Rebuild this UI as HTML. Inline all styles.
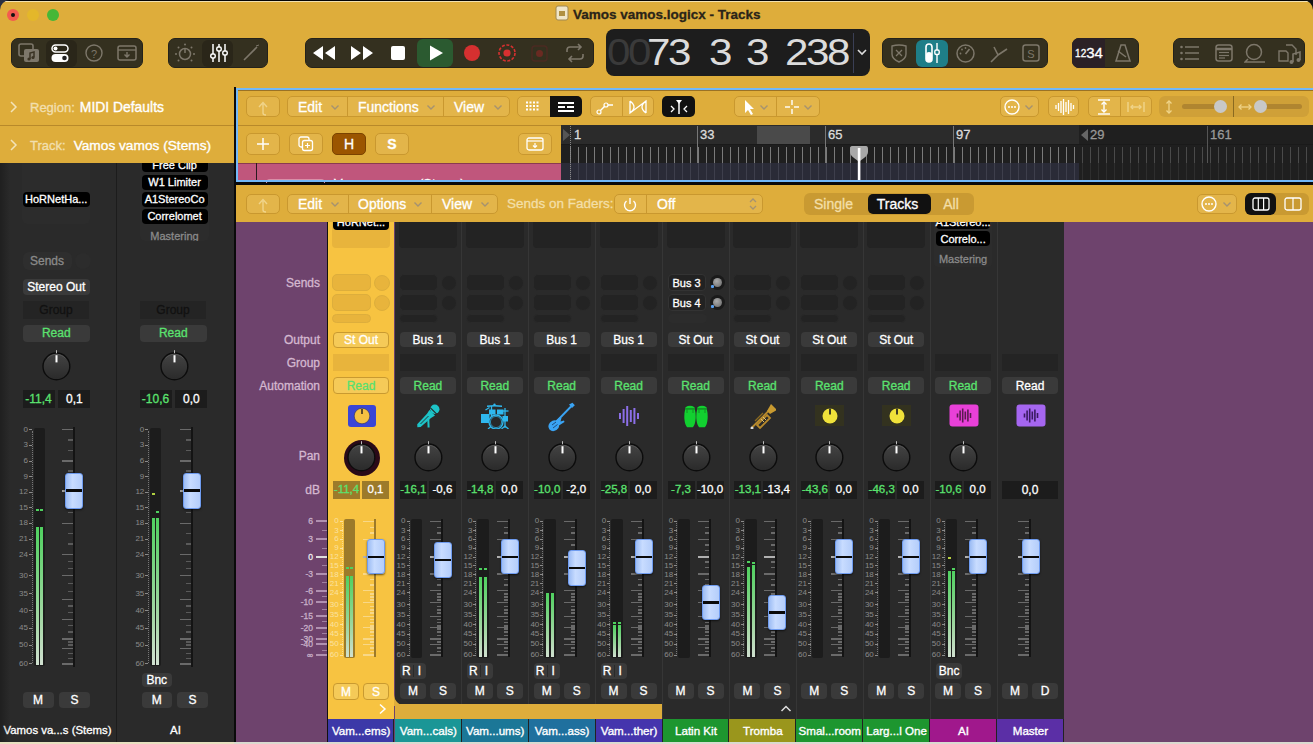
<!DOCTYPE html><html><head><meta charset="utf-8"><style>
html,body{margin:0;padding:0;}
body{width:1313px;height:744px;position:relative;overflow:hidden;font-family:"Liberation Sans",sans-serif;background:#DEAD3B;}
div{position:absolute;box-sizing:border-box;}
.t{white-space:nowrap;-webkit-text-stroke:0.3px currentColor;}
.n{-webkit-text-stroke:0 !important;}
</style></head><body>
<div style="left:0px;top:0px;width:1313px;height:744px;background:#DEAD3B;"></div>
<div style="left:0px;top:0px;width:1313px;height:1px;background:#050505;"></div>
<div style="left:0px;top:1px;width:1313px;height:1px;background:#F3E2B0;"></div>
<svg style="position:absolute;left:0px;top:0px;" width="10" height="10" viewBox="0 0 10 10"><path d="M0 0 H10 A10 10 0 0 0 0 10 Z" fill="#2a3040"/></svg>
<svg style="position:absolute;left:1303px;top:0px;" width="10" height="10" viewBox="0 0 10 10"><path d="M0 0 H10 V10 A10 10 0 0 0 0 0 Z" fill="#111"/></svg>
<div style="left:7px;top:9px;width:12px;height:12px;background:#F45B4F;border-radius:50%;"></div>
<div style="left:27px;top:9px;width:12px;height:12px;background:#E4B72A;border-radius:50%;"></div>
<div style="left:47px;top:9px;width:12px;height:12px;background:#45B737;border-radius:50%;"></div>
<div style="left:11px;top:13px;width:4px;height:4px;background:#111;border-radius:50%;"></div>
<svg style="position:absolute;left:555px;top:5px;" width="14" height="16" viewBox="0 0 14 16"><rect x="1" y="1" width="12" height="14" rx="2" fill="#f0e6c8" stroke="#a08850" stroke-width="1"/><rect x="4" y="6" width="6" height="5" fill="#b09040"/></svg>
<div class="t" style="left:573px;top:0.5px;height:27.0px;line-height:27.0px;font-size:13.5px;color:#2a2418;font-weight:bold;white-space:nowrap;">Vamos vamos.logicx - Tracks</div>
<div style="left:11px;top:38px;width:132px;height:30px;background:#34301F;border:1px solid #24221a;border-radius:7px;"></div>
<div style="left:46px;top:40px;width:31px;height:27px;background:#2A2619;border-radius:6px;"></div>
<div style="left:168px;top:38px;width:100px;height:30px;background:#34301F;border:1px solid #24221a;border-radius:7px;"></div>
<div style="left:202px;top:40px;width:31px;height:27px;background:#2A2619;border-radius:6px;"></div>
<div style="left:305px;top:38px;width:289px;height:30px;background:#34301F;border:1px solid #24221a;border-radius:7px;"></div>
<div style="left:417px;top:39px;width:36px;height:28px;background:#2B5A30;border-radius:6px;"></div>
<div style="left:882px;top:38px;width:166px;height:30px;background:#34301F;border:1px solid #24221a;border-radius:7px;"></div>
<div style="left:916px;top:40px;width:32px;height:27px;background:#1E7E88;border-radius:6px;"></div>
<div style="left:1072px;top:38px;width:67px;height:30px;background:#34301F;border:1px solid #24221a;border-radius:7px;"></div>
<div style="left:1072px;top:38px;width:33px;height:30px;background:#2B2126;border-radius:7px 0 0 7px;"></div>
<div style="left:1173px;top:38px;width:132px;height:30px;background:#34301F;border:1px solid #24221a;border-radius:7px;"></div>
<svg style="position:absolute;left:17px;top:41px;" width="24" height="24" viewBox="0 0 24 24"><rect x="2" y="3" width="14" height="12" rx="2" fill="none" stroke="#7d776a" stroke-width="1.6"/><rect x="7" y="8" width="15" height="13" rx="2" fill="#7d776a"/><path d="M13 18 v-6 l4 -1 v5" stroke="#3a3323" stroke-width="1.5" fill="none"/><circle cx="12" cy="18" r="1.6" fill="#3a3323"/><circle cx="16" cy="16.5" r="1.6" fill="#3a3323"/></svg>
<svg style="position:absolute;left:50px;top:43px;" width="22" height="20" viewBox="0 0 22 20"><rect x="2" y="2" width="16" height="7" rx="3.5" fill="none" stroke="#fff" stroke-width="1.5"/><circle cx="5.5" cy="5.5" r="2" fill="#fff"/><rect x="1.5" y="11" width="17" height="8" rx="4" fill="#fff"/><circle cx="14.5" cy="15" r="2.3" fill="#222"/></svg>
<svg style="position:absolute;left:84px;top:43px;" width="20" height="20" viewBox="0 0 20 20"><circle cx="10" cy="10" r="8" fill="none" stroke="#7d776a" stroke-width="1.4"/><text x="10" y="14.5" font-size="11" text-anchor="middle" fill="#7d776a" font-family="Liberation Sans">?</text></svg>
<svg style="position:absolute;left:117px;top:44px;" width="20" height="18" viewBox="0 0 20 18"><rect x="1" y="2" width="18" height="14" rx="2" fill="none" stroke="#7d776a" stroke-width="1.5"/><line x1="1" y1="6" x2="19" y2="6" stroke="#7d776a" stroke-width="1.3"/><path d="M10 8 v5 M7.5 10.5 l2.5 2.5 l2.5 -2.5" stroke="#7d776a" stroke-width="1.4" fill="none"/></svg>
<svg style="position:absolute;left:174px;top:42px;" width="22" height="22" viewBox="0 0 22 22"><circle cx="11" cy="12" r="5.5" fill="none" stroke="#7d776a" stroke-width="1.5"/><line x1="11" y1="6" x2="11" y2="11" stroke="#7d776a" stroke-width="1.5"/><g fill="#7d776a"><circle cx="11" cy="2.5" r="1"/><circle cx="2" cy="12" r="1"/><circle cx="20" cy="12" r="1"/><circle cx="4.5" cy="5.5" r="1"/><circle cx="17.5" cy="5.5" r="1"/><circle cx="4.5" cy="18.5" r="1"/><circle cx="17.5" cy="18.5" r="1"/></g></svg>
<svg style="position:absolute;left:208px;top:42px;" width="22" height="22" viewBox="0 0 22 22"><g stroke="#fff" stroke-width="1.5" fill="none"><line x1="5" y1="2" x2="5" y2="20"/><line x1="11" y1="2" x2="11" y2="20"/><line x1="17" y1="2" x2="17" y2="20"/></g><g fill="#2a2619" stroke="#fff" stroke-width="1.5"><rect x="2.8" y="12" width="4.4" height="4" rx="1.5"/><rect x="8.8" y="5" width="4.4" height="4" rx="1.5"/><rect x="14.8" y="9" width="4.4" height="4" rx="1.5"/></g></svg>
<svg style="position:absolute;left:241px;top:43px;" width="20" height="20" viewBox="0 0 20 20"><line x1="3" y1="17" x2="16" y2="4" stroke="#7d776a" stroke-width="1.6"/><line x1="15" y1="3" x2="18" y2="2" stroke="#7d776a" stroke-width="1"/></svg>
<svg style="position:absolute;left:311px;top:44px;" width="26" height="18" viewBox="0 0 26 18"><path d="M12 2 L2 9 L12 16 Z M24 2 L14 9 L24 16 Z" fill="#fff"/></svg>
<svg style="position:absolute;left:349px;top:44px;" width="26" height="18" viewBox="0 0 26 18"><path d="M2 2 L12 9 L2 16 Z M14 2 L24 9 L14 16 Z" fill="#fff"/></svg>
<div style="left:391px;top:46px;width:14px;height:14px;background:#fff;border-radius:2px;"></div>
<svg style="position:absolute;left:427px;top:44px;" width="18" height="18" viewBox="0 0 18 18"><path d="M3 1.5 L16 9 L3 16.5 Z" fill="#fff"/></svg>
<div style="left:464px;top:45px;width:16px;height:16px;background:#D63030;border-radius:50%;"></div>
<svg style="position:absolute;left:497px;top:43px;" width="20" height="20" viewBox="0 0 20 20"><circle cx="10" cy="10" r="8" fill="none" stroke="#D63030" stroke-width="1.6" stroke-dasharray="3 1.6"/><circle cx="10" cy="10" r="3.6" fill="#D63030"/></svg>
<svg style="position:absolute;left:531px;top:45px;" width="17" height="17" viewBox="0 0 17 17"><rect x="1" y="1" width="15" height="15" rx="3" fill="none" stroke="#4a2a22" stroke-width="1.5"/><circle cx="8.5" cy="8.5" r="3.5" fill="#6a2a22"/></svg>
<svg style="position:absolute;left:564px;top:43px;" width="22" height="20" viewBox="0 0 22 20"><path d="M3 9 V7 a3 3 0 0 1 3 -3 H17 M14 1 l3 3 l-3 3 M19 11 v2 a3 3 0 0 1 -3 3 H5 M8 19 l-3 -3 l3 -3" stroke="#7d776a" stroke-width="1.6" fill="none"/></svg>
<div style="left:606px;top:29px;width:264px;height:47px;background:#1d1d1d;border-radius:8px;"></div>
<div style="left:853px;top:33px;width:1px;height:40px;background:#3a3f55;"></div>
<svg style="position:absolute;left:856px;top:47px;" width="12" height="10" viewBox="0 0 12 10"><path d="M2 3 L6 7 L10 3" stroke="#ddd" stroke-width="1.6" fill="none"/></svg>
<div class="t" style="left:606.5px;top:15.5px;height:74px;line-height:74px;font-size:37px;color:#3a3a3a;font-weight:normal;white-space:nowrap;letter-spacing:-2.2px;-webkit-text-stroke:0;transform:scaleX(1.14);transform-origin:0 0;">00</div>
<div class="t" style="left:646.5px;top:15.5px;height:74px;line-height:74px;font-size:37px;color:#dcdcdc;font-weight:normal;white-space:nowrap;letter-spacing:-2.2px;-webkit-text-stroke:0;transform:scaleX(1.14);transform-origin:0 0;">73</div>
<div class="t" style="left:709px;top:15.5px;height:74px;line-height:74px;font-size:37px;color:#dcdcdc;font-weight:normal;white-space:nowrap;letter-spacing:-2.2px;-webkit-text-stroke:0;transform:scaleX(1.14);transform-origin:0 0;">3</div>
<div class="t" style="left:746px;top:15.5px;height:74px;line-height:74px;font-size:37px;color:#dcdcdc;font-weight:normal;white-space:nowrap;letter-spacing:-2.2px;-webkit-text-stroke:0;transform:scaleX(1.14);transform-origin:0 0;">3</div>
<div class="t" style="left:784.5px;top:15.5px;height:74px;line-height:74px;font-size:37px;color:#dcdcdc;font-weight:normal;white-space:nowrap;letter-spacing:-2.2px;-webkit-text-stroke:0;transform:scaleX(1.14);transform-origin:0 0;">238</div>
<svg style="position:absolute;left:890px;top:43px;" width="18" height="20" viewBox="0 0 18 20"><path d="M2 3 Q9 1 16 3 V11 Q16 16 9 19 Q2 16 2 11 Z" fill="none" stroke="#7d776a" stroke-width="1.4"/><path d="M6 7 L12 13 M12 7 L6 13" stroke="#7d776a" stroke-width="1.3"/></svg>
<svg style="position:absolute;left:922px;top:41px;" width="20" height="24" viewBox="0 0 20 24"><rect x="4" y="3" width="6" height="18" rx="3" fill="none" stroke="#fff" stroke-width="1.6"/><rect x="4" y="11" width="6" height="10" rx="3" fill="#fff"/><line x1="15" y1="2" x2="15" y2="22" stroke="#fff" stroke-width="1.4"/><rect x="12.8" y="9" width="4.4" height="4.5" rx="1.5" fill="#1E7E88" stroke="#fff" stroke-width="1.4"/></svg>
<svg style="position:absolute;left:955px;top:43px;" width="21" height="21" viewBox="0 0 21 21"><circle cx="10.5" cy="10.5" r="8.5" fill="none" stroke="#7d776a" stroke-width="1.5"/><path d="M10.5 11 L14.5 6" stroke="#7d776a" stroke-width="1.6"/><g fill="#7d776a"><circle cx="5.5" cy="10.5" r="0.9"/><circle cx="7" cy="6.5" r="0.9"/><circle cx="10.5" cy="5" r="0.9"/></g></svg>
<svg style="position:absolute;left:988px;top:42px;" width="22" height="22" viewBox="0 0 22 22"><path d="M3 20 L10 13 M10 13 L6 5 M10 13 L19 7" stroke="#7d776a" stroke-width="1.6" fill="none"/></svg>
<svg style="position:absolute;left:1021px;top:43px;" width="20" height="20" viewBox="0 0 20 20"><rect x="2" y="2" width="16" height="16" rx="2.5" fill="none" stroke="#7d776a" stroke-width="1.5"/><text x="10" y="14.5" font-size="11" text-anchor="middle" fill="#7d776a" font-family="Liberation Sans">S</text></svg>
<div class="t" style="left:1069.0px;top:38px;width:40px;height:30px;line-height:30px;font-size:15px;color:#fff;font-weight:normal;text-align:center;"><span style="font-size:10px;position:relative;top:-1px">12</span>34</div>
<svg style="position:absolute;left:1112px;top:42px;" width="22" height="22" viewBox="0 0 22 22"><path d="M4 19 L9 3 H13 L18 19 Z M4 19 H18" stroke="#7d776a" stroke-width="1.5" fill="none"/><line x1="6" y1="9" x2="14" y2="15" stroke="#7d776a" stroke-width="1.5"/></svg>
<svg style="position:absolute;left:1179px;top:44px;" width="22" height="18" viewBox="0 0 22 18"><g fill="#7d776a"><circle cx="2.5" cy="3" r="1.3"/><circle cx="2.5" cy="9" r="1.3"/><circle cx="2.5" cy="15" r="1.3"/></g><g stroke="#7d776a" stroke-width="1.5"><line x1="6" y1="3" x2="20" y2="3"/><line x1="6" y1="9" x2="20" y2="9"/><line x1="6" y1="15" x2="20" y2="15"/></g></svg>
<svg style="position:absolute;left:1214px;top:43px;" width="20" height="20" viewBox="0 0 20 20"><rect x="2" y="2" width="16" height="16" rx="2.5" fill="none" stroke="#7d776a" stroke-width="1.5"/><line x1="2" y1="6" x2="18" y2="6" stroke="#7d776a" stroke-width="2.5"/><g stroke="#7d776a" stroke-width="1.2"><line x1="5" y1="9.5" x2="15" y2="9.5"/><line x1="5" y1="12.5" x2="15" y2="12.5"/><line x1="5" y1="15" x2="11" y2="15"/></g></svg>
<svg style="position:absolute;left:1244px;top:43px;" width="22" height="20" viewBox="0 0 22 20"><circle cx="10" cy="9" r="7.5" fill="none" stroke="#7d776a" stroke-width="1.5"/><path d="M4 16 L1 19 H21" stroke="#7d776a" stroke-width="1.5" fill="none"/></svg>
<svg style="position:absolute;left:1277px;top:41px;" width="26" height="24" viewBox="0 0 26 24"><path d="M2 10 H9 L11 12 V20 H2 Z" fill="none" stroke="#7d776a" stroke-width="1.4"/><path d="M9 4 H15 L19 8 V14" fill="none" stroke="#7d776a" stroke-width="1.4"/><path d="M16 21 V13 L23 11 V19" stroke="#7d776a" stroke-width="1.6" fill="none"/><circle cx="14.5" cy="21" r="2" fill="#7d776a"/><circle cx="21.5" cy="19" r="2" fill="#7d776a"/></svg>
<div style="left:0px;top:88px;width:234px;height:75px;background:#DEAD3B;"></div>
<div style="left:0px;top:125px;width:234px;height:1px;background:#b8892a;"></div>
<svg style="position:absolute;left:9px;top:100px;" width="10" height="14" viewBox="0 0 10 14"><path d="M2 2 L7 7 L2 12" stroke="#f3e3b8" stroke-width="1.5" fill="none"/></svg>
<svg style="position:absolute;left:9px;top:138px;" width="10" height="14" viewBox="0 0 10 14"><path d="M2 2 L7 7 L2 12" stroke="#f3e3b8" stroke-width="1.5" fill="none"/></svg>
<div class="t" style="left:30px;top:94px;height:26px;line-height:26px;font-size:13px;color:#fff;font-weight:normal;white-space:nowrap;-webkit-text-stroke:0.35px currentColor;"><span style="color:#F2DFAE">Region:</span><span style="margin-left:6px">MIDI Defaults</span></div>
<div class="t" style="left:30px;top:132px;height:26px;line-height:26px;font-size:13px;color:#fff;font-weight:normal;white-space:nowrap;-webkit-text-stroke:0.35px currentColor;"><span style="color:#F2DFAE">Track:</span><span style="margin-left:9px">Vamos vamos (Stems)</span></div>
<div style="left:234px;top:87px;width:2px;height:97px;background:#0a0a0a;"></div>
<div style="left:236px;top:88px;width:1077px;height:95px;background:#72B8F8;"></div>
<div style="left:238px;top:90px;width:1075px;height:91px;background:#DEAD3B;"></div>
<div style="left:238px;top:90px;width:1075px;height:1px;background:#9a7225;"></div>
<div style="left:238px;top:125px;width:1075px;height:1px;background:#b8892a;"></div>
<div style="left:0px;top:182px;width:1313px;height:3px;background:#0a0a0a;"></div>
<div style="left:246px;top:96px;width:34px;height:21px;background:#E3B54A;border:1px solid #C9982F;box-sizing:border-box;border-radius:5px;"></div>
<svg style="position:absolute;left:254px;top:98px;" width="18" height="18" viewBox="0 0 18 18"><path d="M9 15 V6 M5 9 L9 4.5 L13 9 M9 15 Q9 17 12 17" stroke="#F0D48A" stroke-width="1.4" fill="none"/></svg>
<div style="left:287px;top:96px;width:223px;height:21px;background:#E3B54A;border:1px solid #C9982F;box-sizing:border-box;border-radius:5px;"></div>
<div style="left:347px;top:97px;width:1px;height:19px;background:#C9982F;"></div>
<div style="left:443px;top:97px;width:1px;height:19px;background:#C9982F;"></div>
<div class="t" style="left:298px;top:92.5px;height:28px;line-height:28px;font-size:14px;color:#fff;font-weight:normal;white-space:nowrap;">Edit</div>
<svg style="position:absolute;left:330px;top:104px;" width="10" height="7" viewBox="0 0 10 7"><path d="M1.5 1.5 L5 5 L8.5 1.5" stroke="#A59270" stroke-width="1.4" fill="none"/></svg>
<div class="t" style="left:358px;top:92.5px;height:28px;line-height:28px;font-size:14px;color:#fff;font-weight:normal;white-space:nowrap;">Functions</div>
<svg style="position:absolute;left:426px;top:104px;" width="10" height="7" viewBox="0 0 10 7"><path d="M1.5 1.5 L5 5 L8.5 1.5" stroke="#A59270" stroke-width="1.4" fill="none"/></svg>
<div class="t" style="left:454px;top:92.5px;height:28px;line-height:28px;font-size:14px;color:#fff;font-weight:normal;white-space:nowrap;">View</div>
<svg style="position:absolute;left:493px;top:104px;" width="10" height="7" viewBox="0 0 10 7"><path d="M1.5 1.5 L5 5 L8.5 1.5" stroke="#A59270" stroke-width="1.4" fill="none"/></svg>
<div style="left:517px;top:96px;width:65px;height:21px;background:#E3B54A;border:1px solid #C9982F;box-sizing:border-box;border-radius:5px;"></div>
<div style="left:550px;top:96px;width:32px;height:21px;background:#111;border-radius:0 5px 5px 0;"></div>
<svg style="position:absolute;left:524px;top:99px;" width="18" height="16" viewBox="0 0 18 16"><g fill="#fff"><rect x="2.0" y="2.5" width="2" height="2"/><rect x="2.0" y="6.0" width="2" height="2"/><rect x="2.0" y="9.5" width="2" height="2"/><rect x="5.5" y="2.5" width="2" height="2"/><rect x="5.5" y="6.0" width="2" height="2"/><rect x="5.5" y="9.5" width="2" height="2"/><rect x="9.0" y="2.5" width="2" height="2"/><rect x="9.0" y="6.0" width="2" height="2"/><rect x="9.0" y="9.5" width="2" height="2"/><rect x="12.5" y="2.5" width="2" height="2"/><rect x="12.5" y="6.0" width="2" height="2"/><rect x="12.5" y="9.5" width="2" height="2"/></g></svg>
<svg style="position:absolute;left:556px;top:99px;" width="20" height="16" viewBox="0 0 20 16"><g fill="#fff"><rect x="2" y="3" width="16" height="2"/><rect x="2" y="7" width="7" height="2"/><rect x="11" y="7" width="7" height="2"/><rect x="2" y="11" width="16" height="2"/></g></svg>
<div style="left:590px;top:96px;width:64px;height:21px;background:#E3B54A;border:1px solid #C9982F;box-sizing:border-box;border-radius:5px;"></div>
<div style="left:622px;top:97px;width:1px;height:19px;background:#C9982F;"></div>
<svg style="position:absolute;left:594px;top:98px;" width="24" height="18" viewBox="0 0 24 18"><path d="M5 14 L12 7 H19" stroke="#fff" stroke-width="1.4" fill="none"/><circle cx="5" cy="14" r="2" fill="#E3B54A" stroke="#fff" stroke-width="1.2"/><circle cx="12" cy="7" r="2" fill="#E3B54A" stroke="#fff" stroke-width="1.2"/></svg>
<svg style="position:absolute;left:626px;top:98px;" width="24" height="18" viewBox="0 0 24 18"><path d="M4 3 V15 L20 3 V15 M4 3 Q12 9 4 15 M20 3 Q12 9 20 15" stroke="#fff" stroke-width="1.3" fill="none"/></svg>
<div style="left:662px;top:96px;width:33px;height:21px;background:#111;border-radius:5px;"></div>
<svg style="position:absolute;left:668px;top:98px;" width="22" height="18" viewBox="0 0 22 18"><path d="M11 5 V16" stroke="#fff" stroke-width="1.5"/><path d="M8 2 H14 L11 6 Z" fill="#fff"/><path d="M3 8 L6 11 L3 14 M19 8 L16 11 L19 14" stroke="#fff" stroke-width="1.3" fill="none"/></svg>
<div style="left:734px;top:96px;width:86px;height:21px;background:#E3B54A;border:1px solid #C9982F;box-sizing:border-box;border-radius:5px;"></div>
<div style="left:776px;top:97px;width:1px;height:19px;background:#C9982F;"></div>
<svg style="position:absolute;left:742px;top:98px;" width="14" height="18" viewBox="0 0 14 18"><path d="M3 2 L3 15 L6 12 L9 17 L11 16 L8 11 L12 11 Z" fill="#fff"/></svg>
<svg style="position:absolute;left:759px;top:104px;" width="10" height="7" viewBox="0 0 10 7"><path d="M1.5 1.5 L5 5 L8.5 1.5" stroke="#A59270" stroke-width="1.4" fill="none"/></svg>
<svg style="position:absolute;left:783px;top:98px;" width="18" height="18" viewBox="0 0 18 18"><g stroke="#fff" stroke-width="1.4"><line x1="9" y1="2" x2="9" y2="7"/><line x1="9" y1="11" x2="9" y2="16"/><line x1="2" y1="9" x2="7" y2="9"/><line x1="11" y1="9" x2="16" y2="9"/></g></svg>
<svg style="position:absolute;left:803px;top:104px;" width="10" height="7" viewBox="0 0 10 7"><path d="M1.5 1.5 L5 5 L8.5 1.5" stroke="#A59270" stroke-width="1.4" fill="none"/></svg>
<div style="left:1000px;top:96px;width:39px;height:21px;background:#E3B54A;border:1px solid #C9982F;box-sizing:border-box;border-radius:5px;"></div>
<svg style="position:absolute;left:1003px;top:98px;" width="18" height="18" viewBox="0 0 18 18"><circle cx="9" cy="9" r="7" fill="none" stroke="#fff" stroke-width="1.4"/><g fill="#fff"><circle cx="6" cy="9" r="1"/><circle cx="9" cy="9" r="1"/><circle cx="12" cy="9" r="1"/></g></svg>
<svg style="position:absolute;left:1024px;top:104px;" width="10" height="7" viewBox="0 0 10 7"><path d="M1.5 1.5 L5 5 L8.5 1.5" stroke="#A59270" stroke-width="1.4" fill="none"/></svg>
<div style="left:1048px;top:96px;width:31px;height:21px;background:#E3B54A;border:1px solid #C9982F;box-sizing:border-box;border-radius:5px;"></div>
<svg style="position:absolute;left:1053px;top:98px;" width="22" height="18" viewBox="0 0 22 18"><g stroke="#fff" stroke-width="1.3"><line x1="3.0" y1="7" x2="3.0" y2="11"/><line x1="5.5" y1="5" x2="5.5" y2="13"/><line x1="8.0" y1="3" x2="8.0" y2="15"/><line x1="10.5" y1="1" x2="10.5" y2="17"/><line x1="13.0" y1="4" x2="13.0" y2="14"/><line x1="15.5" y1="2" x2="15.5" y2="16"/><line x1="18.0" y1="5" x2="18.0" y2="13"/><line x1="20.5" y1="7" x2="20.5" y2="11"/></g></svg>
<div style="left:1088px;top:96px;width:64px;height:21px;background:#E3B54A;border:1px solid #C9982F;box-sizing:border-box;border-radius:5px;"></div>
<div style="left:1120px;top:97px;width:1px;height:19px;background:#C9982F;"></div>
<svg style="position:absolute;left:1094px;top:98px;" width="20" height="18" viewBox="0 0 20 18"><g stroke="#fff" stroke-width="1.4" fill="none"><line x1="4" y1="2" x2="16" y2="2"/><line x1="4" y1="16" x2="16" y2="16"/><line x1="10" y1="4" x2="10" y2="14"/><path d="M7.5 6.5 L10 4 L12.5 6.5 M7.5 11.5 L10 14 L12.5 11.5"/></g></svg>
<svg style="position:absolute;left:1126px;top:98px;" width="20" height="18" viewBox="0 0 20 18"><g stroke="#F0D48A" stroke-width="1.4" fill="none"><line x1="2" y1="4" x2="2" y2="14"/><line x1="18" y1="4" x2="18" y2="14"/><line x1="5" y1="9" x2="15" y2="9"/><path d="M7 7 L5 9 L7 11 M13 7 L15 9 L13 11"/></g></svg>
<div style="left:1159px;top:96px;width:150px;height:21px;background:#CFA038;border-radius:6px;"></div>
<div style="left:1233px;top:96px;width:1px;height:21px;background:#8a6a20;"></div>
<svg style="position:absolute;left:1162px;top:98px;" width="14" height="18" viewBox="0 0 14 18"><g stroke="#F0D48A" stroke-width="1.3" fill="none"><line x1="7" y1="3" x2="7" y2="15"/><path d="M4.5 5.5 L7 3 L9.5 5.5 M4.5 12.5 L7 15 L9.5 12.5"/></g></svg>
<div style="left:1182px;top:104px;width:44px;height:5px;background:#B08530;border-radius:3px;"></div>
<div style="left:1214px;top:100px;width:13px;height:13px;background:#c8c8c8;border-radius:50%;"></div>
<svg style="position:absolute;left:1236px;top:98px;" width="18" height="18" viewBox="0 0 18 18"><g stroke="#F0D48A" stroke-width="1.3" fill="none"><line x1="3" y1="9" x2="15" y2="9"/><path d="M5.5 6.5 L3 9 L5.5 11.5 M12.5 6.5 L15 9 L12.5 11.5"/></g></svg>
<div style="left:1255px;top:104px;width:47px;height:5px;background:#B08530;border-radius:3px;"></div>
<div style="left:1254px;top:100px;width:13px;height:13px;background:#c8c8c8;border-radius:50%;"></div>
<div style="left:246px;top:133px;width:34px;height:22px;background:#E3B54A;border:1px solid #C9982F;box-sizing:border-box;border-radius:5px;"></div>
<svg style="position:absolute;left:254px;top:135px;" width="18" height="18" viewBox="0 0 18 18"><g stroke="#fff" stroke-width="1.5"><line x1="9" y1="3" x2="9" y2="15"/><line x1="3" y1="9" x2="15" y2="9"/></g></svg>
<div style="left:289px;top:133px;width:34px;height:22px;background:#E3B54A;border:1px solid #C9982F;box-sizing:border-box;border-radius:5px;"></div>
<svg style="position:absolute;left:297px;top:135px;" width="18" height="18" viewBox="0 0 18 18"><rect x="2" y="2" width="10" height="10" rx="2" fill="none" stroke="#fff" stroke-width="1.3"/><rect x="5.5" y="5.5" width="10" height="10" rx="2" fill="#E3B54A" stroke="#fff" stroke-width="1.3"/><path d="M10.5 8 V13 M8 10.5 H13" stroke="#fff" stroke-width="1.2"/></svg>
<div style="left:332px;top:133px;width:34px;height:22px;background:#9B5500;border:1px solid #7a4300;box-sizing:border-box;border-radius:5px;"></div>
<div class="t" style="left:334.0px;top:130px;width:30px;height:28px;line-height:28px;font-size:14px;color:#fff;font-weight:normal;text-align:center;">H</div>
<div style="left:375px;top:133px;width:34px;height:22px;background:#E3B54A;border:1px solid #C9982F;box-sizing:border-box;border-radius:5px;"></div>
<div class="t" style="left:377.0px;top:130px;width:30px;height:28px;line-height:28px;font-size:14px;color:#fff;font-weight:bold;text-align:center;">S</div>
<div style="left:518px;top:133px;width:34px;height:22px;background:#E3B54A;border:1px solid #C9982F;box-sizing:border-box;border-radius:5px;"></div>
<svg style="position:absolute;left:525px;top:136px;" width="20" height="16" viewBox="0 0 20 16"><rect x="2" y="2" width="16" height="12" rx="2" fill="none" stroke="#fff" stroke-width="1.3"/><line x1="2" y1="5" x2="18" y2="5" stroke="#fff" stroke-width="1.2"/><path d="M10 7 V11 M8 9.5 L10 11.5 L12 9.5" stroke="#fff" stroke-width="1.2" fill="none"/></svg>
<div style="left:238px;top:163px;width:324px;height:18px;background:#C0567C;"></div>
<div style="left:238px;top:163px;width:324px;height:1px;background:#8a3a50;"></div>
<div style="left:256px;top:163px;width:1px;height:18px;background:#2a1a20;"></div>
<div style="left:266px;top:178.5px;width:59px;height:4px;border:1px solid #d98fa8;border-bottom:none;border-radius:4px 4px 0 0;"></div>
<div style="left:238px;top:163px;width:324px;height:18px;overflow:hidden;"><div class="t" style="left:96px;top:13px;font-size:13px;line-height:16px;color:#fff;">Vamos vamos (Stems)</div></div>
<div style="left:561px;top:125px;width:752px;height:56px;background:#1f1f1f;"></div>
<div style="left:561px;top:125px;width:518px;height:19px;background:#2b2b2b;"></div>
<div style="left:561px;top:144px;width:752px;height:1px;background:#1a1a1a;"></div>
<div style="left:561px;top:163px;width:518px;height:18px;background:#2A2B37;"></div>
<div style="left:757px;top:126px;width:53px;height:18px;background:#4a4a4a;"></div>
<svg style="position:absolute;left:562px;top:126px;" width="10" height="18" viewBox="0 0 10 18"><path d="M1 3 L8 9 L1 15 Z" fill="#555"/></svg>
<div style="left:570px;top:147px;width:1px;height:16px;background:#7a7a7a;"></div><div style="left:570px;top:163px;width:1px;height:18px;background:#3e3f4c;"></div><div style="left:578px;top:147px;width:1px;height:16px;background:#7a7a7a;"></div><div style="left:578px;top:163px;width:1px;height:18px;background:#3e3f4c;"></div><div style="left:586px;top:147px;width:1px;height:16px;background:#7a7a7a;"></div><div style="left:586px;top:163px;width:1px;height:18px;background:#3e3f4c;"></div><div style="left:594px;top:147px;width:1px;height:16px;background:#7a7a7a;"></div><div style="left:594px;top:163px;width:1px;height:18px;background:#3e3f4c;"></div><div style="left:602px;top:147px;width:1px;height:16px;background:#7a7a7a;"></div><div style="left:602px;top:163px;width:1px;height:18px;background:#3e3f4c;"></div><div style="left:610px;top:147px;width:1px;height:16px;background:#7a7a7a;"></div><div style="left:610px;top:163px;width:1px;height:18px;background:#3e3f4c;"></div><div style="left:618px;top:147px;width:1px;height:16px;background:#7a7a7a;"></div><div style="left:618px;top:163px;width:1px;height:18px;background:#3e3f4c;"></div><div style="left:626px;top:147px;width:1px;height:16px;background:#7a7a7a;"></div><div style="left:626px;top:163px;width:1px;height:18px;background:#3e3f4c;"></div><div style="left:634px;top:147px;width:1px;height:16px;background:#7a7a7a;"></div><div style="left:634px;top:163px;width:1px;height:18px;background:#3e3f4c;"></div><div style="left:642px;top:147px;width:1px;height:16px;background:#7a7a7a;"></div><div style="left:642px;top:163px;width:1px;height:18px;background:#3e3f4c;"></div><div style="left:650px;top:147px;width:1px;height:16px;background:#7a7a7a;"></div><div style="left:650px;top:163px;width:1px;height:18px;background:#3e3f4c;"></div><div style="left:658px;top:147px;width:1px;height:16px;background:#7a7a7a;"></div><div style="left:658px;top:163px;width:1px;height:18px;background:#3e3f4c;"></div><div style="left:666px;top:147px;width:1px;height:16px;background:#7a7a7a;"></div><div style="left:666px;top:163px;width:1px;height:18px;background:#3e3f4c;"></div><div style="left:674px;top:147px;width:1px;height:16px;background:#7a7a7a;"></div><div style="left:674px;top:163px;width:1px;height:18px;background:#3e3f4c;"></div><div style="left:682px;top:147px;width:1px;height:16px;background:#7a7a7a;"></div><div style="left:682px;top:163px;width:1px;height:18px;background:#3e3f4c;"></div><div style="left:690px;top:147px;width:1px;height:16px;background:#7a7a7a;"></div><div style="left:690px;top:163px;width:1px;height:18px;background:#3e3f4c;"></div><div style="left:698px;top:147px;width:1px;height:16px;background:#7a7a7a;"></div><div style="left:698px;top:163px;width:1px;height:18px;background:#3e3f4c;"></div><div style="left:706px;top:147px;width:1px;height:16px;background:#7a7a7a;"></div><div style="left:706px;top:163px;width:1px;height:18px;background:#3e3f4c;"></div><div style="left:714px;top:147px;width:1px;height:16px;background:#7a7a7a;"></div><div style="left:714px;top:163px;width:1px;height:18px;background:#3e3f4c;"></div><div style="left:722px;top:147px;width:1px;height:16px;background:#7a7a7a;"></div><div style="left:722px;top:163px;width:1px;height:18px;background:#3e3f4c;"></div><div style="left:730px;top:147px;width:1px;height:16px;background:#7a7a7a;"></div><div style="left:730px;top:163px;width:1px;height:18px;background:#3e3f4c;"></div><div style="left:738px;top:147px;width:1px;height:16px;background:#7a7a7a;"></div><div style="left:738px;top:163px;width:1px;height:18px;background:#3e3f4c;"></div><div style="left:746px;top:147px;width:1px;height:16px;background:#7a7a7a;"></div><div style="left:746px;top:163px;width:1px;height:18px;background:#3e3f4c;"></div><div style="left:754px;top:147px;width:1px;height:16px;background:#7a7a7a;"></div><div style="left:754px;top:163px;width:1px;height:18px;background:#3e3f4c;"></div><div style="left:762px;top:147px;width:1px;height:16px;background:#7a7a7a;"></div><div style="left:762px;top:163px;width:1px;height:18px;background:#3e3f4c;"></div><div style="left:770px;top:147px;width:1px;height:16px;background:#7a7a7a;"></div><div style="left:770px;top:163px;width:1px;height:18px;background:#3e3f4c;"></div><div style="left:778px;top:147px;width:1px;height:16px;background:#7a7a7a;"></div><div style="left:778px;top:163px;width:1px;height:18px;background:#3e3f4c;"></div><div style="left:786px;top:147px;width:1px;height:16px;background:#7a7a7a;"></div><div style="left:786px;top:163px;width:1px;height:18px;background:#3e3f4c;"></div><div style="left:794px;top:147px;width:1px;height:16px;background:#7a7a7a;"></div><div style="left:794px;top:163px;width:1px;height:18px;background:#3e3f4c;"></div><div style="left:802px;top:147px;width:1px;height:16px;background:#7a7a7a;"></div><div style="left:802px;top:163px;width:1px;height:18px;background:#3e3f4c;"></div><div style="left:810px;top:147px;width:1px;height:16px;background:#7a7a7a;"></div><div style="left:810px;top:163px;width:1px;height:18px;background:#3e3f4c;"></div><div style="left:818px;top:147px;width:1px;height:16px;background:#7a7a7a;"></div><div style="left:818px;top:163px;width:1px;height:18px;background:#3e3f4c;"></div><div style="left:826px;top:147px;width:1px;height:16px;background:#7a7a7a;"></div><div style="left:826px;top:163px;width:1px;height:18px;background:#3e3f4c;"></div><div style="left:834px;top:147px;width:1px;height:16px;background:#7a7a7a;"></div><div style="left:834px;top:163px;width:1px;height:18px;background:#3e3f4c;"></div><div style="left:842px;top:147px;width:1px;height:16px;background:#7a7a7a;"></div><div style="left:842px;top:163px;width:1px;height:18px;background:#3e3f4c;"></div><div style="left:850px;top:147px;width:1px;height:16px;background:#7a7a7a;"></div><div style="left:850px;top:163px;width:1px;height:18px;background:#3e3f4c;"></div><div style="left:858px;top:147px;width:1px;height:16px;background:#7a7a7a;"></div><div style="left:858px;top:163px;width:1px;height:18px;background:#3e3f4c;"></div><div style="left:866px;top:147px;width:1px;height:16px;background:#7a7a7a;"></div><div style="left:866px;top:163px;width:1px;height:18px;background:#3e3f4c;"></div><div style="left:874px;top:147px;width:1px;height:16px;background:#7a7a7a;"></div><div style="left:874px;top:163px;width:1px;height:18px;background:#3e3f4c;"></div><div style="left:882px;top:147px;width:1px;height:16px;background:#7a7a7a;"></div><div style="left:882px;top:163px;width:1px;height:18px;background:#3e3f4c;"></div><div style="left:890px;top:147px;width:1px;height:16px;background:#7a7a7a;"></div><div style="left:890px;top:163px;width:1px;height:18px;background:#3e3f4c;"></div><div style="left:898px;top:147px;width:1px;height:16px;background:#7a7a7a;"></div><div style="left:898px;top:163px;width:1px;height:18px;background:#3e3f4c;"></div><div style="left:906px;top:147px;width:1px;height:16px;background:#7a7a7a;"></div><div style="left:906px;top:163px;width:1px;height:18px;background:#3e3f4c;"></div><div style="left:914px;top:147px;width:1px;height:16px;background:#7a7a7a;"></div><div style="left:914px;top:163px;width:1px;height:18px;background:#3e3f4c;"></div><div style="left:922px;top:147px;width:1px;height:16px;background:#7a7a7a;"></div><div style="left:922px;top:163px;width:1px;height:18px;background:#3e3f4c;"></div><div style="left:930px;top:147px;width:1px;height:16px;background:#7a7a7a;"></div><div style="left:930px;top:163px;width:1px;height:18px;background:#3e3f4c;"></div><div style="left:938px;top:147px;width:1px;height:16px;background:#7a7a7a;"></div><div style="left:938px;top:163px;width:1px;height:18px;background:#3e3f4c;"></div><div style="left:946px;top:147px;width:1px;height:16px;background:#7a7a7a;"></div><div style="left:946px;top:163px;width:1px;height:18px;background:#3e3f4c;"></div><div style="left:954px;top:147px;width:1px;height:16px;background:#7a7a7a;"></div><div style="left:954px;top:163px;width:1px;height:18px;background:#3e3f4c;"></div><div style="left:962px;top:147px;width:1px;height:16px;background:#7a7a7a;"></div><div style="left:962px;top:163px;width:1px;height:18px;background:#3e3f4c;"></div><div style="left:970px;top:147px;width:1px;height:16px;background:#7a7a7a;"></div><div style="left:970px;top:163px;width:1px;height:18px;background:#3e3f4c;"></div><div style="left:978px;top:147px;width:1px;height:16px;background:#7a7a7a;"></div><div style="left:978px;top:163px;width:1px;height:18px;background:#3e3f4c;"></div><div style="left:986px;top:147px;width:1px;height:16px;background:#7a7a7a;"></div><div style="left:986px;top:163px;width:1px;height:18px;background:#3e3f4c;"></div><div style="left:994px;top:147px;width:1px;height:16px;background:#7a7a7a;"></div><div style="left:994px;top:163px;width:1px;height:18px;background:#3e3f4c;"></div><div style="left:1002px;top:147px;width:1px;height:16px;background:#7a7a7a;"></div><div style="left:1002px;top:163px;width:1px;height:18px;background:#3e3f4c;"></div><div style="left:1010px;top:147px;width:1px;height:16px;background:#7a7a7a;"></div><div style="left:1010px;top:163px;width:1px;height:18px;background:#3e3f4c;"></div><div style="left:1018px;top:147px;width:1px;height:16px;background:#7a7a7a;"></div><div style="left:1018px;top:163px;width:1px;height:18px;background:#3e3f4c;"></div><div style="left:1026px;top:147px;width:1px;height:16px;background:#7a7a7a;"></div><div style="left:1026px;top:163px;width:1px;height:18px;background:#3e3f4c;"></div><div style="left:1034px;top:147px;width:1px;height:16px;background:#7a7a7a;"></div><div style="left:1034px;top:163px;width:1px;height:18px;background:#3e3f4c;"></div><div style="left:1042px;top:147px;width:1px;height:16px;background:#7a7a7a;"></div><div style="left:1042px;top:163px;width:1px;height:18px;background:#3e3f4c;"></div><div style="left:1050px;top:147px;width:1px;height:16px;background:#7a7a7a;"></div><div style="left:1050px;top:163px;width:1px;height:18px;background:#3e3f4c;"></div><div style="left:1058px;top:147px;width:1px;height:16px;background:#7a7a7a;"></div><div style="left:1058px;top:163px;width:1px;height:18px;background:#3e3f4c;"></div><div style="left:1066px;top:147px;width:1px;height:16px;background:#7a7a7a;"></div><div style="left:1066px;top:163px;width:1px;height:18px;background:#3e3f4c;"></div><div style="left:1074px;top:147px;width:1px;height:16px;background:#7a7a7a;"></div><div style="left:1074px;top:163px;width:1px;height:18px;background:#3e3f4c;"></div><div style="left:1082px;top:147px;width:1px;height:16px;background:#4a4a4a;"></div><div style="left:1082px;top:163px;width:1px;height:18px;background:#2e2e2e;"></div><div style="left:1090px;top:147px;width:1px;height:16px;background:#4a4a4a;"></div><div style="left:1090px;top:163px;width:1px;height:18px;background:#2e2e2e;"></div><div style="left:1098px;top:147px;width:1px;height:16px;background:#4a4a4a;"></div><div style="left:1098px;top:163px;width:1px;height:18px;background:#2e2e2e;"></div><div style="left:1106px;top:147px;width:1px;height:16px;background:#4a4a4a;"></div><div style="left:1106px;top:163px;width:1px;height:18px;background:#2e2e2e;"></div><div style="left:1114px;top:147px;width:1px;height:16px;background:#4a4a4a;"></div><div style="left:1114px;top:163px;width:1px;height:18px;background:#2e2e2e;"></div><div style="left:1122px;top:147px;width:1px;height:16px;background:#4a4a4a;"></div><div style="left:1122px;top:163px;width:1px;height:18px;background:#2e2e2e;"></div><div style="left:1130px;top:147px;width:1px;height:16px;background:#4a4a4a;"></div><div style="left:1130px;top:163px;width:1px;height:18px;background:#2e2e2e;"></div><div style="left:1138px;top:147px;width:1px;height:16px;background:#4a4a4a;"></div><div style="left:1138px;top:163px;width:1px;height:18px;background:#2e2e2e;"></div><div style="left:1146px;top:147px;width:1px;height:16px;background:#4a4a4a;"></div><div style="left:1146px;top:163px;width:1px;height:18px;background:#2e2e2e;"></div><div style="left:1154px;top:147px;width:1px;height:16px;background:#4a4a4a;"></div><div style="left:1154px;top:163px;width:1px;height:18px;background:#2e2e2e;"></div><div style="left:1162px;top:147px;width:1px;height:16px;background:#4a4a4a;"></div><div style="left:1162px;top:163px;width:1px;height:18px;background:#2e2e2e;"></div><div style="left:1170px;top:147px;width:1px;height:16px;background:#4a4a4a;"></div><div style="left:1170px;top:163px;width:1px;height:18px;background:#2e2e2e;"></div><div style="left:1178px;top:147px;width:1px;height:16px;background:#4a4a4a;"></div><div style="left:1178px;top:163px;width:1px;height:18px;background:#2e2e2e;"></div><div style="left:1186px;top:147px;width:1px;height:16px;background:#4a4a4a;"></div><div style="left:1186px;top:163px;width:1px;height:18px;background:#2e2e2e;"></div><div style="left:1194px;top:147px;width:1px;height:16px;background:#4a4a4a;"></div><div style="left:1194px;top:163px;width:1px;height:18px;background:#2e2e2e;"></div><div style="left:1202px;top:147px;width:1px;height:16px;background:#4a4a4a;"></div><div style="left:1202px;top:163px;width:1px;height:18px;background:#2e2e2e;"></div><div style="left:1210px;top:147px;width:1px;height:16px;background:#4a4a4a;"></div><div style="left:1210px;top:163px;width:1px;height:18px;background:#2e2e2e;"></div><div style="left:1218px;top:147px;width:1px;height:16px;background:#4a4a4a;"></div><div style="left:1218px;top:163px;width:1px;height:18px;background:#2e2e2e;"></div><div style="left:1226px;top:147px;width:1px;height:16px;background:#4a4a4a;"></div><div style="left:1226px;top:163px;width:1px;height:18px;background:#2e2e2e;"></div><div style="left:1234px;top:147px;width:1px;height:16px;background:#4a4a4a;"></div><div style="left:1234px;top:163px;width:1px;height:18px;background:#2e2e2e;"></div><div style="left:1242px;top:147px;width:1px;height:16px;background:#4a4a4a;"></div><div style="left:1242px;top:163px;width:1px;height:18px;background:#2e2e2e;"></div><div style="left:1250px;top:147px;width:1px;height:16px;background:#4a4a4a;"></div><div style="left:1250px;top:163px;width:1px;height:18px;background:#2e2e2e;"></div><div style="left:1258px;top:147px;width:1px;height:16px;background:#4a4a4a;"></div><div style="left:1258px;top:163px;width:1px;height:18px;background:#2e2e2e;"></div><div style="left:1266px;top:147px;width:1px;height:16px;background:#4a4a4a;"></div><div style="left:1266px;top:163px;width:1px;height:18px;background:#2e2e2e;"></div><div style="left:1274px;top:147px;width:1px;height:16px;background:#4a4a4a;"></div><div style="left:1274px;top:163px;width:1px;height:18px;background:#2e2e2e;"></div><div style="left:1282px;top:147px;width:1px;height:16px;background:#4a4a4a;"></div><div style="left:1282px;top:163px;width:1px;height:18px;background:#2e2e2e;"></div><div style="left:1290px;top:147px;width:1px;height:16px;background:#4a4a4a;"></div><div style="left:1290px;top:163px;width:1px;height:18px;background:#2e2e2e;"></div><div style="left:1298px;top:147px;width:1px;height:16px;background:#4a4a4a;"></div><div style="left:1298px;top:163px;width:1px;height:18px;background:#2e2e2e;"></div><div style="left:1306px;top:147px;width:1px;height:16px;background:#4a4a4a;"></div><div style="left:1306px;top:163px;width:1px;height:18px;background:#2e2e2e;"></div>
<div style="left:570px;top:126px;width:1px;height:55px;border-left:1px dotted #888;"></div>
<div style="left:697px;top:126px;width:1px;height:37px;background:#777;"></div>
<div class="t" style="left:700px;top:121.5px;height:26px;line-height:26px;font-size:13px;color:#ddd;font-weight:normal;white-space:nowrap;">33</div>
<div style="left:825px;top:126px;width:1px;height:37px;background:#777;"></div>
<div class="t" style="left:828px;top:121.5px;height:26px;line-height:26px;font-size:13px;color:#ddd;font-weight:normal;white-space:nowrap;">65</div>
<div style="left:953px;top:126px;width:1px;height:37px;background:#777;"></div>
<div class="t" style="left:956px;top:121.5px;height:26px;line-height:26px;font-size:13px;color:#ddd;font-weight:normal;white-space:nowrap;">97</div>
<div style="left:1207px;top:126px;width:1px;height:37px;background:#555;"></div>
<div class="t" style="left:1210px;top:121.5px;height:26px;line-height:26px;font-size:13px;color:#999;font-weight:normal;white-space:nowrap;">161</div>
<div class="t" style="left:574px;top:121.5px;height:26px;line-height:26px;font-size:13px;color:#ddd;font-weight:normal;white-space:nowrap;">1</div>
<div style="left:1079px;top:125px;width:234px;height:56px;background:rgba(0,0,0,0);"></div>
<svg style="position:absolute;left:1079px;top:126px;" width="10" height="18" viewBox="0 0 10 18"><path d="M9 3 L2 9 L9 15 Z" fill="#666"/></svg>
<div class="t" style="left:1090px;top:121.5px;height:26px;line-height:26px;font-size:13px;color:#999;font-weight:normal;white-space:nowrap;">29</div>
<svg style="position:absolute;left:849px;top:144px;" width="20" height="37" viewBox="0 0 20 37"><path d="M3 2 H17 Q19 2 19 5 V8 Q19 11 15 14 L11 17 H9 L5 14 Q1 11 1 8 V5 Q1 2 3 2 Z" fill="#a8a8a8"/><rect x="8.8" y="4" width="2.6" height="33" fill="#fff"/></svg>
<div style="left:236px;top:180px;width:1077px;height:2px;background:#72B8F8;"></div>
<div style="left:236px;top:185px;width:1077px;height:37px;background:#DEAD3B;"></div>
<div style="left:246px;top:194px;width:34px;height:20px;background:#E3B54A;border:1px solid #C9982F;box-sizing:border-box;border-radius:5px;"></div>
<svg style="position:absolute;left:254px;top:195px;" width="18" height="18" viewBox="0 0 18 18"><path d="M9 15 V6 M5 9 L9 4.5 L13 9 M9 15 Q9 17 12 17" stroke="#F0D48A" stroke-width="1.4" fill="none"/></svg>
<div style="left:287px;top:194px;width:211px;height:20px;background:#E3B54A;border:1px solid #C9982F;box-sizing:border-box;border-radius:5px;"></div>
<div style="left:348px;top:195px;width:1px;height:18px;background:#C9982F;"></div>
<div style="left:431px;top:195px;width:1px;height:18px;background:#C9982F;"></div>
<div class="t" style="left:298px;top:189.5px;height:28px;line-height:28px;font-size:14px;color:#fff;font-weight:normal;white-space:nowrap;">Edit</div>
<svg style="position:absolute;left:330px;top:201px;" width="10" height="7" viewBox="0 0 10 7"><path d="M1.5 1.5 L5 5 L8.5 1.5" stroke="#A59270" stroke-width="1.4" fill="none"/></svg>
<div class="t" style="left:358px;top:189.5px;height:28px;line-height:28px;font-size:14px;color:#fff;font-weight:normal;white-space:nowrap;">Options</div>
<svg style="position:absolute;left:413px;top:201px;" width="10" height="7" viewBox="0 0 10 7"><path d="M1.5 1.5 L5 5 L8.5 1.5" stroke="#A59270" stroke-width="1.4" fill="none"/></svg>
<div class="t" style="left:442px;top:189.5px;height:28px;line-height:28px;font-size:14px;color:#fff;font-weight:normal;white-space:nowrap;">View</div>
<svg style="position:absolute;left:480px;top:201px;" width="10" height="7" viewBox="0 0 10 7"><path d="M1.5 1.5 L5 5 L8.5 1.5" stroke="#A59270" stroke-width="1.4" fill="none"/></svg>
<div class="t" style="left:507px;top:190.0px;height:27.0px;line-height:27.0px;font-size:13.5px;color:#F3DFA8;font-weight:normal;white-space:nowrap;">Sends on Faders:</div>
<div style="left:614px;top:194px;width:149px;height:20px;background:#E3B54A;border:1px solid #C9982F;box-sizing:border-box;border-radius:5px;"></div>
<div style="left:646px;top:195px;width:1px;height:18px;background:#C9982F;"></div>
<svg style="position:absolute;left:621px;top:195px;" width="18" height="18" viewBox="0 0 18 18"><path d="M5.5 6 A5.5 5.5 0 1 0 12.5 6" stroke="#fff" stroke-width="1.4" fill="none"/><line x1="9" y1="3" x2="9" y2="9" stroke="#fff" stroke-width="1.4"/></svg>
<div class="t" style="left:657px;top:189.5px;height:28px;line-height:28px;font-size:14px;color:#fff;font-weight:normal;white-space:nowrap;">Off</div>
<svg style="position:absolute;left:747px;top:195px;" width="12" height="18" viewBox="0 0 12 18"><path d="M3 7 L6 4 L9 7 M3 11 L6 14 L9 11" stroke="#A59270" stroke-width="1.3" fill="none"/></svg>
<div style="left:804px;top:193px;width:170px;height:22px;background:#C99A32;border-radius:6px;"></div>
<div style="left:868px;top:194px;width:63px;height:20px;background:#111;border-radius:5px;"></div>
<div class="t" style="left:803.5px;top:189.5px;width:60px;height:28px;line-height:28px;font-size:14px;color:#F3DFA8;font-weight:normal;text-align:center;">Single</div>
<div class="t" style="left:867.5px;top:189.5px;width:60px;height:28px;line-height:28px;font-size:14px;color:#fff;font-weight:normal;text-align:center;">Tracks</div>
<div class="t" style="left:931.0px;top:189.5px;width:40px;height:28px;line-height:28px;font-size:14px;color:#F3DFA8;font-weight:normal;text-align:center;">All</div>
<div style="left:1197px;top:194px;width:40px;height:20px;background:#E3B54A;border:1px solid #C9982F;box-sizing:border-box;border-radius:5px;"></div>
<svg style="position:absolute;left:1200px;top:195px;" width="18" height="18" viewBox="0 0 18 18"><circle cx="9" cy="9" r="7" fill="none" stroke="#fff" stroke-width="1.4"/><g fill="#fff"><circle cx="6" cy="9" r="1"/><circle cx="9" cy="9" r="1"/><circle cx="12" cy="9" r="1"/></g></svg>
<svg style="position:absolute;left:1222px;top:201px;" width="10" height="7" viewBox="0 0 10 7"><path d="M1.5 1.5 L5 5 L8.5 1.5" stroke="#A59270" stroke-width="1.4" fill="none"/></svg>
<div style="left:1245px;top:193px;width:64px;height:22px;background:#C99A32;border-radius:6px;"></div>
<div style="left:1245px;top:193px;width:31px;height:22px;background:#111;border-radius:6px;"></div>
<svg style="position:absolute;left:1251px;top:196px;" width="20" height="16" viewBox="0 0 20 16"><rect x="2" y="2" width="16" height="12" rx="2" fill="none" stroke="#fff" stroke-width="1.3"/><line x1="7.3" y1="2" x2="7.3" y2="14" stroke="#fff" stroke-width="1.2"/><line x1="12.6" y1="2" x2="12.6" y2="14" stroke="#fff" stroke-width="1.2"/></svg>
<svg style="position:absolute;left:1283px;top:196px;" width="20" height="16" viewBox="0 0 20 16"><rect x="2" y="2" width="16" height="12" rx="2" fill="none" stroke="#fff" stroke-width="1.3"/><line x1="10" y1="2" x2="10" y2="14" stroke="#fff" stroke-width="1.2"/></svg>
<div style="left:236px;top:222px;width:1077px;height:522px;background:#6E436D;"></div>
<div style="left:0px;top:163px;width:234px;height:581px;background:#2A2A2A;"></div>
<div style="left:234px;top:163px;width:2px;height:581px;background:#0a0a0a;"></div>
<div style="left:116px;top:163px;width:1px;height:581px;background:#1c1c1c;"></div>
<div style="left:327px;top:222px;width:1px;height:522px;background:#111;"></div>
<div style="left:328.0px;top:222px;width:66.2px;height:497px;background:#F7C341;"></div>
<div style="left:332.0px;top:222px;width:58px;height:26px;background:#E8B43C;border-radius:0 0 4px 4px;"></div>
<div style="left:328.0px;top:222px;width:66.2px;height:12px;overflow:hidden;">
<div style="left:5px;top:-8px;width:56px;height:15.5px;background:#000;border-radius:4px;"></div>
<div class="t" style="left:0.0px;top:-11.25px;width:66px;height:22px;line-height:22px;font-size:11px;color:#fff;font-weight:normal;text-align:center;-webkit-text-stroke:0.3px #fff;">HoRNet...</div>
</div>
<div style="left:332.0px;top:274px;width:39px;height:17px;background:#E8B43C;border:1px solid #DDAE3C;border-radius:5px;"></div>
<div style="left:374.0px;top:275px;width:16px;height:16px;background:#E8B43C;border:1px solid #DDAE3C;border-radius:50%;"></div>
<div style="left:332.0px;top:294px;width:39px;height:17px;background:#E8B43C;border:1px solid #DDAE3C;border-radius:5px;"></div>
<div style="left:374.0px;top:295px;width:16px;height:16px;background:#E8B43C;border:1px solid #DDAE3C;border-radius:50%;"></div>
<div style="left:332.0px;top:314px;width:39px;height:9px;background:#E8B43C;border:1px solid #DDAE3C;border-radius:5px;"></div>
<div style="left:333.0px;top:332px;width:56.0px;height:16px;background:#F5CA58;border-radius:4px;border:1px solid #C99A30;"></div>
<div class="t" style="left:328.0px;top:328.0px;width:66.0px;height:24px;line-height:24px;font-size:12px;color:#fff;font-weight:normal;text-align:center;-webkit-text-stroke:0.3px #fff;">St Out</div>
<div style="left:333.0px;top:354px;width:56px;height:17px;background:#E8B43C;"></div>
<div style="left:333.0px;top:377px;width:56.0px;height:17px;background:#F5CA58;border-radius:4px;border:1px solid #C99A30;"></div>
<div class="t" style="left:328.0px;top:373.5px;width:66.0px;height:24px;line-height:24px;font-size:12px;color:#58E070;font-weight:normal;text-align:center;-webkit-text-stroke:0.3px #58E070;">Read</div>
<svg style="position:absolute;left:346.5px;top:404.5px;" width="30" height="24" viewBox="0 0 30 24"><rect x="1" y="0" width="28" height="22" rx="3" fill="#3A45D6"/><circle cx="15" cy="11" r="7.8" fill="#F4C042" stroke="#2a2a60" stroke-width="0.6"/><rect x="14.2" y="4" width="1.6" height="5" fill="#3a3020"/></svg>
<div style="left:343.5px;top:439.6px;width:36px;height:36px;background:#2a0a18;border-radius:50%;"></div>
<svg style="position:absolute;left:345.1px;top:439.20000000000005px;" width="32.8" height="34.8" viewBox="0 0 32.8 34.8"><defs><linearGradient id="kg" x1="0" y1="0" x2="0" y2="1"><stop offset="0" stop-color="#444"/><stop offset="1" stop-color="#2a2a2a"/></linearGradient></defs><circle cx="16.4" cy="18.4" r="13.4" fill="url(#kg)" stroke="#0c0c0c" stroke-width="1.4"/><path d="M7.399999999999999 10.399999999999999 A11.9 11.9 0 0 1 25.4 10.399999999999999" stroke="#5a5a5a" stroke-width="0.8" fill="none"/><rect x="15.5" y="7.2" width="2" height="7.2" fill="#fff"/><rect x="16.0" y="2.2" width="1" height="3" fill="#bbb"/></svg>
<div style="left:333.0px;top:481px;width:27.0px;height:17.5px;background:#9C7A2A;border-radius:0px;letter-spacing:-0.7px;"></div>
<div class="t" style="left:328.0px;top:478.25px;width:37.0px;height:23.0px;line-height:23.0px;font-size:11.5px;color:#5BE26F;font-weight:normal;text-align:center;-webkit-text-stroke:0.3px #5BE26F;">-11,4</div>
<div style="left:362.0px;top:481px;width:27.0px;height:17.5px;background:#9C7A2A;border-radius:0px;letter-spacing:-0.7px;"></div>
<div class="t" style="left:357.0px;top:478.25px;width:37.0px;height:23.0px;line-height:23.0px;font-size:11.5px;color:#fff;font-weight:normal;text-align:center;-webkit-text-stroke:0.3px #fff;">0,1</div>
<div class="t n" style="left:327.6px;top:516.4px;width:11px;height:10px;line-height:10px;font-size:8px;color:#FBE2A0;text-align:right;">0</div><div style="left:339.6px;top:520.9px;width:3px;height:1px;background:#FBE2A0;"></div><div class="t n" style="left:327.6px;top:525.5px;width:11px;height:10px;line-height:10px;font-size:8px;color:#FBE2A0;text-align:right;">3</div><div style="left:339.6px;top:530.0px;width:3px;height:1px;background:#FBE2A0;"></div><div class="t n" style="left:327.6px;top:534.4px;width:11px;height:10px;line-height:10px;font-size:8px;color:#FBE2A0;text-align:right;">6</div><div style="left:339.6px;top:538.9px;width:3px;height:1px;background:#FBE2A0;"></div><div class="t n" style="left:327.6px;top:543.3px;width:11px;height:10px;line-height:10px;font-size:8px;color:#FBE2A0;text-align:right;">9</div><div style="left:339.6px;top:547.8px;width:3px;height:1px;background:#FBE2A0;"></div><div class="t n" style="left:327.6px;top:552.0px;width:11px;height:10px;line-height:10px;font-size:8px;color:#FBE2A0;text-align:right;">12</div><div style="left:339.6px;top:556.5px;width:3px;height:1px;background:#FBE2A0;"></div><div class="t n" style="left:327.6px;top:560.9px;width:11px;height:10px;line-height:10px;font-size:8px;color:#FBE2A0;text-align:right;">15</div><div style="left:339.6px;top:565.4px;width:3px;height:1px;background:#FBE2A0;"></div><div class="t n" style="left:327.6px;top:569.8px;width:11px;height:10px;line-height:10px;font-size:8px;color:#FBE2A0;text-align:right;">18</div><div style="left:339.6px;top:574.3px;width:3px;height:1px;background:#FBE2A0;"></div><div class="t n" style="left:327.6px;top:578.6px;width:11px;height:10px;line-height:10px;font-size:8px;color:#FBE2A0;text-align:right;">21</div><div style="left:339.6px;top:583.1px;width:3px;height:1px;background:#FBE2A0;"></div><div class="t n" style="left:327.6px;top:587.5px;width:11px;height:10px;line-height:10px;font-size:8px;color:#FBE2A0;text-align:right;">24</div><div style="left:339.6px;top:592.0px;width:3px;height:1px;background:#FBE2A0;"></div><div class="t n" style="left:327.6px;top:599.6px;width:11px;height:10px;line-height:10px;font-size:8px;color:#FBE2A0;text-align:right;">30</div><div style="left:339.6px;top:604.1px;width:3px;height:1px;background:#FBE2A0;"></div><div class="t n" style="left:327.6px;top:610.0px;width:11px;height:10px;line-height:10px;font-size:8px;color:#FBE2A0;text-align:right;">35</div><div style="left:339.6px;top:614.5px;width:3px;height:1px;background:#FBE2A0;"></div><div class="t n" style="left:327.6px;top:619.6px;width:11px;height:10px;line-height:10px;font-size:8px;color:#FBE2A0;text-align:right;">40</div><div style="left:339.6px;top:624.1px;width:3px;height:1px;background:#FBE2A0;"></div><div class="t n" style="left:327.6px;top:629.4px;width:11px;height:10px;line-height:10px;font-size:8px;color:#FBE2A0;text-align:right;">45</div><div style="left:339.6px;top:633.9px;width:3px;height:1px;background:#FBE2A0;"></div><div class="t n" style="left:327.6px;top:639.0px;width:11px;height:10px;line-height:10px;font-size:8px;color:#FBE2A0;text-align:right;">50</div><div style="left:339.6px;top:643.5px;width:3px;height:1px;background:#FBE2A0;"></div><div class="t n" style="left:327.6px;top:650.1px;width:11px;height:10px;line-height:10px;font-size:8px;color:#FBE2A0;text-align:right;">60</div><div style="left:339.6px;top:654.6px;width:3px;height:1px;background:#FBE2A0;"></div>
<div style="left:341.6px;top:521px;width:1px;height:134.5px;border-left:1px dotted #FBE2A0;opacity:0.8;"></div>
<div style="left:343.6px;top:519px;width:11.5px;height:138.5px;background:#9C7A2A;border-radius:2px;"></div>
<div style="left:345.6px;top:576px;width:3px;height:80.5px;background:linear-gradient(#4fd15f,#a8d8a8 70%,#d0e0d0);"></div>
<div style="left:350.1px;top:576px;width:3px;height:80.5px;background:linear-gradient(#4fd15f,#a8d8a8 70%,#d0e0d0);"></div>
<div style="left:345.6px;top:567px;width:3px;height:1.5px;background:#4fd15f;"></div>
<div style="left:350.1px;top:567px;width:3px;height:1.5px;background:#4fd15f;"></div>
<div style="left:363.0px;top:520.65px;width:11px;height:1.5px;background:#F8D888;"></div><div style="left:363.0px;top:538.65px;width:11px;height:1.5px;background:#F8D888;"></div><div style="left:363.0px;top:556.05px;width:11px;height:1.5px;background:#b0b0b0;"></div><div style="left:363.0px;top:573.05px;width:11px;height:1.5px;background:#F8D888;"></div><div style="left:363.0px;top:589.95px;width:11px;height:1.5px;background:#F8D888;"></div><div style="left:363.0px;top:601.65px;width:11px;height:1.5px;background:#F8D888;"></div><div style="left:363.0px;top:615.55px;width:11px;height:1.5px;background:#F8D888;"></div><div style="left:363.0px;top:626.75px;width:11px;height:1.5px;background:#F8D888;"></div><div style="left:363.0px;top:638.15px;width:11px;height:1.5px;background:#F8D888;"></div><div style="left:363.0px;top:643.65px;width:11px;height:1.5px;background:#F8D888;"></div><div style="left:363.0px;top:654.35px;width:11px;height:1.5px;background:#F8D888;"></div><div style="left:370.0px;top:526.75px;width:4px;height:1.5px;background:#F8D888;"></div><div style="left:370.0px;top:532.25px;width:4px;height:1.5px;background:#F8D888;"></div><div style="left:370.0px;top:544.25px;width:4px;height:1.5px;background:#F8D888;"></div><div style="left:370.0px;top:549.75px;width:4px;height:1.5px;background:#F8D888;"></div><div style="left:370.0px;top:561.25px;width:4px;height:1.5px;background:#F8D888;"></div><div style="left:370.0px;top:566.75px;width:4px;height:1.5px;background:#F8D888;"></div><div style="left:370.0px;top:578.75px;width:4px;height:1.5px;background:#F8D888;"></div><div style="left:370.0px;top:584.25px;width:4px;height:1.5px;background:#F8D888;"></div><div style="left:370.0px;top:593.0500000000001px;width:4px;height:1.5px;background:#F8D888;"></div><div style="left:370.0px;top:596.25px;width:4px;height:1.5px;background:#F8D888;"></div><div style="left:370.0px;top:599.45px;width:4px;height:1.5px;background:#F8D888;"></div><div style="left:370.0px;top:605.85px;width:4px;height:1.5px;background:#F8D888;"></div><div style="left:370.0px;top:609.0500000000001px;width:4px;height:1.5px;background:#F8D888;"></div><div style="left:370.0px;top:612.25px;width:4px;height:1.5px;background:#F8D888;"></div><div style="left:370.0px;top:618.65px;width:4px;height:1.5px;background:#F8D888;"></div><div style="left:370.0px;top:621.85px;width:4px;height:1.5px;background:#F8D888;"></div><div style="left:370.0px;top:625.0500000000001px;width:4px;height:1.5px;background:#F8D888;"></div><div style="left:370.0px;top:628.25px;width:4px;height:1.5px;background:#F8D888;"></div><div style="left:370.0px;top:631.45px;width:4px;height:1.5px;background:#F8D888;"></div><div style="left:370.0px;top:634.65px;width:4px;height:1.5px;background:#F8D888;"></div><div style="left:370.0px;top:641.0500000000001px;width:4px;height:1.5px;background:#F8D888;"></div><div style="left:370.0px;top:647.45px;width:4px;height:1.5px;background:#F8D888;"></div><div style="left:370.0px;top:650.65px;width:4px;height:1.5px;background:#F8D888;"></div>
<div style="left:374.0px;top:519px;width:2px;height:138px;background:#9C7A2A;"></div>
<div style="left:367.0px;top:538.7px;width:18px;height:35.5px;background:linear-gradient(90deg,#9cbcf4,#c8dcff 40%,#b4cdfa);border:1px solid #6f9cf0;border-radius:3px;box-shadow:0 1px 2px rgba(0,0,0,.6);"></div>
<div style="left:368.0px;top:555.5px;width:16px;height:2.4px;background:#0a0a0a;"></div>
<div style="left:333.0px;top:683px;width:26.0px;height:17px;background:#F5CA58;border-radius:4px;border:1px solid #C99A30;"></div>
<div class="t" style="left:328.0px;top:679.5px;width:36.0px;height:24px;line-height:24px;font-size:12px;color:#fff;font-weight:normal;text-align:center;-webkit-text-stroke:0.3px #fff;">M</div>
<div style="left:363.0px;top:683px;width:26.0px;height:17px;background:#F5CA58;border-radius:4px;border:1px solid #C99A30;"></div>
<div class="t" style="left:358.0px;top:679.5px;width:36.0px;height:24px;line-height:24px;font-size:12px;color:#fff;font-weight:normal;text-align:center;-webkit-text-stroke:0.3px #fff;">S</div>
<div style="left:328.0px;top:719px;width:66.2px;height:24px;background:#3C39A8;"></div>
<div style="left:393.2px;top:719px;width:1px;height:24px;background:#222;"></div>
<div class="t" style="left:325.0px;top:719.4px;width:72.2px;height:23.2px;line-height:23.2px;font-size:11.6px;color:#fff;font-weight:normal;text-align:center;-webkit-text-stroke:0.35px #fff;">Vam...ems)</div>
<div style="left:394.9px;top:222px;width:66.9px;height:497px;background:#2A2A2A;"></div>
<div style="left:398.9px;top:222px;width:58px;height:26px;background:#232323;border-radius:0 0 4px 4px;"></div>
<div style="left:398.9px;top:274px;width:39px;height:17px;background:#232323;border:1px solid #2a2a2a;border-radius:5px;"></div>
<div style="left:440.9px;top:275px;width:16px;height:16px;background:#232323;border:1px solid #2a2a2a;border-radius:50%;"></div>
<div style="left:398.9px;top:294px;width:39px;height:17px;background:#232323;border:1px solid #2a2a2a;border-radius:5px;"></div>
<div style="left:440.9px;top:295px;width:16px;height:16px;background:#232323;border:1px solid #2a2a2a;border-radius:50%;"></div>
<div style="left:398.9px;top:314px;width:39px;height:9px;background:#232323;border:1px solid #2a2a2a;border-radius:5px;"></div>
<div style="left:399.9px;top:332px;width:56.0px;height:15px;background:#3A3A3A;border-radius:4px;"></div>
<div class="t" style="left:394.9px;top:327.5px;width:66.0px;height:24px;line-height:24px;font-size:12px;color:#fff;font-weight:normal;text-align:center;-webkit-text-stroke:0.3px #fff;">Bus 1</div>
<div style="left:399.9px;top:354px;width:56px;height:17px;background:#242424;"></div>
<div style="left:399.9px;top:377px;width:56.0px;height:17px;background:#3A3A3A;border-radius:4px;"></div>
<div class="t" style="left:394.9px;top:373.5px;width:66.0px;height:24px;line-height:24px;font-size:12px;color:#5BE26F;font-weight:normal;text-align:center;-webkit-text-stroke:0.3px #5BE26F;">Read</div>
<svg style="position:absolute;left:416.4px;top:403.5px;" width="24" height="24" viewBox="0 0 24 24"><circle cx="18.8" cy="5.2" r="4.7" fill="#1DC4C8"/><path d="M13.4 6 L19 11.6 L15 14 L4.6 23 L1.4 23.2 L1.2 20.2 L11 9.8 Z" fill="#1DC4C8"/><line x1="14.2" y1="3.6" x2="21" y2="10.4" stroke="#282828" stroke-width="1.1"/><line x1="4.5" y1="20" x2="12.5" y2="12" stroke="#282828" stroke-width="0.9"/><line x1="12.3" y1="15" x2="12.6" y2="23.5" stroke="#1DC4C8" stroke-width="2"/></svg>
<svg style="position:absolute;left:412.0px;top:439.20000000000005px;" width="32.8" height="34.8" viewBox="0 0 32.8 34.8"><defs><linearGradient id="kg" x1="0" y1="0" x2="0" y2="1"><stop offset="0" stop-color="#444"/><stop offset="1" stop-color="#2a2a2a"/></linearGradient></defs><circle cx="16.4" cy="18.4" r="13.4" fill="url(#kg)" stroke="#0c0c0c" stroke-width="1.4"/><path d="M7.399999999999999 10.399999999999999 A11.9 11.9 0 0 1 25.4 10.399999999999999" stroke="#5a5a5a" stroke-width="0.8" fill="none"/><rect x="15.5" y="7.2" width="2" height="7.2" fill="#fff"/><rect x="16.0" y="2.2" width="1" height="3" fill="#bbb"/></svg>
<div style="left:399.9px;top:481px;width:27.0px;height:17.5px;background:#1c1c1c;border-radius:0px;letter-spacing:-0.7px;"></div>
<div class="t" style="left:394.9px;top:478.25px;width:37.0px;height:23.0px;line-height:23.0px;font-size:11.5px;color:#5BE26F;font-weight:normal;text-align:center;-webkit-text-stroke:0.3px #5BE26F;">-16,1</div>
<div style="left:428.9px;top:481px;width:27.0px;height:17.5px;background:#1c1c1c;border-radius:0px;letter-spacing:-0.7px;"></div>
<div class="t" style="left:423.9px;top:478.25px;width:37.0px;height:23.0px;line-height:23.0px;font-size:11.5px;color:#fff;font-weight:normal;text-align:center;-webkit-text-stroke:0.3px #fff;">-0,6</div>
<div class="t n" style="left:394.5px;top:516.4px;width:11px;height:10px;line-height:10px;font-size:8px;color:#8a8a8a;text-align:right;">0</div><div style="left:406.5px;top:520.9px;width:3px;height:1px;background:#8a8a8a;"></div><div class="t n" style="left:394.5px;top:525.5px;width:11px;height:10px;line-height:10px;font-size:8px;color:#8a8a8a;text-align:right;">3</div><div style="left:406.5px;top:530.0px;width:3px;height:1px;background:#8a8a8a;"></div><div class="t n" style="left:394.5px;top:534.4px;width:11px;height:10px;line-height:10px;font-size:8px;color:#8a8a8a;text-align:right;">6</div><div style="left:406.5px;top:538.9px;width:3px;height:1px;background:#8a8a8a;"></div><div class="t n" style="left:394.5px;top:543.3px;width:11px;height:10px;line-height:10px;font-size:8px;color:#8a8a8a;text-align:right;">9</div><div style="left:406.5px;top:547.8px;width:3px;height:1px;background:#8a8a8a;"></div><div class="t n" style="left:394.5px;top:552.0px;width:11px;height:10px;line-height:10px;font-size:8px;color:#8a8a8a;text-align:right;">12</div><div style="left:406.5px;top:556.5px;width:3px;height:1px;background:#8a8a8a;"></div><div class="t n" style="left:394.5px;top:560.9px;width:11px;height:10px;line-height:10px;font-size:8px;color:#8a8a8a;text-align:right;">15</div><div style="left:406.5px;top:565.4px;width:3px;height:1px;background:#8a8a8a;"></div><div class="t n" style="left:394.5px;top:569.8px;width:11px;height:10px;line-height:10px;font-size:8px;color:#8a8a8a;text-align:right;">18</div><div style="left:406.5px;top:574.3px;width:3px;height:1px;background:#8a8a8a;"></div><div class="t n" style="left:394.5px;top:578.6px;width:11px;height:10px;line-height:10px;font-size:8px;color:#8a8a8a;text-align:right;">21</div><div style="left:406.5px;top:583.1px;width:3px;height:1px;background:#8a8a8a;"></div><div class="t n" style="left:394.5px;top:587.5px;width:11px;height:10px;line-height:10px;font-size:8px;color:#8a8a8a;text-align:right;">24</div><div style="left:406.5px;top:592.0px;width:3px;height:1px;background:#8a8a8a;"></div><div class="t n" style="left:394.5px;top:599.6px;width:11px;height:10px;line-height:10px;font-size:8px;color:#8a8a8a;text-align:right;">30</div><div style="left:406.5px;top:604.1px;width:3px;height:1px;background:#8a8a8a;"></div><div class="t n" style="left:394.5px;top:610.0px;width:11px;height:10px;line-height:10px;font-size:8px;color:#8a8a8a;text-align:right;">35</div><div style="left:406.5px;top:614.5px;width:3px;height:1px;background:#8a8a8a;"></div><div class="t n" style="left:394.5px;top:619.6px;width:11px;height:10px;line-height:10px;font-size:8px;color:#8a8a8a;text-align:right;">40</div><div style="left:406.5px;top:624.1px;width:3px;height:1px;background:#8a8a8a;"></div><div class="t n" style="left:394.5px;top:629.4px;width:11px;height:10px;line-height:10px;font-size:8px;color:#8a8a8a;text-align:right;">45</div><div style="left:406.5px;top:633.9px;width:3px;height:1px;background:#8a8a8a;"></div><div class="t n" style="left:394.5px;top:639.0px;width:11px;height:10px;line-height:10px;font-size:8px;color:#8a8a8a;text-align:right;">50</div><div style="left:406.5px;top:643.5px;width:3px;height:1px;background:#8a8a8a;"></div><div class="t n" style="left:394.5px;top:650.1px;width:11px;height:10px;line-height:10px;font-size:8px;color:#8a8a8a;text-align:right;">60</div><div style="left:406.5px;top:654.6px;width:3px;height:1px;background:#8a8a8a;"></div>
<div style="left:408.5px;top:521px;width:1px;height:134.5px;border-left:1px dotted #8a8a8a;opacity:0.8;"></div>
<div style="left:410.5px;top:519px;width:11.5px;height:138.5px;background:#1c1c1c;border-radius:2px;"></div>
<div style="left:429.9px;top:520.65px;width:11px;height:1.5px;background:#6a6a6a;"></div><div style="left:429.9px;top:538.65px;width:11px;height:1.5px;background:#6a6a6a;"></div><div style="left:429.9px;top:556.05px;width:11px;height:1.5px;background:#b0b0b0;"></div><div style="left:429.9px;top:573.05px;width:11px;height:1.5px;background:#6a6a6a;"></div><div style="left:429.9px;top:589.95px;width:11px;height:1.5px;background:#6a6a6a;"></div><div style="left:429.9px;top:601.65px;width:11px;height:1.5px;background:#6a6a6a;"></div><div style="left:429.9px;top:615.55px;width:11px;height:1.5px;background:#6a6a6a;"></div><div style="left:429.9px;top:626.75px;width:11px;height:1.5px;background:#6a6a6a;"></div><div style="left:429.9px;top:638.15px;width:11px;height:1.5px;background:#6a6a6a;"></div><div style="left:429.9px;top:643.65px;width:11px;height:1.5px;background:#6a6a6a;"></div><div style="left:429.9px;top:654.35px;width:11px;height:1.5px;background:#6a6a6a;"></div><div style="left:436.9px;top:526.75px;width:4px;height:1.5px;background:#6a6a6a;"></div><div style="left:436.9px;top:532.25px;width:4px;height:1.5px;background:#6a6a6a;"></div><div style="left:436.9px;top:544.25px;width:4px;height:1.5px;background:#6a6a6a;"></div><div style="left:436.9px;top:549.75px;width:4px;height:1.5px;background:#6a6a6a;"></div><div style="left:436.9px;top:561.25px;width:4px;height:1.5px;background:#6a6a6a;"></div><div style="left:436.9px;top:566.75px;width:4px;height:1.5px;background:#6a6a6a;"></div><div style="left:436.9px;top:578.75px;width:4px;height:1.5px;background:#6a6a6a;"></div><div style="left:436.9px;top:584.25px;width:4px;height:1.5px;background:#6a6a6a;"></div><div style="left:436.9px;top:593.0500000000001px;width:4px;height:1.5px;background:#6a6a6a;"></div><div style="left:436.9px;top:596.25px;width:4px;height:1.5px;background:#6a6a6a;"></div><div style="left:436.9px;top:599.45px;width:4px;height:1.5px;background:#6a6a6a;"></div><div style="left:436.9px;top:605.85px;width:4px;height:1.5px;background:#6a6a6a;"></div><div style="left:436.9px;top:609.0500000000001px;width:4px;height:1.5px;background:#6a6a6a;"></div><div style="left:436.9px;top:612.25px;width:4px;height:1.5px;background:#6a6a6a;"></div><div style="left:436.9px;top:618.65px;width:4px;height:1.5px;background:#6a6a6a;"></div><div style="left:436.9px;top:621.85px;width:4px;height:1.5px;background:#6a6a6a;"></div><div style="left:436.9px;top:625.0500000000001px;width:4px;height:1.5px;background:#6a6a6a;"></div><div style="left:436.9px;top:628.25px;width:4px;height:1.5px;background:#6a6a6a;"></div><div style="left:436.9px;top:631.45px;width:4px;height:1.5px;background:#6a6a6a;"></div><div style="left:436.9px;top:634.65px;width:4px;height:1.5px;background:#6a6a6a;"></div><div style="left:436.9px;top:641.0500000000001px;width:4px;height:1.5px;background:#6a6a6a;"></div><div style="left:436.9px;top:647.45px;width:4px;height:1.5px;background:#6a6a6a;"></div><div style="left:436.9px;top:650.65px;width:4px;height:1.5px;background:#6a6a6a;"></div>
<div style="left:440.9px;top:519px;width:2px;height:138px;background:#141414;"></div>
<div style="left:433.9px;top:542.3px;width:18px;height:35.5px;background:linear-gradient(90deg,#9cbcf4,#c8dcff 40%,#b4cdfa);border:1px solid #6f9cf0;border-radius:3px;box-shadow:0 1px 2px rgba(0,0,0,.6);"></div>
<div style="left:434.9px;top:559.0999999999999px;width:16px;height:2.4px;background:#0a0a0a;"></div>
<div style="left:399.9px;top:663px;width:26px;height:16px;background:#3A3A3A;border-radius:4px;"></div>
<div style="left:412.9px;top:665px;width:1px;height:12px;background:#2a2a2a;"></div>
<div class="t" style="left:400.4px;top:659px;width:12px;height:24px;line-height:24px;font-size:12px;color:#fff;font-weight:normal;text-align:center;">R</div>
<div class="t" style="left:413.4px;top:659px;width:12px;height:24px;line-height:24px;font-size:12px;color:#fff;font-weight:normal;text-align:center;">I</div>
<div style="left:399.9px;top:683px;width:26.0px;height:16px;background:#3A3A3A;border-radius:4px;"></div>
<div class="t" style="left:394.9px;top:679.0px;width:36.0px;height:24px;line-height:24px;font-size:12px;color:#fff;font-weight:normal;text-align:center;-webkit-text-stroke:0.3px #fff;">M</div>
<div style="left:429.9px;top:683px;width:26.0px;height:16px;background:#3A3A3A;border-radius:4px;"></div>
<div class="t" style="left:424.9px;top:679.0px;width:36.0px;height:24px;line-height:24px;font-size:12px;color:#fff;font-weight:normal;text-align:center;-webkit-text-stroke:0.3px #fff;">S</div>
<div style="left:394.9px;top:719px;width:66.9px;height:24px;background:#1A9696;"></div>
<div style="left:460.79999999999995px;top:719px;width:1px;height:24px;background:#222;"></div>
<div class="t" style="left:391.9px;top:719.4px;width:72.9px;height:23.2px;line-height:23.2px;font-size:11.6px;color:#fff;font-weight:normal;text-align:center;-webkit-text-stroke:0.35px #fff;">Vam...cals)</div>
<div style="left:461.8px;top:222px;width:66.9px;height:497px;background:#2A2A2A;"></div>
<div style="left:461.3px;top:222px;width:1px;height:497px;background:#363636;"></div>
<div style="left:465.8px;top:222px;width:58px;height:26px;background:#232323;border-radius:0 0 4px 4px;"></div>
<div style="left:465.8px;top:274px;width:39px;height:17px;background:#232323;border:1px solid #2a2a2a;border-radius:5px;"></div>
<div style="left:507.8px;top:275px;width:16px;height:16px;background:#232323;border:1px solid #2a2a2a;border-radius:50%;"></div>
<div style="left:465.8px;top:294px;width:39px;height:17px;background:#232323;border:1px solid #2a2a2a;border-radius:5px;"></div>
<div style="left:507.8px;top:295px;width:16px;height:16px;background:#232323;border:1px solid #2a2a2a;border-radius:50%;"></div>
<div style="left:465.8px;top:314px;width:39px;height:9px;background:#232323;border:1px solid #2a2a2a;border-radius:5px;"></div>
<div style="left:466.8px;top:332px;width:55.99999999999994px;height:15px;background:#3A3A3A;border-radius:4px;"></div>
<div class="t" style="left:461.79999999999995px;top:327.5px;width:65.99999999999994px;height:24px;line-height:24px;font-size:12px;color:#fff;font-weight:normal;text-align:center;-webkit-text-stroke:0.3px #fff;">Bus 1</div>
<div style="left:466.8px;top:354px;width:56px;height:17px;background:#242424;"></div>
<div style="left:466.8px;top:377px;width:55.99999999999994px;height:17px;background:#3A3A3A;border-radius:4px;"></div>
<div class="t" style="left:461.79999999999995px;top:373.5px;width:65.99999999999994px;height:24px;line-height:24px;font-size:12px;color:#5BE26F;font-weight:normal;text-align:center;-webkit-text-stroke:0.3px #5BE26F;">Read</div>
<svg style="position:absolute;left:481.3px;top:401.5px;" width="28" height="27.5" viewBox="0 0 28 27.5"><g fill="#2FB8EE"><path d="M6 3.6 Q13.5 2.2 21 3.6 V5 Q13.5 3.8 6 5 Z"/><circle cx="13.5" cy="2.8" r="1.2"/><rect x="8" y="7.5" width="6.5" height="5"/><rect x="16" y="7.5" width="6.5" height="5"/><rect x="0" y="12" width="8.5" height="9"/><rect x="21.5" y="14" width="5.5" height="5.5"/></g><g stroke="#2FB8EE" stroke-width="1.3" fill="none"><line x1="10.5" y1="4" x2="10.5" y2="26"/><line x1="24" y1="6" x2="24" y2="26"/><line x1="21.5" y1="9" x2="27.5" y2="9"/><line x1="4.5" y1="8" x2="8.5" y2="5.5"/><path d="M7 27 L10.5 24 L14 27 M20.5 27 L24 24 L27.5 27"/></g><circle cx="15" cy="20" r="7" fill="#282828" stroke="#2FB8EE" stroke-width="1.3"/><circle cx="15" cy="20" r="5.6" fill="none" stroke="#2FB8EE" stroke-width="0.7"/></svg>
<svg style="position:absolute;left:478.90000000000003px;top:439.20000000000005px;" width="32.8" height="34.8" viewBox="0 0 32.8 34.8"><defs><linearGradient id="kg" x1="0" y1="0" x2="0" y2="1"><stop offset="0" stop-color="#444"/><stop offset="1" stop-color="#2a2a2a"/></linearGradient></defs><circle cx="16.4" cy="18.4" r="13.4" fill="url(#kg)" stroke="#0c0c0c" stroke-width="1.4"/><path d="M7.399999999999999 10.399999999999999 A11.9 11.9 0 0 1 25.4 10.399999999999999" stroke="#5a5a5a" stroke-width="0.8" fill="none"/><rect x="15.5" y="7.2" width="2" height="7.2" fill="#fff"/><rect x="16.0" y="2.2" width="1" height="3" fill="#bbb"/></svg>
<div style="left:466.8px;top:481px;width:27.0px;height:17.5px;background:#1c1c1c;border-radius:0px;letter-spacing:-0.7px;"></div>
<div class="t" style="left:461.8px;top:478.25px;width:37.0px;height:23.0px;line-height:23.0px;font-size:11.5px;color:#5BE26F;font-weight:normal;text-align:center;-webkit-text-stroke:0.3px #5BE26F;">-14,8</div>
<div style="left:495.8px;top:481px;width:26.999999999999943px;height:17.5px;background:#1c1c1c;border-radius:0px;letter-spacing:-0.7px;"></div>
<div class="t" style="left:490.79999999999995px;top:478.25px;width:36.99999999999994px;height:23.0px;line-height:23.0px;font-size:11.5px;color:#fff;font-weight:normal;text-align:center;-webkit-text-stroke:0.3px #fff;">0,0</div>
<div class="t n" style="left:461.40000000000003px;top:516.4px;width:11px;height:10px;line-height:10px;font-size:8px;color:#8a8a8a;text-align:right;">0</div><div style="left:473.40000000000003px;top:520.9px;width:3px;height:1px;background:#8a8a8a;"></div><div class="t n" style="left:461.40000000000003px;top:525.5px;width:11px;height:10px;line-height:10px;font-size:8px;color:#8a8a8a;text-align:right;">3</div><div style="left:473.40000000000003px;top:530.0px;width:3px;height:1px;background:#8a8a8a;"></div><div class="t n" style="left:461.40000000000003px;top:534.4px;width:11px;height:10px;line-height:10px;font-size:8px;color:#8a8a8a;text-align:right;">6</div><div style="left:473.40000000000003px;top:538.9px;width:3px;height:1px;background:#8a8a8a;"></div><div class="t n" style="left:461.40000000000003px;top:543.3px;width:11px;height:10px;line-height:10px;font-size:8px;color:#8a8a8a;text-align:right;">9</div><div style="left:473.40000000000003px;top:547.8px;width:3px;height:1px;background:#8a8a8a;"></div><div class="t n" style="left:461.40000000000003px;top:552.0px;width:11px;height:10px;line-height:10px;font-size:8px;color:#8a8a8a;text-align:right;">12</div><div style="left:473.40000000000003px;top:556.5px;width:3px;height:1px;background:#8a8a8a;"></div><div class="t n" style="left:461.40000000000003px;top:560.9px;width:11px;height:10px;line-height:10px;font-size:8px;color:#8a8a8a;text-align:right;">15</div><div style="left:473.40000000000003px;top:565.4px;width:3px;height:1px;background:#8a8a8a;"></div><div class="t n" style="left:461.40000000000003px;top:569.8px;width:11px;height:10px;line-height:10px;font-size:8px;color:#8a8a8a;text-align:right;">18</div><div style="left:473.40000000000003px;top:574.3px;width:3px;height:1px;background:#8a8a8a;"></div><div class="t n" style="left:461.40000000000003px;top:578.6px;width:11px;height:10px;line-height:10px;font-size:8px;color:#8a8a8a;text-align:right;">21</div><div style="left:473.40000000000003px;top:583.1px;width:3px;height:1px;background:#8a8a8a;"></div><div class="t n" style="left:461.40000000000003px;top:587.5px;width:11px;height:10px;line-height:10px;font-size:8px;color:#8a8a8a;text-align:right;">24</div><div style="left:473.40000000000003px;top:592.0px;width:3px;height:1px;background:#8a8a8a;"></div><div class="t n" style="left:461.40000000000003px;top:599.6px;width:11px;height:10px;line-height:10px;font-size:8px;color:#8a8a8a;text-align:right;">30</div><div style="left:473.40000000000003px;top:604.1px;width:3px;height:1px;background:#8a8a8a;"></div><div class="t n" style="left:461.40000000000003px;top:610.0px;width:11px;height:10px;line-height:10px;font-size:8px;color:#8a8a8a;text-align:right;">35</div><div style="left:473.40000000000003px;top:614.5px;width:3px;height:1px;background:#8a8a8a;"></div><div class="t n" style="left:461.40000000000003px;top:619.6px;width:11px;height:10px;line-height:10px;font-size:8px;color:#8a8a8a;text-align:right;">40</div><div style="left:473.40000000000003px;top:624.1px;width:3px;height:1px;background:#8a8a8a;"></div><div class="t n" style="left:461.40000000000003px;top:629.4px;width:11px;height:10px;line-height:10px;font-size:8px;color:#8a8a8a;text-align:right;">45</div><div style="left:473.40000000000003px;top:633.9px;width:3px;height:1px;background:#8a8a8a;"></div><div class="t n" style="left:461.40000000000003px;top:639.0px;width:11px;height:10px;line-height:10px;font-size:8px;color:#8a8a8a;text-align:right;">50</div><div style="left:473.40000000000003px;top:643.5px;width:3px;height:1px;background:#8a8a8a;"></div><div class="t n" style="left:461.40000000000003px;top:650.1px;width:11px;height:10px;line-height:10px;font-size:8px;color:#8a8a8a;text-align:right;">60</div><div style="left:473.40000000000003px;top:654.6px;width:3px;height:1px;background:#8a8a8a;"></div>
<div style="left:475.40000000000003px;top:521px;width:1px;height:134.5px;border-left:1px dotted #8a8a8a;opacity:0.8;"></div>
<div style="left:477.40000000000003px;top:519px;width:11.5px;height:138.5px;background:#1c1c1c;border-radius:2px;"></div>
<div style="left:479.40000000000003px;top:577px;width:3px;height:79.5px;background:linear-gradient(#4fd15f,#a8d8a8 70%,#d0e0d0);"></div>
<div style="left:483.90000000000003px;top:577px;width:3px;height:79.5px;background:linear-gradient(#4fd15f,#a8d8a8 70%,#d0e0d0);"></div>
<div style="left:479.40000000000003px;top:568px;width:3px;height:1.5px;background:#4fd15f;"></div>
<div style="left:483.90000000000003px;top:568px;width:3px;height:1.5px;background:#4fd15f;"></div>
<div style="left:496.8px;top:520.65px;width:11px;height:1.5px;background:#6a6a6a;"></div><div style="left:496.8px;top:538.65px;width:11px;height:1.5px;background:#6a6a6a;"></div><div style="left:496.8px;top:556.05px;width:11px;height:1.5px;background:#b0b0b0;"></div><div style="left:496.8px;top:573.05px;width:11px;height:1.5px;background:#6a6a6a;"></div><div style="left:496.8px;top:589.95px;width:11px;height:1.5px;background:#6a6a6a;"></div><div style="left:496.8px;top:601.65px;width:11px;height:1.5px;background:#6a6a6a;"></div><div style="left:496.8px;top:615.55px;width:11px;height:1.5px;background:#6a6a6a;"></div><div style="left:496.8px;top:626.75px;width:11px;height:1.5px;background:#6a6a6a;"></div><div style="left:496.8px;top:638.15px;width:11px;height:1.5px;background:#6a6a6a;"></div><div style="left:496.8px;top:643.65px;width:11px;height:1.5px;background:#6a6a6a;"></div><div style="left:496.8px;top:654.35px;width:11px;height:1.5px;background:#6a6a6a;"></div><div style="left:503.8px;top:526.75px;width:4px;height:1.5px;background:#6a6a6a;"></div><div style="left:503.8px;top:532.25px;width:4px;height:1.5px;background:#6a6a6a;"></div><div style="left:503.8px;top:544.25px;width:4px;height:1.5px;background:#6a6a6a;"></div><div style="left:503.8px;top:549.75px;width:4px;height:1.5px;background:#6a6a6a;"></div><div style="left:503.8px;top:561.25px;width:4px;height:1.5px;background:#6a6a6a;"></div><div style="left:503.8px;top:566.75px;width:4px;height:1.5px;background:#6a6a6a;"></div><div style="left:503.8px;top:578.75px;width:4px;height:1.5px;background:#6a6a6a;"></div><div style="left:503.8px;top:584.25px;width:4px;height:1.5px;background:#6a6a6a;"></div><div style="left:503.8px;top:593.0500000000001px;width:4px;height:1.5px;background:#6a6a6a;"></div><div style="left:503.8px;top:596.25px;width:4px;height:1.5px;background:#6a6a6a;"></div><div style="left:503.8px;top:599.45px;width:4px;height:1.5px;background:#6a6a6a;"></div><div style="left:503.8px;top:605.85px;width:4px;height:1.5px;background:#6a6a6a;"></div><div style="left:503.8px;top:609.0500000000001px;width:4px;height:1.5px;background:#6a6a6a;"></div><div style="left:503.8px;top:612.25px;width:4px;height:1.5px;background:#6a6a6a;"></div><div style="left:503.8px;top:618.65px;width:4px;height:1.5px;background:#6a6a6a;"></div><div style="left:503.8px;top:621.85px;width:4px;height:1.5px;background:#6a6a6a;"></div><div style="left:503.8px;top:625.0500000000001px;width:4px;height:1.5px;background:#6a6a6a;"></div><div style="left:503.8px;top:628.25px;width:4px;height:1.5px;background:#6a6a6a;"></div><div style="left:503.8px;top:631.45px;width:4px;height:1.5px;background:#6a6a6a;"></div><div style="left:503.8px;top:634.65px;width:4px;height:1.5px;background:#6a6a6a;"></div><div style="left:503.8px;top:641.0500000000001px;width:4px;height:1.5px;background:#6a6a6a;"></div><div style="left:503.8px;top:647.45px;width:4px;height:1.5px;background:#6a6a6a;"></div><div style="left:503.8px;top:650.65px;width:4px;height:1.5px;background:#6a6a6a;"></div>
<div style="left:507.8px;top:519px;width:2px;height:138px;background:#141414;"></div>
<div style="left:500.8px;top:538.7px;width:18px;height:35.5px;background:linear-gradient(90deg,#9cbcf4,#c8dcff 40%,#b4cdfa);border:1px solid #6f9cf0;border-radius:3px;box-shadow:0 1px 2px rgba(0,0,0,.6);"></div>
<div style="left:501.8px;top:555.5px;width:16px;height:2.4px;background:#0a0a0a;"></div>
<div style="left:466.8px;top:663px;width:26px;height:16px;background:#3A3A3A;border-radius:4px;"></div>
<div style="left:479.8px;top:665px;width:1px;height:12px;background:#2a2a2a;"></div>
<div class="t" style="left:467.3px;top:659px;width:12px;height:24px;line-height:24px;font-size:12px;color:#fff;font-weight:normal;text-align:center;">R</div>
<div class="t" style="left:480.3px;top:659px;width:12px;height:24px;line-height:24px;font-size:12px;color:#fff;font-weight:normal;text-align:center;">I</div>
<div style="left:466.8px;top:683px;width:26.0px;height:16px;background:#3A3A3A;border-radius:4px;"></div>
<div class="t" style="left:461.8px;top:679.0px;width:36.0px;height:24px;line-height:24px;font-size:12px;color:#fff;font-weight:normal;text-align:center;-webkit-text-stroke:0.3px #fff;">M</div>
<div style="left:496.8px;top:683px;width:25.999999999999943px;height:16px;background:#3A3A3A;border-radius:4px;"></div>
<div class="t" style="left:491.79999999999995px;top:679.0px;width:35.99999999999994px;height:24px;line-height:24px;font-size:12px;color:#fff;font-weight:normal;text-align:center;-webkit-text-stroke:0.3px #fff;">S</div>
<div style="left:461.8px;top:719px;width:66.9px;height:24px;background:#1B7797;"></div>
<div style="left:527.7px;top:719px;width:1px;height:24px;background:#222;"></div>
<div class="t" style="left:458.8px;top:719.4px;width:72.9px;height:23.2px;line-height:23.2px;font-size:11.6px;color:#fff;font-weight:normal;text-align:center;-webkit-text-stroke:0.35px #fff;">Vam...ums)</div>
<div style="left:528.7px;top:222px;width:66.9px;height:497px;background:#2A2A2A;"></div>
<div style="left:528.2px;top:222px;width:1px;height:497px;background:#363636;"></div>
<div style="left:532.7px;top:222px;width:58px;height:26px;background:#232323;border-radius:0 0 4px 4px;"></div>
<div style="left:532.7px;top:274px;width:39px;height:17px;background:#232323;border:1px solid #2a2a2a;border-radius:5px;"></div>
<div style="left:574.7px;top:275px;width:16px;height:16px;background:#232323;border:1px solid #2a2a2a;border-radius:50%;"></div>
<div style="left:532.7px;top:294px;width:39px;height:17px;background:#232323;border:1px solid #2a2a2a;border-radius:5px;"></div>
<div style="left:574.7px;top:295px;width:16px;height:16px;background:#232323;border:1px solid #2a2a2a;border-radius:50%;"></div>
<div style="left:532.7px;top:314px;width:39px;height:9px;background:#232323;border:1px solid #2a2a2a;border-radius:5px;"></div>
<div style="left:533.7px;top:332px;width:56.0px;height:15px;background:#3A3A3A;border-radius:4px;"></div>
<div class="t" style="left:528.7px;top:327.5px;width:66.0px;height:24px;line-height:24px;font-size:12px;color:#fff;font-weight:normal;text-align:center;-webkit-text-stroke:0.3px #fff;">Bus 1</div>
<div style="left:533.7px;top:354px;width:56px;height:17px;background:#242424;"></div>
<div style="left:533.7px;top:377px;width:56.0px;height:17px;background:#3A3A3A;border-radius:4px;"></div>
<div class="t" style="left:528.7px;top:373.5px;width:66.0px;height:24px;line-height:24px;font-size:12px;color:#5BE26F;font-weight:normal;text-align:center;-webkit-text-stroke:0.3px #5BE26F;">Read</div>
<svg style="position:absolute;left:547.2px;top:402.0px;" width="30" height="30" viewBox="0 0 30 30"><line x1="9" y1="20" x2="24" y2="4.5" stroke="#3AA4F4" stroke-width="1.9"/><path d="M22 2.5 L25.5 0.8 L27.8 3.2 L25 6 Z" fill="#3AA4F4"/><path d="M3 20.5 Q0 24 2.5 27.5 Q5.5 30.5 9.5 28 Q12.5 26.5 12 23.5 L17.5 20 L17 18.5 L13.5 19.5 L14.5 16 L13 15 L9 18.5 Q6.5 17.5 3 20.5 Z" fill="#3AA4F4"/><path d="M5 23 L9 20 M6 26 L10.5 22.5" stroke="#1d4d80" stroke-width="1"/></svg>
<svg style="position:absolute;left:545.8000000000001px;top:439.20000000000005px;" width="32.8" height="34.8" viewBox="0 0 32.8 34.8"><defs><linearGradient id="kg" x1="0" y1="0" x2="0" y2="1"><stop offset="0" stop-color="#444"/><stop offset="1" stop-color="#2a2a2a"/></linearGradient></defs><circle cx="16.4" cy="18.4" r="13.4" fill="url(#kg)" stroke="#0c0c0c" stroke-width="1.4"/><path d="M7.399999999999999 10.399999999999999 A11.9 11.9 0 0 1 25.4 10.399999999999999" stroke="#5a5a5a" stroke-width="0.8" fill="none"/><rect x="15.5" y="7.2" width="2" height="7.2" fill="#fff"/><rect x="16.0" y="2.2" width="1" height="3" fill="#bbb"/></svg>
<div style="left:533.7px;top:481px;width:27.0px;height:17.5px;background:#1c1c1c;border-radius:0px;letter-spacing:-0.7px;"></div>
<div class="t" style="left:528.7px;top:478.25px;width:37.0px;height:23.0px;line-height:23.0px;font-size:11.5px;color:#5BE26F;font-weight:normal;text-align:center;-webkit-text-stroke:0.3px #5BE26F;">-10,0</div>
<div style="left:562.7px;top:481px;width:27.0px;height:17.5px;background:#1c1c1c;border-radius:0px;letter-spacing:-0.7px;"></div>
<div class="t" style="left:557.7px;top:478.25px;width:37.0px;height:23.0px;line-height:23.0px;font-size:11.5px;color:#fff;font-weight:normal;text-align:center;-webkit-text-stroke:0.3px #fff;">-2,0</div>
<div class="t n" style="left:528.3000000000001px;top:516.4px;width:11px;height:10px;line-height:10px;font-size:8px;color:#8a8a8a;text-align:right;">0</div><div style="left:540.3000000000001px;top:520.9px;width:3px;height:1px;background:#8a8a8a;"></div><div class="t n" style="left:528.3000000000001px;top:525.5px;width:11px;height:10px;line-height:10px;font-size:8px;color:#8a8a8a;text-align:right;">3</div><div style="left:540.3000000000001px;top:530.0px;width:3px;height:1px;background:#8a8a8a;"></div><div class="t n" style="left:528.3000000000001px;top:534.4px;width:11px;height:10px;line-height:10px;font-size:8px;color:#8a8a8a;text-align:right;">6</div><div style="left:540.3000000000001px;top:538.9px;width:3px;height:1px;background:#8a8a8a;"></div><div class="t n" style="left:528.3000000000001px;top:543.3px;width:11px;height:10px;line-height:10px;font-size:8px;color:#8a8a8a;text-align:right;">9</div><div style="left:540.3000000000001px;top:547.8px;width:3px;height:1px;background:#8a8a8a;"></div><div class="t n" style="left:528.3000000000001px;top:552.0px;width:11px;height:10px;line-height:10px;font-size:8px;color:#8a8a8a;text-align:right;">12</div><div style="left:540.3000000000001px;top:556.5px;width:3px;height:1px;background:#8a8a8a;"></div><div class="t n" style="left:528.3000000000001px;top:560.9px;width:11px;height:10px;line-height:10px;font-size:8px;color:#8a8a8a;text-align:right;">15</div><div style="left:540.3000000000001px;top:565.4px;width:3px;height:1px;background:#8a8a8a;"></div><div class="t n" style="left:528.3000000000001px;top:569.8px;width:11px;height:10px;line-height:10px;font-size:8px;color:#8a8a8a;text-align:right;">18</div><div style="left:540.3000000000001px;top:574.3px;width:3px;height:1px;background:#8a8a8a;"></div><div class="t n" style="left:528.3000000000001px;top:578.6px;width:11px;height:10px;line-height:10px;font-size:8px;color:#8a8a8a;text-align:right;">21</div><div style="left:540.3000000000001px;top:583.1px;width:3px;height:1px;background:#8a8a8a;"></div><div class="t n" style="left:528.3000000000001px;top:587.5px;width:11px;height:10px;line-height:10px;font-size:8px;color:#8a8a8a;text-align:right;">24</div><div style="left:540.3000000000001px;top:592.0px;width:3px;height:1px;background:#8a8a8a;"></div><div class="t n" style="left:528.3000000000001px;top:599.6px;width:11px;height:10px;line-height:10px;font-size:8px;color:#8a8a8a;text-align:right;">30</div><div style="left:540.3000000000001px;top:604.1px;width:3px;height:1px;background:#8a8a8a;"></div><div class="t n" style="left:528.3000000000001px;top:610.0px;width:11px;height:10px;line-height:10px;font-size:8px;color:#8a8a8a;text-align:right;">35</div><div style="left:540.3000000000001px;top:614.5px;width:3px;height:1px;background:#8a8a8a;"></div><div class="t n" style="left:528.3000000000001px;top:619.6px;width:11px;height:10px;line-height:10px;font-size:8px;color:#8a8a8a;text-align:right;">40</div><div style="left:540.3000000000001px;top:624.1px;width:3px;height:1px;background:#8a8a8a;"></div><div class="t n" style="left:528.3000000000001px;top:629.4px;width:11px;height:10px;line-height:10px;font-size:8px;color:#8a8a8a;text-align:right;">45</div><div style="left:540.3000000000001px;top:633.9px;width:3px;height:1px;background:#8a8a8a;"></div><div class="t n" style="left:528.3000000000001px;top:639.0px;width:11px;height:10px;line-height:10px;font-size:8px;color:#8a8a8a;text-align:right;">50</div><div style="left:540.3000000000001px;top:643.5px;width:3px;height:1px;background:#8a8a8a;"></div><div class="t n" style="left:528.3000000000001px;top:650.1px;width:11px;height:10px;line-height:10px;font-size:8px;color:#8a8a8a;text-align:right;">60</div><div style="left:540.3000000000001px;top:654.6px;width:3px;height:1px;background:#8a8a8a;"></div>
<div style="left:542.3000000000001px;top:521px;width:1px;height:134.5px;border-left:1px dotted #8a8a8a;opacity:0.8;"></div>
<div style="left:544.3000000000001px;top:519px;width:11.5px;height:138.5px;background:#1c1c1c;border-radius:2px;"></div>
<div style="left:546.3000000000001px;top:593px;width:3px;height:63.5px;background:linear-gradient(#4fd15f,#a8d8a8 70%,#d0e0d0);"></div>
<div style="left:550.8000000000001px;top:593px;width:3px;height:63.5px;background:linear-gradient(#4fd15f,#a8d8a8 70%,#d0e0d0);"></div>
<div style="left:563.7px;top:520.65px;width:11px;height:1.5px;background:#6a6a6a;"></div><div style="left:563.7px;top:538.65px;width:11px;height:1.5px;background:#6a6a6a;"></div><div style="left:563.7px;top:556.05px;width:11px;height:1.5px;background:#b0b0b0;"></div><div style="left:563.7px;top:573.05px;width:11px;height:1.5px;background:#6a6a6a;"></div><div style="left:563.7px;top:589.95px;width:11px;height:1.5px;background:#6a6a6a;"></div><div style="left:563.7px;top:601.65px;width:11px;height:1.5px;background:#6a6a6a;"></div><div style="left:563.7px;top:615.55px;width:11px;height:1.5px;background:#6a6a6a;"></div><div style="left:563.7px;top:626.75px;width:11px;height:1.5px;background:#6a6a6a;"></div><div style="left:563.7px;top:638.15px;width:11px;height:1.5px;background:#6a6a6a;"></div><div style="left:563.7px;top:643.65px;width:11px;height:1.5px;background:#6a6a6a;"></div><div style="left:563.7px;top:654.35px;width:11px;height:1.5px;background:#6a6a6a;"></div><div style="left:570.7px;top:526.75px;width:4px;height:1.5px;background:#6a6a6a;"></div><div style="left:570.7px;top:532.25px;width:4px;height:1.5px;background:#6a6a6a;"></div><div style="left:570.7px;top:544.25px;width:4px;height:1.5px;background:#6a6a6a;"></div><div style="left:570.7px;top:549.75px;width:4px;height:1.5px;background:#6a6a6a;"></div><div style="left:570.7px;top:561.25px;width:4px;height:1.5px;background:#6a6a6a;"></div><div style="left:570.7px;top:566.75px;width:4px;height:1.5px;background:#6a6a6a;"></div><div style="left:570.7px;top:578.75px;width:4px;height:1.5px;background:#6a6a6a;"></div><div style="left:570.7px;top:584.25px;width:4px;height:1.5px;background:#6a6a6a;"></div><div style="left:570.7px;top:593.0500000000001px;width:4px;height:1.5px;background:#6a6a6a;"></div><div style="left:570.7px;top:596.25px;width:4px;height:1.5px;background:#6a6a6a;"></div><div style="left:570.7px;top:599.45px;width:4px;height:1.5px;background:#6a6a6a;"></div><div style="left:570.7px;top:605.85px;width:4px;height:1.5px;background:#6a6a6a;"></div><div style="left:570.7px;top:609.0500000000001px;width:4px;height:1.5px;background:#6a6a6a;"></div><div style="left:570.7px;top:612.25px;width:4px;height:1.5px;background:#6a6a6a;"></div><div style="left:570.7px;top:618.65px;width:4px;height:1.5px;background:#6a6a6a;"></div><div style="left:570.7px;top:621.85px;width:4px;height:1.5px;background:#6a6a6a;"></div><div style="left:570.7px;top:625.0500000000001px;width:4px;height:1.5px;background:#6a6a6a;"></div><div style="left:570.7px;top:628.25px;width:4px;height:1.5px;background:#6a6a6a;"></div><div style="left:570.7px;top:631.45px;width:4px;height:1.5px;background:#6a6a6a;"></div><div style="left:570.7px;top:634.65px;width:4px;height:1.5px;background:#6a6a6a;"></div><div style="left:570.7px;top:641.0500000000001px;width:4px;height:1.5px;background:#6a6a6a;"></div><div style="left:570.7px;top:647.45px;width:4px;height:1.5px;background:#6a6a6a;"></div><div style="left:570.7px;top:650.65px;width:4px;height:1.5px;background:#6a6a6a;"></div>
<div style="left:574.7px;top:519px;width:2px;height:138px;background:#141414;"></div>
<div style="left:567.7px;top:550.2px;width:18px;height:35.5px;background:linear-gradient(90deg,#9cbcf4,#c8dcff 40%,#b4cdfa);border:1px solid #6f9cf0;border-radius:3px;box-shadow:0 1px 2px rgba(0,0,0,.6);"></div>
<div style="left:568.7px;top:567.0px;width:16px;height:2.4px;background:#0a0a0a;"></div>
<div style="left:533.7px;top:663px;width:26px;height:16px;background:#3A3A3A;border-radius:4px;"></div>
<div style="left:546.7px;top:665px;width:1px;height:12px;background:#2a2a2a;"></div>
<div class="t" style="left:534.2px;top:659px;width:12px;height:24px;line-height:24px;font-size:12px;color:#fff;font-weight:normal;text-align:center;">R</div>
<div class="t" style="left:547.2px;top:659px;width:12px;height:24px;line-height:24px;font-size:12px;color:#fff;font-weight:normal;text-align:center;">I</div>
<div style="left:533.7px;top:683px;width:26.0px;height:16px;background:#3A3A3A;border-radius:4px;"></div>
<div class="t" style="left:528.7px;top:679.0px;width:36.0px;height:24px;line-height:24px;font-size:12px;color:#fff;font-weight:normal;text-align:center;-webkit-text-stroke:0.3px #fff;">M</div>
<div style="left:563.7px;top:683px;width:26.0px;height:16px;background:#3A3A3A;border-radius:4px;"></div>
<div class="t" style="left:558.7px;top:679.0px;width:36.0px;height:24px;line-height:24px;font-size:12px;color:#fff;font-weight:normal;text-align:center;-webkit-text-stroke:0.3px #fff;">S</div>
<div style="left:528.7px;top:719px;width:66.9px;height:24px;background:#1F709E;"></div>
<div style="left:594.6px;top:719px;width:1px;height:24px;background:#222;"></div>
<div class="t" style="left:525.7px;top:719.4px;width:72.9px;height:23.2px;line-height:23.2px;font-size:11.6px;color:#fff;font-weight:normal;text-align:center;-webkit-text-stroke:0.35px #fff;">Vam...ass)</div>
<div style="left:595.6px;top:222px;width:66.9px;height:497px;background:#2A2A2A;"></div>
<div style="left:595.1px;top:222px;width:1px;height:497px;background:#363636;"></div>
<div style="left:599.6px;top:222px;width:58px;height:26px;background:#232323;border-radius:0 0 4px 4px;"></div>
<div style="left:599.6px;top:274px;width:39px;height:17px;background:#232323;border:1px solid #2a2a2a;border-radius:5px;"></div>
<div style="left:641.6px;top:275px;width:16px;height:16px;background:#232323;border:1px solid #2a2a2a;border-radius:50%;"></div>
<div style="left:599.6px;top:294px;width:39px;height:17px;background:#232323;border:1px solid #2a2a2a;border-radius:5px;"></div>
<div style="left:641.6px;top:295px;width:16px;height:16px;background:#232323;border:1px solid #2a2a2a;border-radius:50%;"></div>
<div style="left:599.6px;top:314px;width:39px;height:9px;background:#232323;border:1px solid #2a2a2a;border-radius:5px;"></div>
<div style="left:600.6px;top:332px;width:56.0px;height:15px;background:#3A3A3A;border-radius:4px;"></div>
<div class="t" style="left:595.6px;top:327.5px;width:66.0px;height:24px;line-height:24px;font-size:12px;color:#fff;font-weight:normal;text-align:center;-webkit-text-stroke:0.3px #fff;">Bus 1</div>
<div style="left:600.6px;top:354px;width:56px;height:17px;background:#242424;"></div>
<div style="left:600.6px;top:377px;width:56.0px;height:17px;background:#3A3A3A;border-radius:4px;"></div>
<div class="t" style="left:595.6px;top:373.5px;width:66.0px;height:24px;line-height:24px;font-size:12px;color:#5BE26F;font-weight:normal;text-align:center;-webkit-text-stroke:0.3px #5BE26F;">Read</div>
<svg style="position:absolute;left:617.1px;top:403.5px;" width="24" height="24" viewBox="0 0 24 24"><g stroke="#8C6FE8" stroke-width="2"><line x1="3.0" y1="9" x2="3.0" y2="15"/><line x1="6.6" y1="5" x2="6.6" y2="19"/><line x1="10.2" y1="2" x2="10.2" y2="22"/><line x1="13.8" y1="6" x2="13.8" y2="18"/><line x1="17.4" y1="4" x2="17.4" y2="20"/><line x1="21.0" y1="9" x2="21.0" y2="15"/></g></svg>
<svg style="position:absolute;left:612.7px;top:439.20000000000005px;" width="32.8" height="34.8" viewBox="0 0 32.8 34.8"><defs><linearGradient id="kg" x1="0" y1="0" x2="0" y2="1"><stop offset="0" stop-color="#444"/><stop offset="1" stop-color="#2a2a2a"/></linearGradient></defs><circle cx="16.4" cy="18.4" r="13.4" fill="url(#kg)" stroke="#0c0c0c" stroke-width="1.4"/><path d="M7.399999999999999 10.399999999999999 A11.9 11.9 0 0 1 25.4 10.399999999999999" stroke="#5a5a5a" stroke-width="0.8" fill="none"/><rect x="15.5" y="7.2" width="2" height="7.2" fill="#fff"/><rect x="16.0" y="2.2" width="1" height="3" fill="#bbb"/></svg>
<div style="left:600.6px;top:481px;width:27.0px;height:17.5px;background:#1c1c1c;border-radius:0px;letter-spacing:-0.7px;"></div>
<div class="t" style="left:595.6px;top:478.25px;width:37.0px;height:23.0px;line-height:23.0px;font-size:11.5px;color:#5BE26F;font-weight:normal;text-align:center;-webkit-text-stroke:0.3px #5BE26F;">-25,8</div>
<div style="left:629.6px;top:481px;width:27.0px;height:17.5px;background:#1c1c1c;border-radius:0px;letter-spacing:-0.7px;"></div>
<div class="t" style="left:624.6px;top:478.25px;width:37.0px;height:23.0px;line-height:23.0px;font-size:11.5px;color:#fff;font-weight:normal;text-align:center;-webkit-text-stroke:0.3px #fff;">0,0</div>
<div class="t n" style="left:595.2px;top:516.4px;width:11px;height:10px;line-height:10px;font-size:8px;color:#8a8a8a;text-align:right;">0</div><div style="left:607.2px;top:520.9px;width:3px;height:1px;background:#8a8a8a;"></div><div class="t n" style="left:595.2px;top:525.5px;width:11px;height:10px;line-height:10px;font-size:8px;color:#8a8a8a;text-align:right;">3</div><div style="left:607.2px;top:530.0px;width:3px;height:1px;background:#8a8a8a;"></div><div class="t n" style="left:595.2px;top:534.4px;width:11px;height:10px;line-height:10px;font-size:8px;color:#8a8a8a;text-align:right;">6</div><div style="left:607.2px;top:538.9px;width:3px;height:1px;background:#8a8a8a;"></div><div class="t n" style="left:595.2px;top:543.3px;width:11px;height:10px;line-height:10px;font-size:8px;color:#8a8a8a;text-align:right;">9</div><div style="left:607.2px;top:547.8px;width:3px;height:1px;background:#8a8a8a;"></div><div class="t n" style="left:595.2px;top:552.0px;width:11px;height:10px;line-height:10px;font-size:8px;color:#8a8a8a;text-align:right;">12</div><div style="left:607.2px;top:556.5px;width:3px;height:1px;background:#8a8a8a;"></div><div class="t n" style="left:595.2px;top:560.9px;width:11px;height:10px;line-height:10px;font-size:8px;color:#8a8a8a;text-align:right;">15</div><div style="left:607.2px;top:565.4px;width:3px;height:1px;background:#8a8a8a;"></div><div class="t n" style="left:595.2px;top:569.8px;width:11px;height:10px;line-height:10px;font-size:8px;color:#8a8a8a;text-align:right;">18</div><div style="left:607.2px;top:574.3px;width:3px;height:1px;background:#8a8a8a;"></div><div class="t n" style="left:595.2px;top:578.6px;width:11px;height:10px;line-height:10px;font-size:8px;color:#8a8a8a;text-align:right;">21</div><div style="left:607.2px;top:583.1px;width:3px;height:1px;background:#8a8a8a;"></div><div class="t n" style="left:595.2px;top:587.5px;width:11px;height:10px;line-height:10px;font-size:8px;color:#8a8a8a;text-align:right;">24</div><div style="left:607.2px;top:592.0px;width:3px;height:1px;background:#8a8a8a;"></div><div class="t n" style="left:595.2px;top:599.6px;width:11px;height:10px;line-height:10px;font-size:8px;color:#8a8a8a;text-align:right;">30</div><div style="left:607.2px;top:604.1px;width:3px;height:1px;background:#8a8a8a;"></div><div class="t n" style="left:595.2px;top:610.0px;width:11px;height:10px;line-height:10px;font-size:8px;color:#8a8a8a;text-align:right;">35</div><div style="left:607.2px;top:614.5px;width:3px;height:1px;background:#8a8a8a;"></div><div class="t n" style="left:595.2px;top:619.6px;width:11px;height:10px;line-height:10px;font-size:8px;color:#8a8a8a;text-align:right;">40</div><div style="left:607.2px;top:624.1px;width:3px;height:1px;background:#8a8a8a;"></div><div class="t n" style="left:595.2px;top:629.4px;width:11px;height:10px;line-height:10px;font-size:8px;color:#8a8a8a;text-align:right;">45</div><div style="left:607.2px;top:633.9px;width:3px;height:1px;background:#8a8a8a;"></div><div class="t n" style="left:595.2px;top:639.0px;width:11px;height:10px;line-height:10px;font-size:8px;color:#8a8a8a;text-align:right;">50</div><div style="left:607.2px;top:643.5px;width:3px;height:1px;background:#8a8a8a;"></div><div class="t n" style="left:595.2px;top:650.1px;width:11px;height:10px;line-height:10px;font-size:8px;color:#8a8a8a;text-align:right;">60</div><div style="left:607.2px;top:654.6px;width:3px;height:1px;background:#8a8a8a;"></div>
<div style="left:609.2px;top:521px;width:1px;height:134.5px;border-left:1px dotted #8a8a8a;opacity:0.8;"></div>
<div style="left:611.2px;top:519px;width:11.5px;height:138.5px;background:#1c1c1c;border-radius:2px;"></div>
<div style="left:613.2px;top:625px;width:3px;height:31.5px;background:linear-gradient(#4fd15f,#a8d8a8 70%,#d0e0d0);"></div>
<div style="left:617.7px;top:625px;width:3px;height:31.5px;background:linear-gradient(#4fd15f,#a8d8a8 70%,#d0e0d0);"></div>
<div style="left:613.2px;top:622px;width:3px;height:1.5px;background:#4fd15f;"></div>
<div style="left:617.7px;top:622px;width:3px;height:1.5px;background:#4fd15f;"></div>
<div style="left:630.6px;top:520.65px;width:11px;height:1.5px;background:#6a6a6a;"></div><div style="left:630.6px;top:538.65px;width:11px;height:1.5px;background:#6a6a6a;"></div><div style="left:630.6px;top:556.05px;width:11px;height:1.5px;background:#b0b0b0;"></div><div style="left:630.6px;top:573.05px;width:11px;height:1.5px;background:#6a6a6a;"></div><div style="left:630.6px;top:589.95px;width:11px;height:1.5px;background:#6a6a6a;"></div><div style="left:630.6px;top:601.65px;width:11px;height:1.5px;background:#6a6a6a;"></div><div style="left:630.6px;top:615.55px;width:11px;height:1.5px;background:#6a6a6a;"></div><div style="left:630.6px;top:626.75px;width:11px;height:1.5px;background:#6a6a6a;"></div><div style="left:630.6px;top:638.15px;width:11px;height:1.5px;background:#6a6a6a;"></div><div style="left:630.6px;top:643.65px;width:11px;height:1.5px;background:#6a6a6a;"></div><div style="left:630.6px;top:654.35px;width:11px;height:1.5px;background:#6a6a6a;"></div><div style="left:637.6px;top:526.75px;width:4px;height:1.5px;background:#6a6a6a;"></div><div style="left:637.6px;top:532.25px;width:4px;height:1.5px;background:#6a6a6a;"></div><div style="left:637.6px;top:544.25px;width:4px;height:1.5px;background:#6a6a6a;"></div><div style="left:637.6px;top:549.75px;width:4px;height:1.5px;background:#6a6a6a;"></div><div style="left:637.6px;top:561.25px;width:4px;height:1.5px;background:#6a6a6a;"></div><div style="left:637.6px;top:566.75px;width:4px;height:1.5px;background:#6a6a6a;"></div><div style="left:637.6px;top:578.75px;width:4px;height:1.5px;background:#6a6a6a;"></div><div style="left:637.6px;top:584.25px;width:4px;height:1.5px;background:#6a6a6a;"></div><div style="left:637.6px;top:593.0500000000001px;width:4px;height:1.5px;background:#6a6a6a;"></div><div style="left:637.6px;top:596.25px;width:4px;height:1.5px;background:#6a6a6a;"></div><div style="left:637.6px;top:599.45px;width:4px;height:1.5px;background:#6a6a6a;"></div><div style="left:637.6px;top:605.85px;width:4px;height:1.5px;background:#6a6a6a;"></div><div style="left:637.6px;top:609.0500000000001px;width:4px;height:1.5px;background:#6a6a6a;"></div><div style="left:637.6px;top:612.25px;width:4px;height:1.5px;background:#6a6a6a;"></div><div style="left:637.6px;top:618.65px;width:4px;height:1.5px;background:#6a6a6a;"></div><div style="left:637.6px;top:621.85px;width:4px;height:1.5px;background:#6a6a6a;"></div><div style="left:637.6px;top:625.0500000000001px;width:4px;height:1.5px;background:#6a6a6a;"></div><div style="left:637.6px;top:628.25px;width:4px;height:1.5px;background:#6a6a6a;"></div><div style="left:637.6px;top:631.45px;width:4px;height:1.5px;background:#6a6a6a;"></div><div style="left:637.6px;top:634.65px;width:4px;height:1.5px;background:#6a6a6a;"></div><div style="left:637.6px;top:641.0500000000001px;width:4px;height:1.5px;background:#6a6a6a;"></div><div style="left:637.6px;top:647.45px;width:4px;height:1.5px;background:#6a6a6a;"></div><div style="left:637.6px;top:650.65px;width:4px;height:1.5px;background:#6a6a6a;"></div>
<div style="left:641.6px;top:519px;width:2px;height:138px;background:#141414;"></div>
<div style="left:634.6px;top:538.7px;width:18px;height:35.5px;background:linear-gradient(90deg,#9cbcf4,#c8dcff 40%,#b4cdfa);border:1px solid #6f9cf0;border-radius:3px;box-shadow:0 1px 2px rgba(0,0,0,.6);"></div>
<div style="left:635.6px;top:555.5px;width:16px;height:2.4px;background:#0a0a0a;"></div>
<div style="left:600.6px;top:663px;width:26px;height:16px;background:#3A3A3A;border-radius:4px;"></div>
<div style="left:613.6px;top:665px;width:1px;height:12px;background:#2a2a2a;"></div>
<div class="t" style="left:601.1px;top:659px;width:12px;height:24px;line-height:24px;font-size:12px;color:#fff;font-weight:normal;text-align:center;">R</div>
<div class="t" style="left:614.1px;top:659px;width:12px;height:24px;line-height:24px;font-size:12px;color:#fff;font-weight:normal;text-align:center;">I</div>
<div style="left:600.6px;top:683px;width:26.0px;height:16px;background:#3A3A3A;border-radius:4px;"></div>
<div class="t" style="left:595.6px;top:679.0px;width:36.0px;height:24px;line-height:24px;font-size:12px;color:#fff;font-weight:normal;text-align:center;-webkit-text-stroke:0.3px #fff;">M</div>
<div style="left:630.6px;top:683px;width:26.0px;height:16px;background:#3A3A3A;border-radius:4px;"></div>
<div class="t" style="left:625.6px;top:679.0px;width:36.0px;height:24px;line-height:24px;font-size:12px;color:#fff;font-weight:normal;text-align:center;-webkit-text-stroke:0.3px #fff;">S</div>
<div style="left:595.6px;top:719px;width:66.9px;height:24px;background:#4535AD;"></div>
<div style="left:661.5px;top:719px;width:1px;height:24px;background:#222;"></div>
<div class="t" style="left:592.6px;top:719.4px;width:72.9px;height:23.2px;line-height:23.2px;font-size:11.6px;color:#fff;font-weight:normal;text-align:center;-webkit-text-stroke:0.35px #fff;">Vam...ther)</div>
<div style="left:662.5px;top:222px;width:66.9px;height:497px;background:#2A2A2A;"></div>
<div style="left:662.0px;top:222px;width:1px;height:497px;background:#363636;"></div>
<div style="left:666.5px;top:222px;width:58px;height:26px;background:#232323;border-radius:0 0 4px 4px;"></div>
<div style="left:667.5px;top:274px;width:38.0px;height:17px;background:#222;border-radius:4px;border:1px solid #333;"></div>
<div class="t" style="left:662.5px;top:271.5px;width:48.0px;height:22px;line-height:22px;font-size:11px;color:#fff;font-weight:normal;text-align:center;-webkit-text-stroke:0.3px #fff;">Bus 3</div>
<div style="left:709.5px;top:275px;width:15px;height:15px;background:#1a1a1a;border-radius:50%;"></div>
<div style="left:712.5px;top:278px;width:9px;height:9px;background:radial-gradient(circle at 40% 35%,#aaa,#666);border-radius:50%;"></div>
<div style="left:710.5px;top:285px;width:3px;height:3px;background:#5aa0f0;border-radius:1px;"></div>
<div style="left:667.5px;top:294px;width:38.0px;height:17px;background:#222;border-radius:4px;border:1px solid #333;"></div>
<div class="t" style="left:662.5px;top:291.5px;width:48.0px;height:22px;line-height:22px;font-size:11px;color:#fff;font-weight:normal;text-align:center;-webkit-text-stroke:0.3px #fff;">Bus 4</div>
<div style="left:709.5px;top:295px;width:15px;height:15px;background:#1a1a1a;border-radius:50%;"></div>
<div style="left:712.5px;top:298px;width:9px;height:9px;background:radial-gradient(circle at 40% 35%,#aaa,#666);border-radius:50%;"></div>
<div style="left:710.5px;top:305px;width:3px;height:3px;background:#5aa0f0;border-radius:1px;"></div>
<div style="left:667.5px;top:314px;width:39px;height:9px;background:#2c2c2c;border-radius:5px;"></div>
<div style="left:667.5px;top:332px;width:56.0px;height:15px;background:#3A3A3A;border-radius:4px;"></div>
<div class="t" style="left:662.5px;top:327.5px;width:66.0px;height:24px;line-height:24px;font-size:12px;color:#fff;font-weight:normal;text-align:center;-webkit-text-stroke:0.3px #fff;">St Out</div>
<div style="left:667.5px;top:354px;width:56px;height:17px;background:#242424;"></div>
<div style="left:667.5px;top:377px;width:56.0px;height:17px;background:#3A3A3A;border-radius:4px;"></div>
<div class="t" style="left:662.5px;top:373.5px;width:66.0px;height:24px;line-height:24px;font-size:12px;color:#5BE26F;font-weight:normal;text-align:center;-webkit-text-stroke:0.3px #5BE26F;">Read</div>
<svg style="position:absolute;left:684.0px;top:404.5px;" width="24" height="24" viewBox="0 0 24 24"><g fill="#12D030"><path d="M1.5 2.2 Q6 -0.5 10.5 2.2 L10.8 4 Q12 9 11.6 14 Q11 20.5 8.8 22.3 H3.2 Q1 20.5 0.4 14 Q0 9 1.2 4 Z"/><path d="M13.5 2.2 Q18 -0.5 22.5 2.2 L22.8 4 Q24 9 23.6 14 Q23 20.5 20.8 22.3 H15.2 Q13 20.5 12.4 14 Q12 9 13.2 4 Z"/></g><g fill="#128a22"><rect x="1.2" y="3.2" width="9.6" height="1.4"/><rect x="13.2" y="3.2" width="9.6" height="1.4"/></g><g stroke="#128a22" stroke-width="0.9" fill="none"><path d="M3 4.5 V8 M9 4.5 V8 M15 4.5 V8 M21 4.5 V8"/></g></svg>
<svg style="position:absolute;left:679.6px;top:439.20000000000005px;" width="32.8" height="34.8" viewBox="0 0 32.8 34.8"><defs><linearGradient id="kg" x1="0" y1="0" x2="0" y2="1"><stop offset="0" stop-color="#444"/><stop offset="1" stop-color="#2a2a2a"/></linearGradient></defs><circle cx="16.4" cy="18.4" r="13.4" fill="url(#kg)" stroke="#0c0c0c" stroke-width="1.4"/><path d="M7.399999999999999 10.399999999999999 A11.9 11.9 0 0 1 25.4 10.399999999999999" stroke="#5a5a5a" stroke-width="0.8" fill="none"/><rect x="15.5" y="7.2" width="2" height="7.2" fill="#fff"/><rect x="16.0" y="2.2" width="1" height="3" fill="#bbb"/></svg>
<div style="left:667.5px;top:481px;width:27.0px;height:17.5px;background:#1c1c1c;border-radius:0px;letter-spacing:-0.7px;"></div>
<div class="t" style="left:662.5px;top:478.25px;width:37.0px;height:23.0px;line-height:23.0px;font-size:11.5px;color:#5BE26F;font-weight:normal;text-align:center;-webkit-text-stroke:0.3px #5BE26F;">-7,3</div>
<div style="left:696.5px;top:481px;width:27.0px;height:17.5px;background:#1c1c1c;border-radius:0px;letter-spacing:-0.7px;"></div>
<div class="t" style="left:691.5px;top:478.25px;width:37.0px;height:23.0px;line-height:23.0px;font-size:11.5px;color:#fff;font-weight:normal;text-align:center;-webkit-text-stroke:0.3px #fff;">-10,0</div>
<div class="t n" style="left:662.1px;top:516.4px;width:11px;height:10px;line-height:10px;font-size:8px;color:#8a8a8a;text-align:right;">0</div><div style="left:674.1px;top:520.9px;width:3px;height:1px;background:#8a8a8a;"></div><div class="t n" style="left:662.1px;top:525.5px;width:11px;height:10px;line-height:10px;font-size:8px;color:#8a8a8a;text-align:right;">3</div><div style="left:674.1px;top:530.0px;width:3px;height:1px;background:#8a8a8a;"></div><div class="t n" style="left:662.1px;top:534.4px;width:11px;height:10px;line-height:10px;font-size:8px;color:#8a8a8a;text-align:right;">6</div><div style="left:674.1px;top:538.9px;width:3px;height:1px;background:#8a8a8a;"></div><div class="t n" style="left:662.1px;top:543.3px;width:11px;height:10px;line-height:10px;font-size:8px;color:#8a8a8a;text-align:right;">9</div><div style="left:674.1px;top:547.8px;width:3px;height:1px;background:#8a8a8a;"></div><div class="t n" style="left:662.1px;top:552.0px;width:11px;height:10px;line-height:10px;font-size:8px;color:#8a8a8a;text-align:right;">12</div><div style="left:674.1px;top:556.5px;width:3px;height:1px;background:#8a8a8a;"></div><div class="t n" style="left:662.1px;top:560.9px;width:11px;height:10px;line-height:10px;font-size:8px;color:#8a8a8a;text-align:right;">15</div><div style="left:674.1px;top:565.4px;width:3px;height:1px;background:#8a8a8a;"></div><div class="t n" style="left:662.1px;top:569.8px;width:11px;height:10px;line-height:10px;font-size:8px;color:#8a8a8a;text-align:right;">18</div><div style="left:674.1px;top:574.3px;width:3px;height:1px;background:#8a8a8a;"></div><div class="t n" style="left:662.1px;top:578.6px;width:11px;height:10px;line-height:10px;font-size:8px;color:#8a8a8a;text-align:right;">21</div><div style="left:674.1px;top:583.1px;width:3px;height:1px;background:#8a8a8a;"></div><div class="t n" style="left:662.1px;top:587.5px;width:11px;height:10px;line-height:10px;font-size:8px;color:#8a8a8a;text-align:right;">24</div><div style="left:674.1px;top:592.0px;width:3px;height:1px;background:#8a8a8a;"></div><div class="t n" style="left:662.1px;top:599.6px;width:11px;height:10px;line-height:10px;font-size:8px;color:#8a8a8a;text-align:right;">30</div><div style="left:674.1px;top:604.1px;width:3px;height:1px;background:#8a8a8a;"></div><div class="t n" style="left:662.1px;top:610.0px;width:11px;height:10px;line-height:10px;font-size:8px;color:#8a8a8a;text-align:right;">35</div><div style="left:674.1px;top:614.5px;width:3px;height:1px;background:#8a8a8a;"></div><div class="t n" style="left:662.1px;top:619.6px;width:11px;height:10px;line-height:10px;font-size:8px;color:#8a8a8a;text-align:right;">40</div><div style="left:674.1px;top:624.1px;width:3px;height:1px;background:#8a8a8a;"></div><div class="t n" style="left:662.1px;top:629.4px;width:11px;height:10px;line-height:10px;font-size:8px;color:#8a8a8a;text-align:right;">45</div><div style="left:674.1px;top:633.9px;width:3px;height:1px;background:#8a8a8a;"></div><div class="t n" style="left:662.1px;top:639.0px;width:11px;height:10px;line-height:10px;font-size:8px;color:#8a8a8a;text-align:right;">50</div><div style="left:674.1px;top:643.5px;width:3px;height:1px;background:#8a8a8a;"></div><div class="t n" style="left:662.1px;top:650.1px;width:11px;height:10px;line-height:10px;font-size:8px;color:#8a8a8a;text-align:right;">60</div><div style="left:674.1px;top:654.6px;width:3px;height:1px;background:#8a8a8a;"></div>
<div style="left:676.1px;top:521px;width:1px;height:134.5px;border-left:1px dotted #8a8a8a;opacity:0.8;"></div>
<div style="left:678.1px;top:519px;width:11.5px;height:138.5px;background:#1c1c1c;border-radius:2px;"></div>
<div style="left:697.5px;top:520.65px;width:11px;height:1.5px;background:#6a6a6a;"></div><div style="left:697.5px;top:538.65px;width:11px;height:1.5px;background:#6a6a6a;"></div><div style="left:697.5px;top:556.05px;width:11px;height:1.5px;background:#b0b0b0;"></div><div style="left:697.5px;top:573.05px;width:11px;height:1.5px;background:#6a6a6a;"></div><div style="left:697.5px;top:589.95px;width:11px;height:1.5px;background:#6a6a6a;"></div><div style="left:697.5px;top:601.65px;width:11px;height:1.5px;background:#6a6a6a;"></div><div style="left:697.5px;top:615.55px;width:11px;height:1.5px;background:#6a6a6a;"></div><div style="left:697.5px;top:626.75px;width:11px;height:1.5px;background:#6a6a6a;"></div><div style="left:697.5px;top:638.15px;width:11px;height:1.5px;background:#6a6a6a;"></div><div style="left:697.5px;top:643.65px;width:11px;height:1.5px;background:#6a6a6a;"></div><div style="left:697.5px;top:654.35px;width:11px;height:1.5px;background:#6a6a6a;"></div><div style="left:704.5px;top:526.75px;width:4px;height:1.5px;background:#6a6a6a;"></div><div style="left:704.5px;top:532.25px;width:4px;height:1.5px;background:#6a6a6a;"></div><div style="left:704.5px;top:544.25px;width:4px;height:1.5px;background:#6a6a6a;"></div><div style="left:704.5px;top:549.75px;width:4px;height:1.5px;background:#6a6a6a;"></div><div style="left:704.5px;top:561.25px;width:4px;height:1.5px;background:#6a6a6a;"></div><div style="left:704.5px;top:566.75px;width:4px;height:1.5px;background:#6a6a6a;"></div><div style="left:704.5px;top:578.75px;width:4px;height:1.5px;background:#6a6a6a;"></div><div style="left:704.5px;top:584.25px;width:4px;height:1.5px;background:#6a6a6a;"></div><div style="left:704.5px;top:593.0500000000001px;width:4px;height:1.5px;background:#6a6a6a;"></div><div style="left:704.5px;top:596.25px;width:4px;height:1.5px;background:#6a6a6a;"></div><div style="left:704.5px;top:599.45px;width:4px;height:1.5px;background:#6a6a6a;"></div><div style="left:704.5px;top:605.85px;width:4px;height:1.5px;background:#6a6a6a;"></div><div style="left:704.5px;top:609.0500000000001px;width:4px;height:1.5px;background:#6a6a6a;"></div><div style="left:704.5px;top:612.25px;width:4px;height:1.5px;background:#6a6a6a;"></div><div style="left:704.5px;top:618.65px;width:4px;height:1.5px;background:#6a6a6a;"></div><div style="left:704.5px;top:621.85px;width:4px;height:1.5px;background:#6a6a6a;"></div><div style="left:704.5px;top:625.0500000000001px;width:4px;height:1.5px;background:#6a6a6a;"></div><div style="left:704.5px;top:628.25px;width:4px;height:1.5px;background:#6a6a6a;"></div><div style="left:704.5px;top:631.45px;width:4px;height:1.5px;background:#6a6a6a;"></div><div style="left:704.5px;top:634.65px;width:4px;height:1.5px;background:#6a6a6a;"></div><div style="left:704.5px;top:641.0500000000001px;width:4px;height:1.5px;background:#6a6a6a;"></div><div style="left:704.5px;top:647.45px;width:4px;height:1.5px;background:#6a6a6a;"></div><div style="left:704.5px;top:650.65px;width:4px;height:1.5px;background:#6a6a6a;"></div>
<div style="left:708.5px;top:519px;width:2px;height:138px;background:#141414;"></div>
<div style="left:701.5px;top:584.6px;width:18px;height:35.5px;background:linear-gradient(90deg,#9cbcf4,#c8dcff 40%,#b4cdfa);border:1px solid #6f9cf0;border-radius:3px;box-shadow:0 1px 2px rgba(0,0,0,.6);"></div>
<div style="left:702.5px;top:601.4px;width:16px;height:2.4px;background:#0a0a0a;"></div>
<div style="left:667.5px;top:683px;width:26.0px;height:16px;background:#3A3A3A;border-radius:4px;"></div>
<div class="t" style="left:662.5px;top:679.0px;width:36.0px;height:24px;line-height:24px;font-size:12px;color:#fff;font-weight:normal;text-align:center;-webkit-text-stroke:0.3px #fff;">M</div>
<div style="left:697.5px;top:683px;width:26.0px;height:16px;background:#3A3A3A;border-radius:4px;"></div>
<div class="t" style="left:692.5px;top:679.0px;width:36.0px;height:24px;line-height:24px;font-size:12px;color:#fff;font-weight:normal;text-align:center;-webkit-text-stroke:0.3px #fff;">S</div>
<div style="left:662.5px;top:719px;width:66.9px;height:24px;background:#1D962F;"></div>
<div style="left:728.4px;top:719px;width:1px;height:24px;background:#222;"></div>
<div class="t" style="left:659.5px;top:719.4px;width:72.9px;height:23.2px;line-height:23.2px;font-size:11.6px;color:#fff;font-weight:normal;text-align:center;-webkit-text-stroke:0.35px #fff;">Latin Kit</div>
<div style="left:729.4px;top:222px;width:66.9px;height:497px;background:#2A2A2A;"></div>
<div style="left:728.9px;top:222px;width:1px;height:497px;background:#363636;"></div>
<div style="left:733.4px;top:222px;width:58px;height:26px;background:#232323;border-radius:0 0 4px 4px;"></div>
<div style="left:733.4px;top:274px;width:39px;height:17px;background:#232323;border:1px solid #2a2a2a;border-radius:5px;"></div>
<div style="left:775.4px;top:275px;width:16px;height:16px;background:#232323;border:1px solid #2a2a2a;border-radius:50%;"></div>
<div style="left:733.4px;top:294px;width:39px;height:17px;background:#232323;border:1px solid #2a2a2a;border-radius:5px;"></div>
<div style="left:775.4px;top:295px;width:16px;height:16px;background:#232323;border:1px solid #2a2a2a;border-radius:50%;"></div>
<div style="left:733.4px;top:314px;width:39px;height:9px;background:#232323;border:1px solid #2a2a2a;border-radius:5px;"></div>
<div style="left:734.4px;top:332px;width:56.0px;height:15px;background:#3A3A3A;border-radius:4px;"></div>
<div class="t" style="left:729.4px;top:327.5px;width:66.0px;height:24px;line-height:24px;font-size:12px;color:#fff;font-weight:normal;text-align:center;-webkit-text-stroke:0.3px #fff;">St Out</div>
<div style="left:734.4px;top:354px;width:56px;height:17px;background:#242424;"></div>
<div style="left:734.4px;top:377px;width:56.0px;height:17px;background:#3A3A3A;border-radius:4px;"></div>
<div class="t" style="left:729.4px;top:373.5px;width:66.0px;height:24px;line-height:24px;font-size:12px;color:#5BE26F;font-weight:normal;text-align:center;-webkit-text-stroke:0.3px #5BE26F;">Read</div>
<svg style="position:absolute;left:749.9px;top:402.5px;" width="26" height="26" viewBox="0 0 26 26"><g stroke="#B88A2C" stroke-width="1.8" fill="none"><path d="M2 24.5 L20 6.5"/><path d="M7 22 L17 12 L20 15 L10 25 Z"/><path d="M5 18 L13 10" stroke="#8a6a20" stroke-width="1.3"/></g><path d="M17 8 L21 1 L27 7 L20 11 Z" fill="#C89A30"/><g stroke="#E0C070" stroke-width="1"><line x1="11" y1="16" x2="14" y2="19"/><line x1="13" y1="14" x2="16" y2="17"/></g><circle cx="2" cy="25" r="1.5" fill="#ddd"/></svg>
<svg style="position:absolute;left:746.5px;top:439.20000000000005px;" width="32.8" height="34.8" viewBox="0 0 32.8 34.8"><defs><linearGradient id="kg" x1="0" y1="0" x2="0" y2="1"><stop offset="0" stop-color="#444"/><stop offset="1" stop-color="#2a2a2a"/></linearGradient></defs><circle cx="16.4" cy="18.4" r="13.4" fill="url(#kg)" stroke="#0c0c0c" stroke-width="1.4"/><path d="M7.399999999999999 10.399999999999999 A11.9 11.9 0 0 1 25.4 10.399999999999999" stroke="#5a5a5a" stroke-width="0.8" fill="none"/><rect x="15.5" y="7.2" width="2" height="7.2" fill="#fff"/><rect x="16.0" y="2.2" width="1" height="3" fill="#bbb"/></svg>
<div style="left:734.4px;top:481px;width:27.0px;height:17.5px;background:#1c1c1c;border-radius:0px;letter-spacing:-0.7px;"></div>
<div class="t" style="left:729.4px;top:478.25px;width:37.0px;height:23.0px;line-height:23.0px;font-size:11.5px;color:#5BE26F;font-weight:normal;text-align:center;-webkit-text-stroke:0.3px #5BE26F;">-13,1</div>
<div style="left:763.4px;top:481px;width:27.0px;height:17.5px;background:#1c1c1c;border-radius:0px;letter-spacing:-0.7px;"></div>
<div class="t" style="left:758.4px;top:478.25px;width:37.0px;height:23.0px;line-height:23.0px;font-size:11.5px;color:#fff;font-weight:normal;text-align:center;-webkit-text-stroke:0.3px #fff;">-13,4</div>
<div class="t n" style="left:729.0px;top:516.4px;width:11px;height:10px;line-height:10px;font-size:8px;color:#8a8a8a;text-align:right;">0</div><div style="left:741.0px;top:520.9px;width:3px;height:1px;background:#8a8a8a;"></div><div class="t n" style="left:729.0px;top:525.5px;width:11px;height:10px;line-height:10px;font-size:8px;color:#8a8a8a;text-align:right;">3</div><div style="left:741.0px;top:530.0px;width:3px;height:1px;background:#8a8a8a;"></div><div class="t n" style="left:729.0px;top:534.4px;width:11px;height:10px;line-height:10px;font-size:8px;color:#8a8a8a;text-align:right;">6</div><div style="left:741.0px;top:538.9px;width:3px;height:1px;background:#8a8a8a;"></div><div class="t n" style="left:729.0px;top:543.3px;width:11px;height:10px;line-height:10px;font-size:8px;color:#8a8a8a;text-align:right;">9</div><div style="left:741.0px;top:547.8px;width:3px;height:1px;background:#8a8a8a;"></div><div class="t n" style="left:729.0px;top:552.0px;width:11px;height:10px;line-height:10px;font-size:8px;color:#8a8a8a;text-align:right;">12</div><div style="left:741.0px;top:556.5px;width:3px;height:1px;background:#8a8a8a;"></div><div class="t n" style="left:729.0px;top:560.9px;width:11px;height:10px;line-height:10px;font-size:8px;color:#8a8a8a;text-align:right;">15</div><div style="left:741.0px;top:565.4px;width:3px;height:1px;background:#8a8a8a;"></div><div class="t n" style="left:729.0px;top:569.8px;width:11px;height:10px;line-height:10px;font-size:8px;color:#8a8a8a;text-align:right;">18</div><div style="left:741.0px;top:574.3px;width:3px;height:1px;background:#8a8a8a;"></div><div class="t n" style="left:729.0px;top:578.6px;width:11px;height:10px;line-height:10px;font-size:8px;color:#8a8a8a;text-align:right;">21</div><div style="left:741.0px;top:583.1px;width:3px;height:1px;background:#8a8a8a;"></div><div class="t n" style="left:729.0px;top:587.5px;width:11px;height:10px;line-height:10px;font-size:8px;color:#8a8a8a;text-align:right;">24</div><div style="left:741.0px;top:592.0px;width:3px;height:1px;background:#8a8a8a;"></div><div class="t n" style="left:729.0px;top:599.6px;width:11px;height:10px;line-height:10px;font-size:8px;color:#8a8a8a;text-align:right;">30</div><div style="left:741.0px;top:604.1px;width:3px;height:1px;background:#8a8a8a;"></div><div class="t n" style="left:729.0px;top:610.0px;width:11px;height:10px;line-height:10px;font-size:8px;color:#8a8a8a;text-align:right;">35</div><div style="left:741.0px;top:614.5px;width:3px;height:1px;background:#8a8a8a;"></div><div class="t n" style="left:729.0px;top:619.6px;width:11px;height:10px;line-height:10px;font-size:8px;color:#8a8a8a;text-align:right;">40</div><div style="left:741.0px;top:624.1px;width:3px;height:1px;background:#8a8a8a;"></div><div class="t n" style="left:729.0px;top:629.4px;width:11px;height:10px;line-height:10px;font-size:8px;color:#8a8a8a;text-align:right;">45</div><div style="left:741.0px;top:633.9px;width:3px;height:1px;background:#8a8a8a;"></div><div class="t n" style="left:729.0px;top:639.0px;width:11px;height:10px;line-height:10px;font-size:8px;color:#8a8a8a;text-align:right;">50</div><div style="left:741.0px;top:643.5px;width:3px;height:1px;background:#8a8a8a;"></div><div class="t n" style="left:729.0px;top:650.1px;width:11px;height:10px;line-height:10px;font-size:8px;color:#8a8a8a;text-align:right;">60</div><div style="left:741.0px;top:654.6px;width:3px;height:1px;background:#8a8a8a;"></div>
<div style="left:743.0px;top:521px;width:1px;height:134.5px;border-left:1px dotted #8a8a8a;opacity:0.8;"></div>
<div style="left:745.0px;top:519px;width:11.5px;height:138.5px;background:#1c1c1c;border-radius:2px;"></div>
<div style="left:747.0px;top:567px;width:3px;height:89.5px;background:linear-gradient(#4fd15f,#a8d8a8 70%,#d0e0d0);"></div>
<div style="left:751.5px;top:565px;width:3px;height:91.5px;background:linear-gradient(#4fd15f,#a8d8a8 70%,#d0e0d0);"></div>
<div style="left:747.0px;top:561px;width:3px;height:1.5px;background:#4fd15f;"></div>
<div style="left:751.5px;top:562px;width:3px;height:1.5px;background:#4fd15f;"></div>
<div style="left:764.4px;top:520.65px;width:11px;height:1.5px;background:#6a6a6a;"></div><div style="left:764.4px;top:538.65px;width:11px;height:1.5px;background:#6a6a6a;"></div><div style="left:764.4px;top:556.05px;width:11px;height:1.5px;background:#b0b0b0;"></div><div style="left:764.4px;top:573.05px;width:11px;height:1.5px;background:#6a6a6a;"></div><div style="left:764.4px;top:589.95px;width:11px;height:1.5px;background:#6a6a6a;"></div><div style="left:764.4px;top:601.65px;width:11px;height:1.5px;background:#6a6a6a;"></div><div style="left:764.4px;top:615.55px;width:11px;height:1.5px;background:#6a6a6a;"></div><div style="left:764.4px;top:626.75px;width:11px;height:1.5px;background:#6a6a6a;"></div><div style="left:764.4px;top:638.15px;width:11px;height:1.5px;background:#6a6a6a;"></div><div style="left:764.4px;top:643.65px;width:11px;height:1.5px;background:#6a6a6a;"></div><div style="left:764.4px;top:654.35px;width:11px;height:1.5px;background:#6a6a6a;"></div><div style="left:771.4px;top:526.75px;width:4px;height:1.5px;background:#6a6a6a;"></div><div style="left:771.4px;top:532.25px;width:4px;height:1.5px;background:#6a6a6a;"></div><div style="left:771.4px;top:544.25px;width:4px;height:1.5px;background:#6a6a6a;"></div><div style="left:771.4px;top:549.75px;width:4px;height:1.5px;background:#6a6a6a;"></div><div style="left:771.4px;top:561.25px;width:4px;height:1.5px;background:#6a6a6a;"></div><div style="left:771.4px;top:566.75px;width:4px;height:1.5px;background:#6a6a6a;"></div><div style="left:771.4px;top:578.75px;width:4px;height:1.5px;background:#6a6a6a;"></div><div style="left:771.4px;top:584.25px;width:4px;height:1.5px;background:#6a6a6a;"></div><div style="left:771.4px;top:593.0500000000001px;width:4px;height:1.5px;background:#6a6a6a;"></div><div style="left:771.4px;top:596.25px;width:4px;height:1.5px;background:#6a6a6a;"></div><div style="left:771.4px;top:599.45px;width:4px;height:1.5px;background:#6a6a6a;"></div><div style="left:771.4px;top:605.85px;width:4px;height:1.5px;background:#6a6a6a;"></div><div style="left:771.4px;top:609.0500000000001px;width:4px;height:1.5px;background:#6a6a6a;"></div><div style="left:771.4px;top:612.25px;width:4px;height:1.5px;background:#6a6a6a;"></div><div style="left:771.4px;top:618.65px;width:4px;height:1.5px;background:#6a6a6a;"></div><div style="left:771.4px;top:621.85px;width:4px;height:1.5px;background:#6a6a6a;"></div><div style="left:771.4px;top:625.0500000000001px;width:4px;height:1.5px;background:#6a6a6a;"></div><div style="left:771.4px;top:628.25px;width:4px;height:1.5px;background:#6a6a6a;"></div><div style="left:771.4px;top:631.45px;width:4px;height:1.5px;background:#6a6a6a;"></div><div style="left:771.4px;top:634.65px;width:4px;height:1.5px;background:#6a6a6a;"></div><div style="left:771.4px;top:641.0500000000001px;width:4px;height:1.5px;background:#6a6a6a;"></div><div style="left:771.4px;top:647.45px;width:4px;height:1.5px;background:#6a6a6a;"></div><div style="left:771.4px;top:650.65px;width:4px;height:1.5px;background:#6a6a6a;"></div>
<div style="left:775.4px;top:519px;width:2px;height:138px;background:#141414;"></div>
<div style="left:768.4px;top:594.5px;width:18px;height:35.5px;background:linear-gradient(90deg,#9cbcf4,#c8dcff 40%,#b4cdfa);border:1px solid #6f9cf0;border-radius:3px;box-shadow:0 1px 2px rgba(0,0,0,.6);"></div>
<div style="left:769.4px;top:611.3px;width:16px;height:2.4px;background:#0a0a0a;"></div>
<div style="left:734.4px;top:683px;width:26.0px;height:16px;background:#3A3A3A;border-radius:4px;"></div>
<div class="t" style="left:729.4px;top:679.0px;width:36.0px;height:24px;line-height:24px;font-size:12px;color:#fff;font-weight:normal;text-align:center;-webkit-text-stroke:0.3px #fff;">M</div>
<div style="left:764.4px;top:683px;width:26.0px;height:16px;background:#3A3A3A;border-radius:4px;"></div>
<div class="t" style="left:759.4px;top:679.0px;width:36.0px;height:24px;line-height:24px;font-size:12px;color:#fff;font-weight:normal;text-align:center;-webkit-text-stroke:0.3px #fff;">S</div>
<div style="left:729.4px;top:719px;width:66.9px;height:24px;background:#9A961C;"></div>
<div style="left:795.3px;top:719px;width:1px;height:24px;background:#222;"></div>
<div class="t" style="left:726.4px;top:719.4px;width:72.9px;height:23.2px;line-height:23.2px;font-size:11.6px;color:#fff;font-weight:normal;text-align:center;-webkit-text-stroke:0.35px #fff;">Tromba</div>
<div style="left:796.3px;top:222px;width:66.9px;height:497px;background:#2A2A2A;"></div>
<div style="left:795.8px;top:222px;width:1px;height:497px;background:#363636;"></div>
<div style="left:800.3px;top:222px;width:58px;height:26px;background:#232323;border-radius:0 0 4px 4px;"></div>
<div style="left:800.3px;top:274px;width:39px;height:17px;background:#232323;border:1px solid #2a2a2a;border-radius:5px;"></div>
<div style="left:842.3px;top:275px;width:16px;height:16px;background:#232323;border:1px solid #2a2a2a;border-radius:50%;"></div>
<div style="left:800.3px;top:294px;width:39px;height:17px;background:#232323;border:1px solid #2a2a2a;border-radius:5px;"></div>
<div style="left:842.3px;top:295px;width:16px;height:16px;background:#232323;border:1px solid #2a2a2a;border-radius:50%;"></div>
<div style="left:800.3px;top:314px;width:39px;height:9px;background:#232323;border:1px solid #2a2a2a;border-radius:5px;"></div>
<div style="left:801.3px;top:332px;width:56.0px;height:15px;background:#3A3A3A;border-radius:4px;"></div>
<div class="t" style="left:796.3px;top:327.5px;width:66.0px;height:24px;line-height:24px;font-size:12px;color:#fff;font-weight:normal;text-align:center;-webkit-text-stroke:0.3px #fff;">St Out</div>
<div style="left:801.3px;top:354px;width:56px;height:17px;background:#242424;"></div>
<div style="left:801.3px;top:377px;width:56.0px;height:17px;background:#3A3A3A;border-radius:4px;"></div>
<div class="t" style="left:796.3px;top:373.5px;width:66.0px;height:24px;line-height:24px;font-size:12px;color:#5BE26F;font-weight:normal;text-align:center;-webkit-text-stroke:0.3px #5BE26F;">Read</div>
<div style="left:814.8px;top:404.5px;width:29px;height:21px;background:#33321f;"></div>
<svg style="position:absolute;left:820.8px;top:406.5px;" width="18" height="18" viewBox="0 0 18 18"><circle cx="9" cy="9" r="7.5" fill="#F0E23A"/><rect x="8" y="1.5" width="2" height="6" fill="#3d3b24"/></svg>
<svg style="position:absolute;left:813.4px;top:439.20000000000005px;" width="32.8" height="34.8" viewBox="0 0 32.8 34.8"><defs><linearGradient id="kg" x1="0" y1="0" x2="0" y2="1"><stop offset="0" stop-color="#444"/><stop offset="1" stop-color="#2a2a2a"/></linearGradient></defs><circle cx="16.4" cy="18.4" r="13.4" fill="url(#kg)" stroke="#0c0c0c" stroke-width="1.4"/><path d="M7.399999999999999 10.399999999999999 A11.9 11.9 0 0 1 25.4 10.399999999999999" stroke="#5a5a5a" stroke-width="0.8" fill="none"/><rect x="15.5" y="7.2" width="2" height="7.2" fill="#fff"/><rect x="16.0" y="2.2" width="1" height="3" fill="#bbb"/></svg>
<div style="left:801.3px;top:481px;width:27.0px;height:17.5px;background:#1c1c1c;border-radius:0px;letter-spacing:-0.7px;"></div>
<div class="t" style="left:796.3px;top:478.25px;width:37.0px;height:23.0px;line-height:23.0px;font-size:11.5px;color:#5BE26F;font-weight:normal;text-align:center;-webkit-text-stroke:0.3px #5BE26F;">-43,6</div>
<div style="left:830.3px;top:481px;width:27.0px;height:17.5px;background:#1c1c1c;border-radius:0px;letter-spacing:-0.7px;"></div>
<div class="t" style="left:825.3px;top:478.25px;width:37.0px;height:23.0px;line-height:23.0px;font-size:11.5px;color:#fff;font-weight:normal;text-align:center;-webkit-text-stroke:0.3px #fff;">0,0</div>
<div class="t n" style="left:795.9px;top:516.4px;width:11px;height:10px;line-height:10px;font-size:8px;color:#8a8a8a;text-align:right;">0</div><div style="left:807.9px;top:520.9px;width:3px;height:1px;background:#8a8a8a;"></div><div class="t n" style="left:795.9px;top:525.5px;width:11px;height:10px;line-height:10px;font-size:8px;color:#8a8a8a;text-align:right;">3</div><div style="left:807.9px;top:530.0px;width:3px;height:1px;background:#8a8a8a;"></div><div class="t n" style="left:795.9px;top:534.4px;width:11px;height:10px;line-height:10px;font-size:8px;color:#8a8a8a;text-align:right;">6</div><div style="left:807.9px;top:538.9px;width:3px;height:1px;background:#8a8a8a;"></div><div class="t n" style="left:795.9px;top:543.3px;width:11px;height:10px;line-height:10px;font-size:8px;color:#8a8a8a;text-align:right;">9</div><div style="left:807.9px;top:547.8px;width:3px;height:1px;background:#8a8a8a;"></div><div class="t n" style="left:795.9px;top:552.0px;width:11px;height:10px;line-height:10px;font-size:8px;color:#8a8a8a;text-align:right;">12</div><div style="left:807.9px;top:556.5px;width:3px;height:1px;background:#8a8a8a;"></div><div class="t n" style="left:795.9px;top:560.9px;width:11px;height:10px;line-height:10px;font-size:8px;color:#8a8a8a;text-align:right;">15</div><div style="left:807.9px;top:565.4px;width:3px;height:1px;background:#8a8a8a;"></div><div class="t n" style="left:795.9px;top:569.8px;width:11px;height:10px;line-height:10px;font-size:8px;color:#8a8a8a;text-align:right;">18</div><div style="left:807.9px;top:574.3px;width:3px;height:1px;background:#8a8a8a;"></div><div class="t n" style="left:795.9px;top:578.6px;width:11px;height:10px;line-height:10px;font-size:8px;color:#8a8a8a;text-align:right;">21</div><div style="left:807.9px;top:583.1px;width:3px;height:1px;background:#8a8a8a;"></div><div class="t n" style="left:795.9px;top:587.5px;width:11px;height:10px;line-height:10px;font-size:8px;color:#8a8a8a;text-align:right;">24</div><div style="left:807.9px;top:592.0px;width:3px;height:1px;background:#8a8a8a;"></div><div class="t n" style="left:795.9px;top:599.6px;width:11px;height:10px;line-height:10px;font-size:8px;color:#8a8a8a;text-align:right;">30</div><div style="left:807.9px;top:604.1px;width:3px;height:1px;background:#8a8a8a;"></div><div class="t n" style="left:795.9px;top:610.0px;width:11px;height:10px;line-height:10px;font-size:8px;color:#8a8a8a;text-align:right;">35</div><div style="left:807.9px;top:614.5px;width:3px;height:1px;background:#8a8a8a;"></div><div class="t n" style="left:795.9px;top:619.6px;width:11px;height:10px;line-height:10px;font-size:8px;color:#8a8a8a;text-align:right;">40</div><div style="left:807.9px;top:624.1px;width:3px;height:1px;background:#8a8a8a;"></div><div class="t n" style="left:795.9px;top:629.4px;width:11px;height:10px;line-height:10px;font-size:8px;color:#8a8a8a;text-align:right;">45</div><div style="left:807.9px;top:633.9px;width:3px;height:1px;background:#8a8a8a;"></div><div class="t n" style="left:795.9px;top:639.0px;width:11px;height:10px;line-height:10px;font-size:8px;color:#8a8a8a;text-align:right;">50</div><div style="left:807.9px;top:643.5px;width:3px;height:1px;background:#8a8a8a;"></div><div class="t n" style="left:795.9px;top:650.1px;width:11px;height:10px;line-height:10px;font-size:8px;color:#8a8a8a;text-align:right;">60</div><div style="left:807.9px;top:654.6px;width:3px;height:1px;background:#8a8a8a;"></div>
<div style="left:809.9px;top:521px;width:1px;height:134.5px;border-left:1px dotted #8a8a8a;opacity:0.8;"></div>
<div style="left:811.9px;top:519px;width:11.5px;height:138.5px;background:#1c1c1c;border-radius:2px;"></div>
<div style="left:831.3px;top:520.65px;width:11px;height:1.5px;background:#6a6a6a;"></div><div style="left:831.3px;top:538.65px;width:11px;height:1.5px;background:#6a6a6a;"></div><div style="left:831.3px;top:556.05px;width:11px;height:1.5px;background:#b0b0b0;"></div><div style="left:831.3px;top:573.05px;width:11px;height:1.5px;background:#6a6a6a;"></div><div style="left:831.3px;top:589.95px;width:11px;height:1.5px;background:#6a6a6a;"></div><div style="left:831.3px;top:601.65px;width:11px;height:1.5px;background:#6a6a6a;"></div><div style="left:831.3px;top:615.55px;width:11px;height:1.5px;background:#6a6a6a;"></div><div style="left:831.3px;top:626.75px;width:11px;height:1.5px;background:#6a6a6a;"></div><div style="left:831.3px;top:638.15px;width:11px;height:1.5px;background:#6a6a6a;"></div><div style="left:831.3px;top:643.65px;width:11px;height:1.5px;background:#6a6a6a;"></div><div style="left:831.3px;top:654.35px;width:11px;height:1.5px;background:#6a6a6a;"></div><div style="left:838.3px;top:526.75px;width:4px;height:1.5px;background:#6a6a6a;"></div><div style="left:838.3px;top:532.25px;width:4px;height:1.5px;background:#6a6a6a;"></div><div style="left:838.3px;top:544.25px;width:4px;height:1.5px;background:#6a6a6a;"></div><div style="left:838.3px;top:549.75px;width:4px;height:1.5px;background:#6a6a6a;"></div><div style="left:838.3px;top:561.25px;width:4px;height:1.5px;background:#6a6a6a;"></div><div style="left:838.3px;top:566.75px;width:4px;height:1.5px;background:#6a6a6a;"></div><div style="left:838.3px;top:578.75px;width:4px;height:1.5px;background:#6a6a6a;"></div><div style="left:838.3px;top:584.25px;width:4px;height:1.5px;background:#6a6a6a;"></div><div style="left:838.3px;top:593.0500000000001px;width:4px;height:1.5px;background:#6a6a6a;"></div><div style="left:838.3px;top:596.25px;width:4px;height:1.5px;background:#6a6a6a;"></div><div style="left:838.3px;top:599.45px;width:4px;height:1.5px;background:#6a6a6a;"></div><div style="left:838.3px;top:605.85px;width:4px;height:1.5px;background:#6a6a6a;"></div><div style="left:838.3px;top:609.0500000000001px;width:4px;height:1.5px;background:#6a6a6a;"></div><div style="left:838.3px;top:612.25px;width:4px;height:1.5px;background:#6a6a6a;"></div><div style="left:838.3px;top:618.65px;width:4px;height:1.5px;background:#6a6a6a;"></div><div style="left:838.3px;top:621.85px;width:4px;height:1.5px;background:#6a6a6a;"></div><div style="left:838.3px;top:625.0500000000001px;width:4px;height:1.5px;background:#6a6a6a;"></div><div style="left:838.3px;top:628.25px;width:4px;height:1.5px;background:#6a6a6a;"></div><div style="left:838.3px;top:631.45px;width:4px;height:1.5px;background:#6a6a6a;"></div><div style="left:838.3px;top:634.65px;width:4px;height:1.5px;background:#6a6a6a;"></div><div style="left:838.3px;top:641.0500000000001px;width:4px;height:1.5px;background:#6a6a6a;"></div><div style="left:838.3px;top:647.45px;width:4px;height:1.5px;background:#6a6a6a;"></div><div style="left:838.3px;top:650.65px;width:4px;height:1.5px;background:#6a6a6a;"></div>
<div style="left:842.3px;top:519px;width:2px;height:138px;background:#141414;"></div>
<div style="left:835.3px;top:538.7px;width:18px;height:35.5px;background:linear-gradient(90deg,#9cbcf4,#c8dcff 40%,#b4cdfa);border:1px solid #6f9cf0;border-radius:3px;box-shadow:0 1px 2px rgba(0,0,0,.6);"></div>
<div style="left:836.3px;top:555.5px;width:16px;height:2.4px;background:#0a0a0a;"></div>
<div style="left:801.3px;top:683px;width:26.0px;height:16px;background:#3A3A3A;border-radius:4px;"></div>
<div class="t" style="left:796.3px;top:679.0px;width:36.0px;height:24px;line-height:24px;font-size:12px;color:#fff;font-weight:normal;text-align:center;-webkit-text-stroke:0.3px #fff;">M</div>
<div style="left:831.3px;top:683px;width:26.0px;height:16px;background:#3A3A3A;border-radius:4px;"></div>
<div class="t" style="left:826.3px;top:679.0px;width:36.0px;height:24px;line-height:24px;font-size:12px;color:#fff;font-weight:normal;text-align:center;-webkit-text-stroke:0.3px #fff;">S</div>
<div style="left:796.3px;top:719px;width:66.9px;height:24px;background:#1D962F;"></div>
<div style="left:862.1999999999999px;top:719px;width:1px;height:24px;background:#222;"></div>
<div class="t" style="left:793.3px;top:719.4px;width:72.9px;height:23.2px;line-height:23.2px;font-size:11.6px;color:#fff;font-weight:normal;text-align:center;-webkit-text-stroke:0.35px #fff;">Smal...room</div>
<div style="left:863.2px;top:222px;width:66.9px;height:497px;background:#2A2A2A;"></div>
<div style="left:862.7px;top:222px;width:1px;height:497px;background:#363636;"></div>
<div style="left:867.2px;top:222px;width:58px;height:26px;background:#232323;border-radius:0 0 4px 4px;"></div>
<div style="left:867.2px;top:274px;width:39px;height:17px;background:#232323;border:1px solid #2a2a2a;border-radius:5px;"></div>
<div style="left:909.2px;top:275px;width:16px;height:16px;background:#232323;border:1px solid #2a2a2a;border-radius:50%;"></div>
<div style="left:867.2px;top:294px;width:39px;height:17px;background:#232323;border:1px solid #2a2a2a;border-radius:5px;"></div>
<div style="left:909.2px;top:295px;width:16px;height:16px;background:#232323;border:1px solid #2a2a2a;border-radius:50%;"></div>
<div style="left:867.2px;top:314px;width:39px;height:9px;background:#232323;border:1px solid #2a2a2a;border-radius:5px;"></div>
<div style="left:868.2px;top:332px;width:56.0px;height:15px;background:#3A3A3A;border-radius:4px;"></div>
<div class="t" style="left:863.2px;top:327.5px;width:66.0px;height:24px;line-height:24px;font-size:12px;color:#fff;font-weight:normal;text-align:center;-webkit-text-stroke:0.3px #fff;">St Out</div>
<div style="left:868.2px;top:354px;width:56px;height:17px;background:#242424;"></div>
<div style="left:868.2px;top:377px;width:56.0px;height:17px;background:#3A3A3A;border-radius:4px;"></div>
<div class="t" style="left:863.2px;top:373.5px;width:66.0px;height:24px;line-height:24px;font-size:12px;color:#5BE26F;font-weight:normal;text-align:center;-webkit-text-stroke:0.3px #5BE26F;">Read</div>
<div style="left:881.7px;top:404.5px;width:29px;height:21px;background:#33321f;"></div>
<svg style="position:absolute;left:887.7px;top:406.5px;" width="18" height="18" viewBox="0 0 18 18"><circle cx="9" cy="9" r="7.5" fill="#F0E23A"/><rect x="8" y="1.5" width="2" height="6" fill="#3d3b24"/></svg>
<svg style="position:absolute;left:880.3000000000001px;top:439.20000000000005px;" width="32.8" height="34.8" viewBox="0 0 32.8 34.8"><defs><linearGradient id="kg" x1="0" y1="0" x2="0" y2="1"><stop offset="0" stop-color="#444"/><stop offset="1" stop-color="#2a2a2a"/></linearGradient></defs><circle cx="16.4" cy="18.4" r="13.4" fill="url(#kg)" stroke="#0c0c0c" stroke-width="1.4"/><path d="M7.399999999999999 10.399999999999999 A11.9 11.9 0 0 1 25.4 10.399999999999999" stroke="#5a5a5a" stroke-width="0.8" fill="none"/><rect x="15.5" y="7.2" width="2" height="7.2" fill="#fff"/><rect x="16.0" y="2.2" width="1" height="3" fill="#bbb"/></svg>
<div style="left:868.2px;top:481px;width:27.0px;height:17.5px;background:#1c1c1c;border-radius:0px;letter-spacing:-0.7px;"></div>
<div class="t" style="left:863.2px;top:478.25px;width:37.0px;height:23.0px;line-height:23.0px;font-size:11.5px;color:#5BE26F;font-weight:normal;text-align:center;-webkit-text-stroke:0.3px #5BE26F;">-46,3</div>
<div style="left:897.2px;top:481px;width:27.0px;height:17.5px;background:#1c1c1c;border-radius:0px;letter-spacing:-0.7px;"></div>
<div class="t" style="left:892.2px;top:478.25px;width:37.0px;height:23.0px;line-height:23.0px;font-size:11.5px;color:#fff;font-weight:normal;text-align:center;-webkit-text-stroke:0.3px #fff;">0,0</div>
<div class="t n" style="left:862.8000000000001px;top:516.4px;width:11px;height:10px;line-height:10px;font-size:8px;color:#8a8a8a;text-align:right;">0</div><div style="left:874.8000000000001px;top:520.9px;width:3px;height:1px;background:#8a8a8a;"></div><div class="t n" style="left:862.8000000000001px;top:525.5px;width:11px;height:10px;line-height:10px;font-size:8px;color:#8a8a8a;text-align:right;">3</div><div style="left:874.8000000000001px;top:530.0px;width:3px;height:1px;background:#8a8a8a;"></div><div class="t n" style="left:862.8000000000001px;top:534.4px;width:11px;height:10px;line-height:10px;font-size:8px;color:#8a8a8a;text-align:right;">6</div><div style="left:874.8000000000001px;top:538.9px;width:3px;height:1px;background:#8a8a8a;"></div><div class="t n" style="left:862.8000000000001px;top:543.3px;width:11px;height:10px;line-height:10px;font-size:8px;color:#8a8a8a;text-align:right;">9</div><div style="left:874.8000000000001px;top:547.8px;width:3px;height:1px;background:#8a8a8a;"></div><div class="t n" style="left:862.8000000000001px;top:552.0px;width:11px;height:10px;line-height:10px;font-size:8px;color:#8a8a8a;text-align:right;">12</div><div style="left:874.8000000000001px;top:556.5px;width:3px;height:1px;background:#8a8a8a;"></div><div class="t n" style="left:862.8000000000001px;top:560.9px;width:11px;height:10px;line-height:10px;font-size:8px;color:#8a8a8a;text-align:right;">15</div><div style="left:874.8000000000001px;top:565.4px;width:3px;height:1px;background:#8a8a8a;"></div><div class="t n" style="left:862.8000000000001px;top:569.8px;width:11px;height:10px;line-height:10px;font-size:8px;color:#8a8a8a;text-align:right;">18</div><div style="left:874.8000000000001px;top:574.3px;width:3px;height:1px;background:#8a8a8a;"></div><div class="t n" style="left:862.8000000000001px;top:578.6px;width:11px;height:10px;line-height:10px;font-size:8px;color:#8a8a8a;text-align:right;">21</div><div style="left:874.8000000000001px;top:583.1px;width:3px;height:1px;background:#8a8a8a;"></div><div class="t n" style="left:862.8000000000001px;top:587.5px;width:11px;height:10px;line-height:10px;font-size:8px;color:#8a8a8a;text-align:right;">24</div><div style="left:874.8000000000001px;top:592.0px;width:3px;height:1px;background:#8a8a8a;"></div><div class="t n" style="left:862.8000000000001px;top:599.6px;width:11px;height:10px;line-height:10px;font-size:8px;color:#8a8a8a;text-align:right;">30</div><div style="left:874.8000000000001px;top:604.1px;width:3px;height:1px;background:#8a8a8a;"></div><div class="t n" style="left:862.8000000000001px;top:610.0px;width:11px;height:10px;line-height:10px;font-size:8px;color:#8a8a8a;text-align:right;">35</div><div style="left:874.8000000000001px;top:614.5px;width:3px;height:1px;background:#8a8a8a;"></div><div class="t n" style="left:862.8000000000001px;top:619.6px;width:11px;height:10px;line-height:10px;font-size:8px;color:#8a8a8a;text-align:right;">40</div><div style="left:874.8000000000001px;top:624.1px;width:3px;height:1px;background:#8a8a8a;"></div><div class="t n" style="left:862.8000000000001px;top:629.4px;width:11px;height:10px;line-height:10px;font-size:8px;color:#8a8a8a;text-align:right;">45</div><div style="left:874.8000000000001px;top:633.9px;width:3px;height:1px;background:#8a8a8a;"></div><div class="t n" style="left:862.8000000000001px;top:639.0px;width:11px;height:10px;line-height:10px;font-size:8px;color:#8a8a8a;text-align:right;">50</div><div style="left:874.8000000000001px;top:643.5px;width:3px;height:1px;background:#8a8a8a;"></div><div class="t n" style="left:862.8000000000001px;top:650.1px;width:11px;height:10px;line-height:10px;font-size:8px;color:#8a8a8a;text-align:right;">60</div><div style="left:874.8000000000001px;top:654.6px;width:3px;height:1px;background:#8a8a8a;"></div>
<div style="left:876.8000000000001px;top:521px;width:1px;height:134.5px;border-left:1px dotted #8a8a8a;opacity:0.8;"></div>
<div style="left:878.8000000000001px;top:519px;width:11.5px;height:138.5px;background:#1c1c1c;border-radius:2px;"></div>
<div style="left:898.2px;top:520.65px;width:11px;height:1.5px;background:#6a6a6a;"></div><div style="left:898.2px;top:538.65px;width:11px;height:1.5px;background:#6a6a6a;"></div><div style="left:898.2px;top:556.05px;width:11px;height:1.5px;background:#b0b0b0;"></div><div style="left:898.2px;top:573.05px;width:11px;height:1.5px;background:#6a6a6a;"></div><div style="left:898.2px;top:589.95px;width:11px;height:1.5px;background:#6a6a6a;"></div><div style="left:898.2px;top:601.65px;width:11px;height:1.5px;background:#6a6a6a;"></div><div style="left:898.2px;top:615.55px;width:11px;height:1.5px;background:#6a6a6a;"></div><div style="left:898.2px;top:626.75px;width:11px;height:1.5px;background:#6a6a6a;"></div><div style="left:898.2px;top:638.15px;width:11px;height:1.5px;background:#6a6a6a;"></div><div style="left:898.2px;top:643.65px;width:11px;height:1.5px;background:#6a6a6a;"></div><div style="left:898.2px;top:654.35px;width:11px;height:1.5px;background:#6a6a6a;"></div><div style="left:905.2px;top:526.75px;width:4px;height:1.5px;background:#6a6a6a;"></div><div style="left:905.2px;top:532.25px;width:4px;height:1.5px;background:#6a6a6a;"></div><div style="left:905.2px;top:544.25px;width:4px;height:1.5px;background:#6a6a6a;"></div><div style="left:905.2px;top:549.75px;width:4px;height:1.5px;background:#6a6a6a;"></div><div style="left:905.2px;top:561.25px;width:4px;height:1.5px;background:#6a6a6a;"></div><div style="left:905.2px;top:566.75px;width:4px;height:1.5px;background:#6a6a6a;"></div><div style="left:905.2px;top:578.75px;width:4px;height:1.5px;background:#6a6a6a;"></div><div style="left:905.2px;top:584.25px;width:4px;height:1.5px;background:#6a6a6a;"></div><div style="left:905.2px;top:593.0500000000001px;width:4px;height:1.5px;background:#6a6a6a;"></div><div style="left:905.2px;top:596.25px;width:4px;height:1.5px;background:#6a6a6a;"></div><div style="left:905.2px;top:599.45px;width:4px;height:1.5px;background:#6a6a6a;"></div><div style="left:905.2px;top:605.85px;width:4px;height:1.5px;background:#6a6a6a;"></div><div style="left:905.2px;top:609.0500000000001px;width:4px;height:1.5px;background:#6a6a6a;"></div><div style="left:905.2px;top:612.25px;width:4px;height:1.5px;background:#6a6a6a;"></div><div style="left:905.2px;top:618.65px;width:4px;height:1.5px;background:#6a6a6a;"></div><div style="left:905.2px;top:621.85px;width:4px;height:1.5px;background:#6a6a6a;"></div><div style="left:905.2px;top:625.0500000000001px;width:4px;height:1.5px;background:#6a6a6a;"></div><div style="left:905.2px;top:628.25px;width:4px;height:1.5px;background:#6a6a6a;"></div><div style="left:905.2px;top:631.45px;width:4px;height:1.5px;background:#6a6a6a;"></div><div style="left:905.2px;top:634.65px;width:4px;height:1.5px;background:#6a6a6a;"></div><div style="left:905.2px;top:641.0500000000001px;width:4px;height:1.5px;background:#6a6a6a;"></div><div style="left:905.2px;top:647.45px;width:4px;height:1.5px;background:#6a6a6a;"></div><div style="left:905.2px;top:650.65px;width:4px;height:1.5px;background:#6a6a6a;"></div>
<div style="left:909.2px;top:519px;width:2px;height:138px;background:#141414;"></div>
<div style="left:902.2px;top:538.7px;width:18px;height:35.5px;background:linear-gradient(90deg,#9cbcf4,#c8dcff 40%,#b4cdfa);border:1px solid #6f9cf0;border-radius:3px;box-shadow:0 1px 2px rgba(0,0,0,.6);"></div>
<div style="left:903.2px;top:555.5px;width:16px;height:2.4px;background:#0a0a0a;"></div>
<div style="left:868.2px;top:683px;width:26.0px;height:16px;background:#3A3A3A;border-radius:4px;"></div>
<div class="t" style="left:863.2px;top:679.0px;width:36.0px;height:24px;line-height:24px;font-size:12px;color:#fff;font-weight:normal;text-align:center;-webkit-text-stroke:0.3px #fff;">M</div>
<div style="left:898.2px;top:683px;width:26.0px;height:16px;background:#3A3A3A;border-radius:4px;"></div>
<div class="t" style="left:893.2px;top:679.0px;width:36.0px;height:24px;line-height:24px;font-size:12px;color:#fff;font-weight:normal;text-align:center;-webkit-text-stroke:0.3px #fff;">S</div>
<div style="left:863.2px;top:719px;width:66.9px;height:24px;background:#1D962F;"></div>
<div style="left:929.1px;top:719px;width:1px;height:24px;background:#222;"></div>
<div class="t" style="left:860.2px;top:719.4px;width:72.9px;height:23.2px;line-height:23.2px;font-size:11.6px;color:#fff;font-weight:normal;text-align:center;-webkit-text-stroke:0.35px #fff;">Larg...l One</div>
<div style="left:930.1px;top:222px;width:66.9px;height:497px;background:#2A2A2A;"></div>
<div style="left:929.6px;top:222px;width:1px;height:497px;background:#363636;"></div>
<div style="left:934.1px;top:222px;width:58px;height:45px;background:#2c2c2c;border-radius:0 0 4px 4px;"></div>
<div style="left:930.1px;top:222px;width:66.9px;height:12px;overflow:hidden;">
<div style="left:6px;top:-8px;width:54px;height:15px;background:#000;border-radius:4px;"></div>
<div class="t" style="left:1.0px;top:-11.5px;width:64px;height:22px;line-height:22px;font-size:11px;color:#fff;font-weight:normal;text-align:center;-webkit-text-stroke:0.3px #fff;">A1Stereo...</div>
</div>
<div style="left:936.1px;top:231px;width:54.0px;height:15px;background:#000;border-radius:4px;"></div>
<div class="t" style="left:931.1px;top:227.5px;width:64.0px;height:22px;line-height:22px;font-size:11px;color:#fff;font-weight:normal;text-align:center;-webkit-text-stroke:0.3px #fff;">Correlo...</div>
<div class="t" style="left:928.1px;top:248px;width:70px;height:22px;line-height:22px;font-size:11px;color:#8a8a8a;font-weight:normal;text-align:center;">Mastering</div>
<div style="left:935.1px;top:354px;width:56px;height:17px;background:#242424;"></div>
<div style="left:935.1px;top:377px;width:56.0px;height:17px;background:#3A3A3A;border-radius:4px;"></div>
<div class="t" style="left:930.1px;top:373.5px;width:66.0px;height:24px;line-height:24px;font-size:12px;color:#5BE26F;font-weight:normal;text-align:center;-webkit-text-stroke:0.3px #5BE26F;">Read</div>
<svg style="position:absolute;left:948.6px;top:403.5px;" width="30" height="24" viewBox="0 0 30 24"><rect x="0.5" y="0.5" width="29" height="22" rx="3" fill="#E840D8"/><g stroke="#5a1a50" stroke-width="1.6"><line x1="8.5" y1="9.5" x2="8.5" y2="13.5"/><line x1="11.1" y1="6.5" x2="11.1" y2="16.5"/><line x1="13.7" y1="4.5" x2="13.7" y2="18.5"/><line x1="16.3" y1="7.5" x2="16.3" y2="15.5"/><line x1="18.9" y1="5.5" x2="18.9" y2="17.5"/><line x1="21.5" y1="9.0" x2="21.5" y2="14.0"/></g></svg>
<svg style="position:absolute;left:947.2px;top:439.20000000000005px;" width="32.8" height="34.8" viewBox="0 0 32.8 34.8"><defs><linearGradient id="kg" x1="0" y1="0" x2="0" y2="1"><stop offset="0" stop-color="#444"/><stop offset="1" stop-color="#2a2a2a"/></linearGradient></defs><circle cx="16.4" cy="18.4" r="13.4" fill="url(#kg)" stroke="#0c0c0c" stroke-width="1.4"/><path d="M7.399999999999999 10.399999999999999 A11.9 11.9 0 0 1 25.4 10.399999999999999" stroke="#5a5a5a" stroke-width="0.8" fill="none"/><rect x="15.5" y="7.2" width="2" height="7.2" fill="#fff"/><rect x="16.0" y="2.2" width="1" height="3" fill="#bbb"/></svg>
<div style="left:935.1px;top:481px;width:27.0px;height:17.5px;background:#1c1c1c;border-radius:0px;letter-spacing:-0.7px;"></div>
<div class="t" style="left:930.1px;top:478.25px;width:37.0px;height:23.0px;line-height:23.0px;font-size:11.5px;color:#5BE26F;font-weight:normal;text-align:center;-webkit-text-stroke:0.3px #5BE26F;">-10,6</div>
<div style="left:964.1px;top:481px;width:27.0px;height:17.5px;background:#1c1c1c;border-radius:0px;letter-spacing:-0.7px;"></div>
<div class="t" style="left:959.1px;top:478.25px;width:37.0px;height:23.0px;line-height:23.0px;font-size:11.5px;color:#fff;font-weight:normal;text-align:center;-webkit-text-stroke:0.3px #fff;">0,0</div>
<div class="t n" style="left:929.7px;top:516.4px;width:11px;height:10px;line-height:10px;font-size:8px;color:#8a8a8a;text-align:right;">0</div><div style="left:941.7px;top:520.9px;width:3px;height:1px;background:#8a8a8a;"></div><div class="t n" style="left:929.7px;top:525.5px;width:11px;height:10px;line-height:10px;font-size:8px;color:#8a8a8a;text-align:right;">3</div><div style="left:941.7px;top:530.0px;width:3px;height:1px;background:#8a8a8a;"></div><div class="t n" style="left:929.7px;top:534.4px;width:11px;height:10px;line-height:10px;font-size:8px;color:#8a8a8a;text-align:right;">6</div><div style="left:941.7px;top:538.9px;width:3px;height:1px;background:#8a8a8a;"></div><div class="t n" style="left:929.7px;top:543.3px;width:11px;height:10px;line-height:10px;font-size:8px;color:#8a8a8a;text-align:right;">9</div><div style="left:941.7px;top:547.8px;width:3px;height:1px;background:#8a8a8a;"></div><div class="t n" style="left:929.7px;top:552.0px;width:11px;height:10px;line-height:10px;font-size:8px;color:#8a8a8a;text-align:right;">12</div><div style="left:941.7px;top:556.5px;width:3px;height:1px;background:#8a8a8a;"></div><div class="t n" style="left:929.7px;top:560.9px;width:11px;height:10px;line-height:10px;font-size:8px;color:#8a8a8a;text-align:right;">15</div><div style="left:941.7px;top:565.4px;width:3px;height:1px;background:#8a8a8a;"></div><div class="t n" style="left:929.7px;top:569.8px;width:11px;height:10px;line-height:10px;font-size:8px;color:#8a8a8a;text-align:right;">18</div><div style="left:941.7px;top:574.3px;width:3px;height:1px;background:#8a8a8a;"></div><div class="t n" style="left:929.7px;top:578.6px;width:11px;height:10px;line-height:10px;font-size:8px;color:#8a8a8a;text-align:right;">21</div><div style="left:941.7px;top:583.1px;width:3px;height:1px;background:#8a8a8a;"></div><div class="t n" style="left:929.7px;top:587.5px;width:11px;height:10px;line-height:10px;font-size:8px;color:#8a8a8a;text-align:right;">24</div><div style="left:941.7px;top:592.0px;width:3px;height:1px;background:#8a8a8a;"></div><div class="t n" style="left:929.7px;top:599.6px;width:11px;height:10px;line-height:10px;font-size:8px;color:#8a8a8a;text-align:right;">30</div><div style="left:941.7px;top:604.1px;width:3px;height:1px;background:#8a8a8a;"></div><div class="t n" style="left:929.7px;top:610.0px;width:11px;height:10px;line-height:10px;font-size:8px;color:#8a8a8a;text-align:right;">35</div><div style="left:941.7px;top:614.5px;width:3px;height:1px;background:#8a8a8a;"></div><div class="t n" style="left:929.7px;top:619.6px;width:11px;height:10px;line-height:10px;font-size:8px;color:#8a8a8a;text-align:right;">40</div><div style="left:941.7px;top:624.1px;width:3px;height:1px;background:#8a8a8a;"></div><div class="t n" style="left:929.7px;top:629.4px;width:11px;height:10px;line-height:10px;font-size:8px;color:#8a8a8a;text-align:right;">45</div><div style="left:941.7px;top:633.9px;width:3px;height:1px;background:#8a8a8a;"></div><div class="t n" style="left:929.7px;top:639.0px;width:11px;height:10px;line-height:10px;font-size:8px;color:#8a8a8a;text-align:right;">50</div><div style="left:941.7px;top:643.5px;width:3px;height:1px;background:#8a8a8a;"></div><div class="t n" style="left:929.7px;top:650.1px;width:11px;height:10px;line-height:10px;font-size:8px;color:#8a8a8a;text-align:right;">60</div><div style="left:941.7px;top:654.6px;width:3px;height:1px;background:#8a8a8a;"></div>
<div style="left:943.7px;top:521px;width:1px;height:134.5px;border-left:1px dotted #8a8a8a;opacity:0.8;"></div>
<div style="left:945.7px;top:519px;width:11.5px;height:138.5px;background:#1c1c1c;border-radius:2px;"></div>
<div style="left:947.7px;top:571px;width:3px;height:85.5px;background:linear-gradient(#4fd15f,#a8d8a8 70%,#d0e0d0);"></div>
<div style="left:952.2px;top:571px;width:3px;height:85.5px;background:linear-gradient(#4fd15f,#a8d8a8 70%,#d0e0d0);"></div>
<div style="left:947.7px;top:557px;width:3px;height:1.5px;background:#b8d040;"></div>
<div style="left:952.2px;top:568px;width:3px;height:1.5px;background:#4fd15f;"></div>
<div style="left:965.1px;top:520.65px;width:11px;height:1.5px;background:#6a6a6a;"></div><div style="left:965.1px;top:538.65px;width:11px;height:1.5px;background:#6a6a6a;"></div><div style="left:965.1px;top:556.05px;width:11px;height:1.5px;background:#b0b0b0;"></div><div style="left:965.1px;top:573.05px;width:11px;height:1.5px;background:#6a6a6a;"></div><div style="left:965.1px;top:589.95px;width:11px;height:1.5px;background:#6a6a6a;"></div><div style="left:965.1px;top:601.65px;width:11px;height:1.5px;background:#6a6a6a;"></div><div style="left:965.1px;top:615.55px;width:11px;height:1.5px;background:#6a6a6a;"></div><div style="left:965.1px;top:626.75px;width:11px;height:1.5px;background:#6a6a6a;"></div><div style="left:965.1px;top:638.15px;width:11px;height:1.5px;background:#6a6a6a;"></div><div style="left:965.1px;top:643.65px;width:11px;height:1.5px;background:#6a6a6a;"></div><div style="left:965.1px;top:654.35px;width:11px;height:1.5px;background:#6a6a6a;"></div><div style="left:972.1px;top:526.75px;width:4px;height:1.5px;background:#6a6a6a;"></div><div style="left:972.1px;top:532.25px;width:4px;height:1.5px;background:#6a6a6a;"></div><div style="left:972.1px;top:544.25px;width:4px;height:1.5px;background:#6a6a6a;"></div><div style="left:972.1px;top:549.75px;width:4px;height:1.5px;background:#6a6a6a;"></div><div style="left:972.1px;top:561.25px;width:4px;height:1.5px;background:#6a6a6a;"></div><div style="left:972.1px;top:566.75px;width:4px;height:1.5px;background:#6a6a6a;"></div><div style="left:972.1px;top:578.75px;width:4px;height:1.5px;background:#6a6a6a;"></div><div style="left:972.1px;top:584.25px;width:4px;height:1.5px;background:#6a6a6a;"></div><div style="left:972.1px;top:593.0500000000001px;width:4px;height:1.5px;background:#6a6a6a;"></div><div style="left:972.1px;top:596.25px;width:4px;height:1.5px;background:#6a6a6a;"></div><div style="left:972.1px;top:599.45px;width:4px;height:1.5px;background:#6a6a6a;"></div><div style="left:972.1px;top:605.85px;width:4px;height:1.5px;background:#6a6a6a;"></div><div style="left:972.1px;top:609.0500000000001px;width:4px;height:1.5px;background:#6a6a6a;"></div><div style="left:972.1px;top:612.25px;width:4px;height:1.5px;background:#6a6a6a;"></div><div style="left:972.1px;top:618.65px;width:4px;height:1.5px;background:#6a6a6a;"></div><div style="left:972.1px;top:621.85px;width:4px;height:1.5px;background:#6a6a6a;"></div><div style="left:972.1px;top:625.0500000000001px;width:4px;height:1.5px;background:#6a6a6a;"></div><div style="left:972.1px;top:628.25px;width:4px;height:1.5px;background:#6a6a6a;"></div><div style="left:972.1px;top:631.45px;width:4px;height:1.5px;background:#6a6a6a;"></div><div style="left:972.1px;top:634.65px;width:4px;height:1.5px;background:#6a6a6a;"></div><div style="left:972.1px;top:641.0500000000001px;width:4px;height:1.5px;background:#6a6a6a;"></div><div style="left:972.1px;top:647.45px;width:4px;height:1.5px;background:#6a6a6a;"></div><div style="left:972.1px;top:650.65px;width:4px;height:1.5px;background:#6a6a6a;"></div>
<div style="left:976.1px;top:519px;width:2px;height:138px;background:#141414;"></div>
<div style="left:969.1px;top:538.7px;width:18px;height:35.5px;background:linear-gradient(90deg,#9cbcf4,#c8dcff 40%,#b4cdfa);border:1px solid #6f9cf0;border-radius:3px;box-shadow:0 1px 2px rgba(0,0,0,.6);"></div>
<div style="left:970.1px;top:555.5px;width:16px;height:2.4px;background:#0a0a0a;"></div>
<div style="left:936.1px;top:663px;width:26.0px;height:16px;background:#3A3A3A;border-radius:4px;"></div>
<div class="t" style="left:931.1px;top:659.0px;width:36.0px;height:24px;line-height:24px;font-size:12px;color:#fff;font-weight:normal;text-align:center;-webkit-text-stroke:0.3px #fff;">Bnc</div>
<div style="left:935.1px;top:683px;width:26.0px;height:16px;background:#3A3A3A;border-radius:4px;"></div>
<div class="t" style="left:930.1px;top:679.0px;width:36.0px;height:24px;line-height:24px;font-size:12px;color:#fff;font-weight:normal;text-align:center;-webkit-text-stroke:0.3px #fff;">M</div>
<div style="left:965.1px;top:683px;width:26.0px;height:16px;background:#3A3A3A;border-radius:4px;"></div>
<div class="t" style="left:960.1px;top:679.0px;width:36.0px;height:24px;line-height:24px;font-size:12px;color:#fff;font-weight:normal;text-align:center;-webkit-text-stroke:0.3px #fff;">S</div>
<div style="left:930.1px;top:719px;width:66.9px;height:24px;background:#A0188C;"></div>
<div style="left:996.0px;top:719px;width:1px;height:24px;background:#222;"></div>
<div class="t" style="left:927.1px;top:719.4px;width:72.9px;height:23.2px;line-height:23.2px;font-size:11.6px;color:#fff;font-weight:normal;text-align:center;-webkit-text-stroke:0.35px #fff;">AI</div>
<div style="left:997.0px;top:222px;width:66.9px;height:497px;background:#2A2A2A;"></div>
<div style="left:996.5px;top:222px;width:1px;height:497px;background:#363636;"></div>
<div style="left:1002.0px;top:354px;width:56px;height:17px;background:#242424;"></div>
<div style="left:1002.0px;top:377px;width:56.0px;height:17px;background:#3A3A3A;border-radius:4px;"></div>
<div class="t" style="left:997.0px;top:373.5px;width:66.0px;height:24px;line-height:24px;font-size:12px;color:#fff;font-weight:normal;text-align:center;-webkit-text-stroke:0.3px #fff;">Read</div>
<svg style="position:absolute;left:1015.5px;top:403.5px;" width="30" height="24" viewBox="0 0 30 24"><rect x="0.5" y="0.5" width="29" height="22" rx="3" fill="#A566F0"/><g stroke="#3a1a60" stroke-width="1.6"><line x1="8.5" y1="9.5" x2="8.5" y2="13.5"/><line x1="11.1" y1="6.5" x2="11.1" y2="16.5"/><line x1="13.7" y1="4.5" x2="13.7" y2="18.5"/><line x1="16.3" y1="7.5" x2="16.3" y2="15.5"/><line x1="18.9" y1="5.5" x2="18.9" y2="17.5"/><line x1="21.5" y1="9.0" x2="21.5" y2="14.0"/></g></svg>
<div style="left:1002.0px;top:481px;width:56.0px;height:17.5px;background:#1c1c1c;border-radius:0px;"></div>
<div class="t" style="left:997.0px;top:477.75px;width:66.0px;height:24px;line-height:24px;font-size:12px;color:#fff;font-weight:normal;text-align:center;-webkit-text-stroke:0.3px #fff;">0,0</div>
<div style="left:1018.0px;top:520.65px;width:11px;height:1.5px;background:#6a6a6a;"></div><div style="left:1018.0px;top:538.65px;width:11px;height:1.5px;background:#6a6a6a;"></div><div style="left:1018.0px;top:556.05px;width:11px;height:1.5px;background:#b0b0b0;"></div><div style="left:1018.0px;top:573.05px;width:11px;height:1.5px;background:#6a6a6a;"></div><div style="left:1018.0px;top:589.95px;width:11px;height:1.5px;background:#6a6a6a;"></div><div style="left:1018.0px;top:601.65px;width:11px;height:1.5px;background:#6a6a6a;"></div><div style="left:1018.0px;top:615.55px;width:11px;height:1.5px;background:#6a6a6a;"></div><div style="left:1018.0px;top:626.75px;width:11px;height:1.5px;background:#6a6a6a;"></div><div style="left:1018.0px;top:638.15px;width:11px;height:1.5px;background:#6a6a6a;"></div><div style="left:1018.0px;top:643.65px;width:11px;height:1.5px;background:#6a6a6a;"></div><div style="left:1018.0px;top:654.35px;width:11px;height:1.5px;background:#6a6a6a;"></div><div style="left:1025.0px;top:526.75px;width:4px;height:1.5px;background:#6a6a6a;"></div><div style="left:1025.0px;top:532.25px;width:4px;height:1.5px;background:#6a6a6a;"></div><div style="left:1025.0px;top:544.25px;width:4px;height:1.5px;background:#6a6a6a;"></div><div style="left:1025.0px;top:549.75px;width:4px;height:1.5px;background:#6a6a6a;"></div><div style="left:1025.0px;top:561.25px;width:4px;height:1.5px;background:#6a6a6a;"></div><div style="left:1025.0px;top:566.75px;width:4px;height:1.5px;background:#6a6a6a;"></div><div style="left:1025.0px;top:578.75px;width:4px;height:1.5px;background:#6a6a6a;"></div><div style="left:1025.0px;top:584.25px;width:4px;height:1.5px;background:#6a6a6a;"></div><div style="left:1025.0px;top:593.0500000000001px;width:4px;height:1.5px;background:#6a6a6a;"></div><div style="left:1025.0px;top:596.25px;width:4px;height:1.5px;background:#6a6a6a;"></div><div style="left:1025.0px;top:599.45px;width:4px;height:1.5px;background:#6a6a6a;"></div><div style="left:1025.0px;top:605.85px;width:4px;height:1.5px;background:#6a6a6a;"></div><div style="left:1025.0px;top:609.0500000000001px;width:4px;height:1.5px;background:#6a6a6a;"></div><div style="left:1025.0px;top:612.25px;width:4px;height:1.5px;background:#6a6a6a;"></div><div style="left:1025.0px;top:618.65px;width:4px;height:1.5px;background:#6a6a6a;"></div><div style="left:1025.0px;top:621.85px;width:4px;height:1.5px;background:#6a6a6a;"></div><div style="left:1025.0px;top:625.0500000000001px;width:4px;height:1.5px;background:#6a6a6a;"></div><div style="left:1025.0px;top:628.25px;width:4px;height:1.5px;background:#6a6a6a;"></div><div style="left:1025.0px;top:631.45px;width:4px;height:1.5px;background:#6a6a6a;"></div><div style="left:1025.0px;top:634.65px;width:4px;height:1.5px;background:#6a6a6a;"></div><div style="left:1025.0px;top:641.0500000000001px;width:4px;height:1.5px;background:#6a6a6a;"></div><div style="left:1025.0px;top:647.45px;width:4px;height:1.5px;background:#6a6a6a;"></div><div style="left:1025.0px;top:650.65px;width:4px;height:1.5px;background:#6a6a6a;"></div>
<div style="left:1029.0px;top:519px;width:2px;height:138px;background:#141414;"></div>
<div style="left:1022.0px;top:538.7px;width:18px;height:35.5px;background:linear-gradient(90deg,#9cbcf4,#c8dcff 40%,#b4cdfa);border:1px solid #6f9cf0;border-radius:3px;box-shadow:0 1px 2px rgba(0,0,0,.6);"></div>
<div style="left:1023.0px;top:555.5px;width:16px;height:2.4px;background:#0a0a0a;"></div>
<div style="left:1002.0px;top:683px;width:26.0px;height:16px;background:#3A3A3A;border-radius:4px;"></div>
<div class="t" style="left:997.0px;top:679.0px;width:36.0px;height:24px;line-height:24px;font-size:12px;color:#fff;font-weight:normal;text-align:center;-webkit-text-stroke:0.3px #fff;">M</div>
<div style="left:1032.0px;top:683px;width:26.0px;height:16px;background:#3A3A3A;border-radius:4px;"></div>
<div class="t" style="left:1027.0px;top:679.0px;width:36.0px;height:24px;line-height:24px;font-size:12px;color:#fff;font-weight:normal;text-align:center;-webkit-text-stroke:0.3px #fff;">D</div>
<div style="left:997.0px;top:719px;width:66.9px;height:24px;background:#5B2FA6;"></div>
<div style="left:1062.9px;top:719px;width:1px;height:24px;background:#222;"></div>
<div class="t" style="left:994.0px;top:719.4px;width:72.9px;height:23.2px;line-height:23.2px;font-size:11.6px;color:#fff;font-weight:normal;text-align:center;-webkit-text-stroke:0.35px #fff;">Master</div>
<div style="left:394.9px;top:704px;width:267.6px;height:15px;background:#DEAD3B;"></div>
<svg style="position:absolute;left:394px;top:694px;" width="12" height="12" viewBox="0 0 12 12"><path d="M0 0 V12 H12 A12 12 0 0 1 0 0 Z" fill="#DEAD3B"/></svg>
<svg style="position:absolute;left:378px;top:703px;" width="10" height="12" viewBox="0 0 10 12"><path d="M2 1.5 L7 6 L2 10.5" stroke="#fff" stroke-width="1.5" fill="none"/></svg>
<svg style="position:absolute;left:780px;top:704px;" width="12" height="9" viewBox="0 0 12 9"><path d="M1.5 7 L6 2.5 L10.5 7" stroke="#ddd" stroke-width="1.5" fill="none"/></svg>
<div style="left:0px;top:742px;width:1313px;height:2px;background:#DADAD0;"></div>
<div class="t" style="left:230px;top:271px;width:90px;height:24px;line-height:24px;font-size:12px;color:#D4B8D0;font-weight:normal;text-align:right;">Sends</div>
<div class="t" style="left:230px;top:328px;width:90px;height:24px;line-height:24px;font-size:12px;color:#D4B8D0;font-weight:normal;text-align:right;">Output</div>
<div class="t" style="left:230px;top:351px;width:90px;height:24px;line-height:24px;font-size:12px;color:#D4B8D0;font-weight:normal;text-align:right;">Group</div>
<div class="t" style="left:230px;top:374px;width:90px;height:24px;line-height:24px;font-size:12px;color:#D4B8D0;font-weight:normal;text-align:right;">Automation</div>
<div class="t" style="left:230px;top:444px;width:90px;height:24px;line-height:24px;font-size:12px;color:#D4B8D0;font-weight:normal;text-align:right;">Pan</div>
<div class="t" style="left:230px;top:478px;width:90px;height:24px;line-height:24px;font-size:12px;color:#D4B8D0;font-weight:normal;text-align:right;">dB</div>
<div class="t" style="left:290px;top:516.4px;width:23px;height:10px;line-height:10px;font-size:8.5px;color:#C8B0C8;text-align:right;">6</div>
<div style="left:316px;top:520.4px;width:11px;height:2px;background:#B090B0;"></div>
<div class="t" style="left:290px;top:534.4px;width:23px;height:10px;line-height:10px;font-size:8.5px;color:#C8B0C8;text-align:right;">3</div>
<div style="left:316px;top:538.4px;width:11px;height:2px;background:#B090B0;"></div>
<div class="t" style="left:290px;top:551.5px;width:23px;height:10px;line-height:10px;font-size:8.5px;color:#eee;text-align:right;">0</div>
<div style="left:316px;top:555.5px;width:11px;height:2px;background:#ddd;"></div>
<div class="t" style="left:290px;top:568.8px;width:23px;height:10px;line-height:10px;font-size:8.5px;color:#C8B0C8;text-align:right;">-3</div>
<div style="left:316px;top:572.8px;width:11px;height:2px;background:#B090B0;"></div>
<div class="t" style="left:290px;top:585.7px;width:23px;height:10px;line-height:10px;font-size:8.5px;color:#C8B0C8;text-align:right;">-6</div>
<div style="left:316px;top:589.7px;width:11px;height:2px;background:#B090B0;"></div>
<div class="t" style="left:290px;top:597.4px;width:23px;height:10px;line-height:10px;font-size:8.5px;color:#C8B0C8;text-align:right;">-10</div>
<div style="left:316px;top:601.4px;width:11px;height:2px;background:#B090B0;"></div>
<div class="t" style="left:290px;top:611.3px;width:23px;height:10px;line-height:10px;font-size:8.5px;color:#C8B0C8;text-align:right;">-15</div>
<div style="left:316px;top:615.3px;width:11px;height:2px;background:#B090B0;"></div>
<div class="t" style="left:290px;top:622.5px;width:23px;height:10px;line-height:10px;font-size:8.5px;color:#C8B0C8;text-align:right;">-20</div>
<div style="left:316px;top:626.5px;width:11px;height:2px;background:#B090B0;"></div>
<div class="t" style="left:290px;top:633.9px;width:23px;height:10px;line-height:10px;font-size:8.5px;color:#C8B0C8;text-align:right;">-30</div>
<div style="left:316px;top:637.9px;width:11px;height:2px;background:#B090B0;"></div>
<div class="t" style="left:290px;top:639.4px;width:23px;height:10px;line-height:10px;font-size:8.5px;color:#C8B0C8;text-align:right;">-40</div>
<div style="left:316px;top:643.4px;width:11px;height:2px;background:#B090B0;"></div>
<div class="t" style="left:290px;top:650.1px;width:23px;height:10px;line-height:10px;font-size:8.5px;color:#C8B0C8;text-align:right;">∞</div>
<div style="left:316px;top:654.1px;width:11px;height:2px;background:#B090B0;"></div>
<div style="left:322px;top:530.0px;width:5px;height:1px;background:#A080A0;"></div>
<div style="left:322px;top:547.5px;width:5px;height:1px;background:#A080A0;"></div>
<div style="left:322px;top:564.5px;width:5px;height:1px;background:#A080A0;"></div>
<div style="left:322px;top:581.5px;width:5px;height:1px;background:#A080A0;"></div>
<div style="left:322px;top:595.5px;width:5px;height:1px;background:#A080A0;"></div>
<div style="left:322px;top:608.5px;width:5px;height:1px;background:#A080A0;"></div>
<div style="left:322px;top:620.5px;width:5px;height:1px;background:#A080A0;"></div>
<div style="left:322px;top:632.5px;width:5px;height:1px;background:#A080A0;"></div>
<div style="left:322px;top:649.5px;width:5px;height:1px;background:#A080A0;"></div>
<div style="left:22px;top:163px;width:68px;height:61px;background:#2c2c2c;border-radius:0 0 5px 5px;"></div>
<div style="left:23px;top:192px;width:66.5px;height:14.5px;background:#000;border-radius:4px;"></div>
<div class="t" style="left:18.0px;top:188.25px;width:76.5px;height:22px;line-height:22px;font-size:11px;color:#fff;font-weight:normal;text-align:center;-webkit-text-stroke:0.3px #fff;">HoRNetHa...</div>
<div style="left:22.5px;top:252px;width:49.0px;height:18px;background:#2e2e2e;border-radius:6px;"></div>
<div class="t" style="left:17.5px;top:249.0px;width:59.0px;height:24px;line-height:24px;font-size:12px;color:#8a8a8a;font-weight:normal;text-align:center;-webkit-text-stroke:0.3px #8a8a8a;">Sends</div>
<div style="left:75px;top:253px;width:16px;height:16px;background:#2c2c2c;border-radius:50%;"></div>
<div style="left:23px;top:279px;width:66.5px;height:15.5px;background:#3A3A3A;border-radius:4px;"></div>
<div class="t" style="left:18.0px;top:274.75px;width:76.5px;height:24px;line-height:24px;font-size:12px;color:#fff;font-weight:normal;text-align:center;-webkit-text-stroke:0.3px #fff;">Stereo Out</div>
<div style="left:23px;top:301px;width:66px;height:18px;background:#242424;"></div>
<div class="t" style="left:26.0px;top:298px;width:60px;height:24px;line-height:24px;font-size:12px;color:#111;font-weight:normal;text-align:center;">Group</div>
<div style="left:23px;top:325px;width:66.5px;height:16.5px;background:#3A3A3A;border-radius:4px;"></div>
<div class="t" style="left:18.0px;top:321.25px;width:76.5px;height:24px;line-height:24px;font-size:12px;color:#5BE26F;font-weight:normal;text-align:center;-webkit-text-stroke:0.3px #5BE26F;">Read</div>
<svg style="position:absolute;left:40.0px;top:347.8px;" width="32.8" height="34.8" viewBox="0 0 32.8 34.8"><defs><linearGradient id="kg" x1="0" y1="0" x2="0" y2="1"><stop offset="0" stop-color="#444"/><stop offset="1" stop-color="#2a2a2a"/></linearGradient></defs><circle cx="16.4" cy="18.4" r="13.4" fill="url(#kg)" stroke="#0c0c0c" stroke-width="1.4"/><path d="M7.399999999999999 10.399999999999999 A11.9 11.9 0 0 1 25.4 10.399999999999999" stroke="#5a5a5a" stroke-width="0.8" fill="none"/><rect x="15.5" y="7.2" width="2" height="7.2" fill="#fff"/><rect x="16.0" y="2.2" width="1" height="3" fill="#bbb"/></svg>
<div style="left:22.5px;top:389.5px;width:32.0px;height:18.0px;background:#1c1c1c;border-radius:0px;"></div>
<div class="t" style="left:17.5px;top:386.5px;width:42.0px;height:24px;line-height:24px;font-size:12px;color:#5BE26F;font-weight:normal;text-align:center;-webkit-text-stroke:0.3px #5BE26F;">-11,4</div>
<div style="left:58.3px;top:389.5px;width:32.0px;height:18.0px;background:#1c1c1c;border-radius:0px;"></div>
<div class="t" style="left:53.3px;top:386.5px;width:42.0px;height:24px;line-height:24px;font-size:12px;color:#fff;font-weight:normal;text-align:center;-webkit-text-stroke:0.3px #fff;">0,1</div>
<div class="t n" style="left:17px;top:424.6px;width:11px;height:10px;line-height:10px;font-size:8px;color:#8a8a8a;text-align:right;">0</div><div style="left:29px;top:429.1px;width:3px;height:1px;background:#8a8a8a;"></div><div class="t n" style="left:17px;top:440.4px;width:11px;height:10px;line-height:10px;font-size:8px;color:#8a8a8a;text-align:right;">3</div><div style="left:29px;top:444.9px;width:3px;height:1px;background:#8a8a8a;"></div><div class="t n" style="left:17px;top:456.0px;width:11px;height:10px;line-height:10px;font-size:8px;color:#8a8a8a;text-align:right;">6</div><div style="left:29px;top:460.5px;width:3px;height:1px;background:#8a8a8a;"></div><div class="t n" style="left:17px;top:471.7px;width:11px;height:10px;line-height:10px;font-size:8px;color:#8a8a8a;text-align:right;">9</div><div style="left:29px;top:476.2px;width:3px;height:1px;background:#8a8a8a;"></div><div class="t n" style="left:17px;top:487.2px;width:11px;height:10px;line-height:10px;font-size:8px;color:#8a8a8a;text-align:right;">12</div><div style="left:29px;top:491.7px;width:3px;height:1px;background:#8a8a8a;"></div><div class="t n" style="left:17px;top:502.8px;width:11px;height:10px;line-height:10px;font-size:8px;color:#8a8a8a;text-align:right;">15</div><div style="left:29px;top:507.3px;width:3px;height:1px;background:#8a8a8a;"></div><div class="t n" style="left:17px;top:518.4px;width:11px;height:10px;line-height:10px;font-size:8px;color:#8a8a8a;text-align:right;">18</div><div style="left:29px;top:522.9px;width:3px;height:1px;background:#8a8a8a;"></div><div class="t n" style="left:17px;top:534.0px;width:11px;height:10px;line-height:10px;font-size:8px;color:#8a8a8a;text-align:right;">21</div><div style="left:29px;top:538.5px;width:3px;height:1px;background:#8a8a8a;"></div><div class="t n" style="left:17px;top:549.6px;width:11px;height:10px;line-height:10px;font-size:8px;color:#8a8a8a;text-align:right;">24</div><div style="left:29px;top:554.1px;width:3px;height:1px;background:#8a8a8a;"></div><div class="t n" style="left:17px;top:570.6px;width:11px;height:10px;line-height:10px;font-size:8px;color:#8a8a8a;text-align:right;">30</div><div style="left:29px;top:575.1px;width:3px;height:1px;background:#8a8a8a;"></div><div class="t n" style="left:17px;top:588.6px;width:11px;height:10px;line-height:10px;font-size:8px;color:#8a8a8a;text-align:right;">35</div><div style="left:29px;top:593.1px;width:3px;height:1px;background:#8a8a8a;"></div><div class="t n" style="left:17px;top:605.9px;width:11px;height:10px;line-height:10px;font-size:8px;color:#8a8a8a;text-align:right;">40</div><div style="left:29px;top:610.4px;width:3px;height:1px;background:#8a8a8a;"></div><div class="t n" style="left:17px;top:623.1px;width:11px;height:10px;line-height:10px;font-size:8px;color:#8a8a8a;text-align:right;">45</div><div style="left:29px;top:627.6px;width:3px;height:1px;background:#8a8a8a;"></div><div class="t n" style="left:17px;top:640.4px;width:11px;height:10px;line-height:10px;font-size:8px;color:#8a8a8a;text-align:right;">50</div><div style="left:29px;top:644.9px;width:3px;height:1px;background:#8a8a8a;"></div><div class="t n" style="left:17px;top:658.9px;width:11px;height:10px;line-height:10px;font-size:8px;color:#8a8a8a;text-align:right;">60</div><div style="left:29px;top:663.4px;width:3px;height:1px;background:#8a8a8a;"></div>
<div style="left:32px;top:431px;width:1px;height:232px;border-left:1px dotted #8a8a8a;opacity:0.8;"></div>
<div style="left:34px;top:428px;width:11px;height:238px;background:#1c1c1c;border-radius:2px;"></div>
<div style="left:35.5px;top:527px;width:3px;height:138px;background:linear-gradient(#4fd15f,#a8d8a8 70%,#d0e0d0);"></div>
<div style="left:40.0px;top:527px;width:3px;height:138px;background:linear-gradient(#4fd15f,#a8d8a8 70%,#d0e0d0);"></div>
<div style="left:35.5px;top:509px;width:3px;height:1.5px;background:#4fd15f;"></div>
<div style="left:40.0px;top:509px;width:3px;height:1.5px;background:#4fd15f;"></div>
<div style="left:61.8px;top:428.85px;width:11px;height:1.5px;background:#6a6a6a;"></div><div style="left:67.8px;top:439.06666666666666px;width:5px;height:1.5px;background:#5a5a5a;"></div><div style="left:67.8px;top:449.53333333333336px;width:5px;height:1.5px;background:#5a5a5a;"></div><div style="left:61.8px;top:460.25px;width:11px;height:1.5px;background:#6a6a6a;"></div><div style="left:67.8px;top:470.0px;width:5px;height:1.5px;background:#5a5a5a;"></div><div style="left:67.8px;top:480.0px;width:5px;height:1.5px;background:#5a5a5a;"></div><div style="left:61.8px;top:490.25px;width:11px;height:1.5px;background:#a0a0a0;"></div><div style="left:67.8px;top:500.8px;width:5px;height:1.5px;background:#5a5a5a;"></div><div style="left:67.8px;top:511.6px;width:5px;height:1.5px;background:#5a5a5a;"></div><div style="left:61.8px;top:522.65px;width:11px;height:1.5px;background:#6a6a6a;"></div><div style="left:67.8px;top:532.8px;width:5px;height:1.5px;background:#5a5a5a;"></div><div style="left:67.8px;top:543.2px;width:5px;height:1.5px;background:#5a5a5a;"></div><div style="left:61.8px;top:553.85px;width:11px;height:1.5px;background:#6a6a6a;"></div><div style="left:67.8px;top:560.6px;width:5px;height:1.5px;background:#5a5a5a;"></div><div style="left:67.8px;top:567.6px;width:5px;height:1.5px;background:#5a5a5a;"></div><div style="left:61.8px;top:574.85px;width:11px;height:1.5px;background:#6a6a6a;"></div><div style="left:67.8px;top:582.6px;width:5px;height:1.5px;background:#5a5a5a;"></div><div style="left:67.8px;top:590.6px;width:5px;height:1.5px;background:#5a5a5a;"></div><div style="left:61.8px;top:598.85px;width:11px;height:1.5px;background:#6a6a6a;"></div><div style="left:67.8px;top:605.1666666666666px;width:5px;height:1.5px;background:#5a5a5a;"></div><div style="left:67.8px;top:611.7333333333333px;width:5px;height:1.5px;background:#5a5a5a;"></div><div style="left:61.8px;top:618.55px;width:11px;height:1.5px;background:#6a6a6a;"></div><div style="left:67.8px;top:624.8666666666667px;width:5px;height:1.5px;background:#5a5a5a;"></div><div style="left:67.8px;top:631.4333333333333px;width:5px;height:1.5px;background:#5a5a5a;"></div><div style="left:61.8px;top:638.25px;width:11px;height:1.5px;background:#6a6a6a;"></div><div style="left:67.8px;top:641.2333333333333px;width:5px;height:1.5px;background:#5a5a5a;"></div><div style="left:67.8px;top:644.4666666666667px;width:5px;height:1.5px;background:#5a5a5a;"></div><div style="left:61.8px;top:647.95px;width:11px;height:1.5px;background:#6a6a6a;"></div><div style="left:67.8px;top:652.7666666666667px;width:5px;height:1.5px;background:#5a5a5a;"></div><div style="left:67.8px;top:657.8333333333334px;width:5px;height:1.5px;background:#5a5a5a;"></div><div style="left:61.8px;top:663.15px;width:11px;height:1.5px;background:#6a6a6a;"></div>
<div style="left:72.8px;top:427px;width:2px;height:240px;background:#141414;"></div>
<div style="left:64.8px;top:472.5px;width:18.5px;height:36px;background:linear-gradient(90deg,#9cbcf4,#c8dcff 40%,#b4cdfa);border:1px solid #6f9cf0;border-radius:3px;box-shadow:0 1px 2px rgba(0,0,0,.6);"></div>
<div style="left:65.8px;top:489px;width:16.5px;height:2.5px;background:#0a0a0a;"></div>
<div style="left:22.5px;top:692px;width:31.0px;height:16px;background:#3A3A3A;border-radius:4px;"></div>
<div class="t" style="left:17.5px;top:688.0px;width:41.0px;height:24px;line-height:24px;font-size:12px;color:#fff;font-weight:normal;text-align:center;-webkit-text-stroke:0.3px #fff;">M</div>
<div style="left:59px;top:692px;width:31px;height:16px;background:#3A3A3A;border-radius:4px;"></div>
<div class="t" style="left:54.0px;top:688.0px;width:41px;height:24px;line-height:24px;font-size:12px;color:#fff;font-weight:normal;text-align:center;-webkit-text-stroke:0.3px #fff;">S</div>
<div class="t" style="left:-0.5px;top:718.6px;width:116px;height:22.8px;line-height:22.8px;font-size:11.4px;color:#fff;font-weight:normal;text-align:center;">Vamos va...s (Stems)</div>
<div style="left:140px;top:163px;width:69px;height:78px;background:#2c2c2c;border-radius:0 0 5px 5px;"></div>
<div style="left:141.5px;top:157.5px;width:66.19999999999999px;height:14.5px;background:#000;border-radius:4px;"></div>
<div class="t" style="left:136.5px;top:153.75px;width:76.19999999999999px;height:22px;line-height:22px;font-size:11px;color:#fff;font-weight:normal;text-align:center;-webkit-text-stroke:0.3px #fff;">Free Clip</div>
<div style="left:141.5px;top:175px;width:66.19999999999999px;height:14.5px;background:#000;border-radius:4px;"></div>
<div class="t" style="left:136.5px;top:171.25px;width:76.19999999999999px;height:22px;line-height:22px;font-size:11px;color:#fff;font-weight:normal;text-align:center;-webkit-text-stroke:0.3px #fff;">W1 Limiter</div>
<div style="left:141.5px;top:192px;width:66.19999999999999px;height:14.5px;background:#000;border-radius:4px;"></div>
<div class="t" style="left:136.5px;top:188.25px;width:76.19999999999999px;height:22px;line-height:22px;font-size:11px;color:#fff;font-weight:normal;text-align:center;-webkit-text-stroke:0.3px #fff;">A1StereoCo</div>
<div style="left:141.5px;top:209px;width:66.19999999999999px;height:14.5px;background:#000;border-radius:4px;"></div>
<div class="t" style="left:136.5px;top:205.25px;width:76.19999999999999px;height:22px;line-height:22px;font-size:11px;color:#fff;font-weight:normal;text-align:center;-webkit-text-stroke:0.3px #fff;">Correlomet</div>
<div class="t" style="left:134.5px;top:225px;width:80px;height:22px;line-height:22px;font-size:11px;color:#8a8a8a;font-weight:normal;text-align:center;">Mastering</div>
<div style="left:140px;top:241px;width:69px;height:3px;background:#2A2A2A;"></div>
<div style="left:140px;top:301px;width:66px;height:18px;background:#242424;"></div>
<div class="t" style="left:143.0px;top:298px;width:60px;height:24px;line-height:24px;font-size:12px;color:#111;font-weight:normal;text-align:center;">Group</div>
<div style="left:140px;top:325px;width:66.5px;height:16.5px;background:#3A3A3A;border-radius:4px;"></div>
<div class="t" style="left:135.0px;top:321.25px;width:76.5px;height:24px;line-height:24px;font-size:12px;color:#5BE26F;font-weight:normal;text-align:center;-webkit-text-stroke:0.3px #5BE26F;">Read</div>
<svg style="position:absolute;left:157.79999999999998px;top:347.8px;" width="32.8" height="34.8" viewBox="0 0 32.8 34.8"><defs><linearGradient id="kg" x1="0" y1="0" x2="0" y2="1"><stop offset="0" stop-color="#444"/><stop offset="1" stop-color="#2a2a2a"/></linearGradient></defs><circle cx="16.4" cy="18.4" r="13.4" fill="url(#kg)" stroke="#0c0c0c" stroke-width="1.4"/><path d="M7.399999999999999 10.399999999999999 A11.9 11.9 0 0 1 25.4 10.399999999999999" stroke="#5a5a5a" stroke-width="0.8" fill="none"/><rect x="15.5" y="7.2" width="2" height="7.2" fill="#fff"/><rect x="16.0" y="2.2" width="1" height="3" fill="#bbb"/></svg>
<div style="left:139.5px;top:389.5px;width:32.0px;height:18.0px;background:#1c1c1c;border-radius:0px;"></div>
<div class="t" style="left:134.5px;top:386.5px;width:42.0px;height:24px;line-height:24px;font-size:12px;color:#5BE26F;font-weight:normal;text-align:center;-webkit-text-stroke:0.3px #5BE26F;">-10,6</div>
<div style="left:175.3px;top:389.5px;width:32.0px;height:18.0px;background:#1c1c1c;border-radius:0px;"></div>
<div class="t" style="left:170.3px;top:386.5px;width:42.0px;height:24px;line-height:24px;font-size:12px;color:#fff;font-weight:normal;text-align:center;-webkit-text-stroke:0.3px #fff;">0,0</div>
<div class="t n" style="left:133.3px;top:424.6px;width:11px;height:10px;line-height:10px;font-size:8px;color:#8a8a8a;text-align:right;">0</div><div style="left:145.3px;top:429.1px;width:3px;height:1px;background:#8a8a8a;"></div><div class="t n" style="left:133.3px;top:440.4px;width:11px;height:10px;line-height:10px;font-size:8px;color:#8a8a8a;text-align:right;">3</div><div style="left:145.3px;top:444.9px;width:3px;height:1px;background:#8a8a8a;"></div><div class="t n" style="left:133.3px;top:456.0px;width:11px;height:10px;line-height:10px;font-size:8px;color:#8a8a8a;text-align:right;">6</div><div style="left:145.3px;top:460.5px;width:3px;height:1px;background:#8a8a8a;"></div><div class="t n" style="left:133.3px;top:471.7px;width:11px;height:10px;line-height:10px;font-size:8px;color:#8a8a8a;text-align:right;">9</div><div style="left:145.3px;top:476.2px;width:3px;height:1px;background:#8a8a8a;"></div><div class="t n" style="left:133.3px;top:487.2px;width:11px;height:10px;line-height:10px;font-size:8px;color:#8a8a8a;text-align:right;">12</div><div style="left:145.3px;top:491.7px;width:3px;height:1px;background:#8a8a8a;"></div><div class="t n" style="left:133.3px;top:502.8px;width:11px;height:10px;line-height:10px;font-size:8px;color:#8a8a8a;text-align:right;">15</div><div style="left:145.3px;top:507.3px;width:3px;height:1px;background:#8a8a8a;"></div><div class="t n" style="left:133.3px;top:518.4px;width:11px;height:10px;line-height:10px;font-size:8px;color:#8a8a8a;text-align:right;">18</div><div style="left:145.3px;top:522.9px;width:3px;height:1px;background:#8a8a8a;"></div><div class="t n" style="left:133.3px;top:534.0px;width:11px;height:10px;line-height:10px;font-size:8px;color:#8a8a8a;text-align:right;">21</div><div style="left:145.3px;top:538.5px;width:3px;height:1px;background:#8a8a8a;"></div><div class="t n" style="left:133.3px;top:549.6px;width:11px;height:10px;line-height:10px;font-size:8px;color:#8a8a8a;text-align:right;">24</div><div style="left:145.3px;top:554.1px;width:3px;height:1px;background:#8a8a8a;"></div><div class="t n" style="left:133.3px;top:570.6px;width:11px;height:10px;line-height:10px;font-size:8px;color:#8a8a8a;text-align:right;">30</div><div style="left:145.3px;top:575.1px;width:3px;height:1px;background:#8a8a8a;"></div><div class="t n" style="left:133.3px;top:588.6px;width:11px;height:10px;line-height:10px;font-size:8px;color:#8a8a8a;text-align:right;">35</div><div style="left:145.3px;top:593.1px;width:3px;height:1px;background:#8a8a8a;"></div><div class="t n" style="left:133.3px;top:605.9px;width:11px;height:10px;line-height:10px;font-size:8px;color:#8a8a8a;text-align:right;">40</div><div style="left:145.3px;top:610.4px;width:3px;height:1px;background:#8a8a8a;"></div><div class="t n" style="left:133.3px;top:623.1px;width:11px;height:10px;line-height:10px;font-size:8px;color:#8a8a8a;text-align:right;">45</div><div style="left:145.3px;top:627.6px;width:3px;height:1px;background:#8a8a8a;"></div><div class="t n" style="left:133.3px;top:640.4px;width:11px;height:10px;line-height:10px;font-size:8px;color:#8a8a8a;text-align:right;">50</div><div style="left:145.3px;top:644.9px;width:3px;height:1px;background:#8a8a8a;"></div><div class="t n" style="left:133.3px;top:658.9px;width:11px;height:10px;line-height:10px;font-size:8px;color:#8a8a8a;text-align:right;">60</div><div style="left:145.3px;top:663.4px;width:3px;height:1px;background:#8a8a8a;"></div>
<div style="left:148.3px;top:431px;width:1px;height:232px;border-left:1px dotted #8a8a8a;opacity:0.8;"></div>
<div style="left:150.3px;top:428px;width:11px;height:238px;background:#1c1c1c;border-radius:2px;"></div>
<div style="left:151.8px;top:518px;width:3px;height:147px;background:linear-gradient(#4fd15f,#a8d8a8 70%,#d0e0d0);"></div>
<div style="left:156.3px;top:518px;width:3px;height:147px;background:linear-gradient(#4fd15f,#a8d8a8 70%,#d0e0d0);"></div>
<div style="left:151.8px;top:493px;width:3px;height:1.5px;background:#b0d040;"></div>
<div style="left:156.3px;top:511px;width:3px;height:1.5px;background:#4fd15f;"></div>
<div style="left:179.5px;top:428.85px;width:11px;height:1.5px;background:#6a6a6a;"></div><div style="left:185.5px;top:439.06666666666666px;width:5px;height:1.5px;background:#5a5a5a;"></div><div style="left:185.5px;top:449.53333333333336px;width:5px;height:1.5px;background:#5a5a5a;"></div><div style="left:179.5px;top:460.25px;width:11px;height:1.5px;background:#6a6a6a;"></div><div style="left:185.5px;top:470.0px;width:5px;height:1.5px;background:#5a5a5a;"></div><div style="left:185.5px;top:480.0px;width:5px;height:1.5px;background:#5a5a5a;"></div><div style="left:179.5px;top:490.25px;width:11px;height:1.5px;background:#a0a0a0;"></div><div style="left:185.5px;top:500.8px;width:5px;height:1.5px;background:#5a5a5a;"></div><div style="left:185.5px;top:511.6px;width:5px;height:1.5px;background:#5a5a5a;"></div><div style="left:179.5px;top:522.65px;width:11px;height:1.5px;background:#6a6a6a;"></div><div style="left:185.5px;top:532.8px;width:5px;height:1.5px;background:#5a5a5a;"></div><div style="left:185.5px;top:543.2px;width:5px;height:1.5px;background:#5a5a5a;"></div><div style="left:179.5px;top:553.85px;width:11px;height:1.5px;background:#6a6a6a;"></div><div style="left:185.5px;top:560.6px;width:5px;height:1.5px;background:#5a5a5a;"></div><div style="left:185.5px;top:567.6px;width:5px;height:1.5px;background:#5a5a5a;"></div><div style="left:179.5px;top:574.85px;width:11px;height:1.5px;background:#6a6a6a;"></div><div style="left:185.5px;top:582.6px;width:5px;height:1.5px;background:#5a5a5a;"></div><div style="left:185.5px;top:590.6px;width:5px;height:1.5px;background:#5a5a5a;"></div><div style="left:179.5px;top:598.85px;width:11px;height:1.5px;background:#6a6a6a;"></div><div style="left:185.5px;top:605.1666666666666px;width:5px;height:1.5px;background:#5a5a5a;"></div><div style="left:185.5px;top:611.7333333333333px;width:5px;height:1.5px;background:#5a5a5a;"></div><div style="left:179.5px;top:618.55px;width:11px;height:1.5px;background:#6a6a6a;"></div><div style="left:185.5px;top:624.8666666666667px;width:5px;height:1.5px;background:#5a5a5a;"></div><div style="left:185.5px;top:631.4333333333333px;width:5px;height:1.5px;background:#5a5a5a;"></div><div style="left:179.5px;top:638.25px;width:11px;height:1.5px;background:#6a6a6a;"></div><div style="left:185.5px;top:641.2333333333333px;width:5px;height:1.5px;background:#5a5a5a;"></div><div style="left:185.5px;top:644.4666666666667px;width:5px;height:1.5px;background:#5a5a5a;"></div><div style="left:179.5px;top:647.95px;width:11px;height:1.5px;background:#6a6a6a;"></div><div style="left:185.5px;top:652.7666666666667px;width:5px;height:1.5px;background:#5a5a5a;"></div><div style="left:185.5px;top:657.8333333333334px;width:5px;height:1.5px;background:#5a5a5a;"></div><div style="left:179.5px;top:663.15px;width:11px;height:1.5px;background:#6a6a6a;"></div>
<div style="left:190.5px;top:427px;width:2px;height:240px;background:#141414;"></div>
<div style="left:182.5px;top:472.5px;width:18.5px;height:36px;background:linear-gradient(90deg,#9cbcf4,#c8dcff 40%,#b4cdfa);border:1px solid #6f9cf0;border-radius:3px;box-shadow:0 1px 2px rgba(0,0,0,.6);"></div>
<div style="left:183.5px;top:489px;width:16.5px;height:2.5px;background:#0a0a0a;"></div>
<div style="left:141.5px;top:672.5px;width:30.5px;height:14.0px;background:#3A3A3A;border-radius:4px;"></div>
<div class="t" style="left:136.5px;top:667.5px;width:40.5px;height:24px;line-height:24px;font-size:12px;color:#fff;font-weight:normal;text-align:center;-webkit-text-stroke:0.3px #fff;">Bnc</div>
<div style="left:141.5px;top:692px;width:30.5px;height:16px;background:#3A3A3A;border-radius:4px;"></div>
<div class="t" style="left:136.5px;top:688.0px;width:40.5px;height:24px;line-height:24px;font-size:12px;color:#fff;font-weight:normal;text-align:center;-webkit-text-stroke:0.3px #fff;">M</div>
<div style="left:177px;top:692px;width:31px;height:16px;background:#3A3A3A;border-radius:4px;"></div>
<div class="t" style="left:172.0px;top:688.0px;width:41px;height:24px;line-height:24px;font-size:12px;color:#fff;font-weight:normal;text-align:center;-webkit-text-stroke:0.3px #fff;">S</div>
<div class="t" style="left:125.5px;top:718.5px;width:100px;height:23.0px;line-height:23.0px;font-size:11.5px;color:#fff;font-weight:normal;text-align:center;">AI</div>
<div style="left:0px;top:163px;width:10px;height:581px;background:linear-gradient(90deg,rgba(0,0,0,.25),rgba(0,0,0,0));"></div>
<div style="left:0px;top:742px;width:234px;height:2px;background:#E8E0C0;"></div>
<div style="left:0px;top:88px;width:234px;height:75px;background:#DEAD3B;"></div>
<div style="left:0px;top:125px;width:234px;height:1px;background:#b8892a;"></div>
<svg style="position:absolute;left:9px;top:100px;" width="10" height="14" viewBox="0 0 10 14"><path d="M2 2 L7 7 L2 12" stroke="#f3e3b8" stroke-width="1.5" fill="none"/></svg>
<svg style="position:absolute;left:9px;top:138px;" width="10" height="14" viewBox="0 0 10 14"><path d="M2 2 L7 7 L2 12" stroke="#f3e3b8" stroke-width="1.5" fill="none"/></svg>
<div class="t" style="left:30px;top:93.6px;height:27.8px;line-height:27.8px;font-size:13.9px;color:#fff;font-weight:normal;white-space:nowrap;-webkit-text-stroke:0.35px currentColor;"><span style="color:#F2DFAE;font-size:13px">Region:</span><span style="margin-left:5px">MIDI Defaults</span></div>
<div class="t" style="left:30px;top:131.8px;height:27.4px;line-height:27.4px;font-size:13.7px;color:#fff;font-weight:normal;white-space:nowrap;-webkit-text-stroke:0.35px currentColor;"><span style="color:#F2DFAE;font-size:13px">Track:</span><span style="margin-left:8px">Vamos vamos (Stems)</span></div>
</body></html>
